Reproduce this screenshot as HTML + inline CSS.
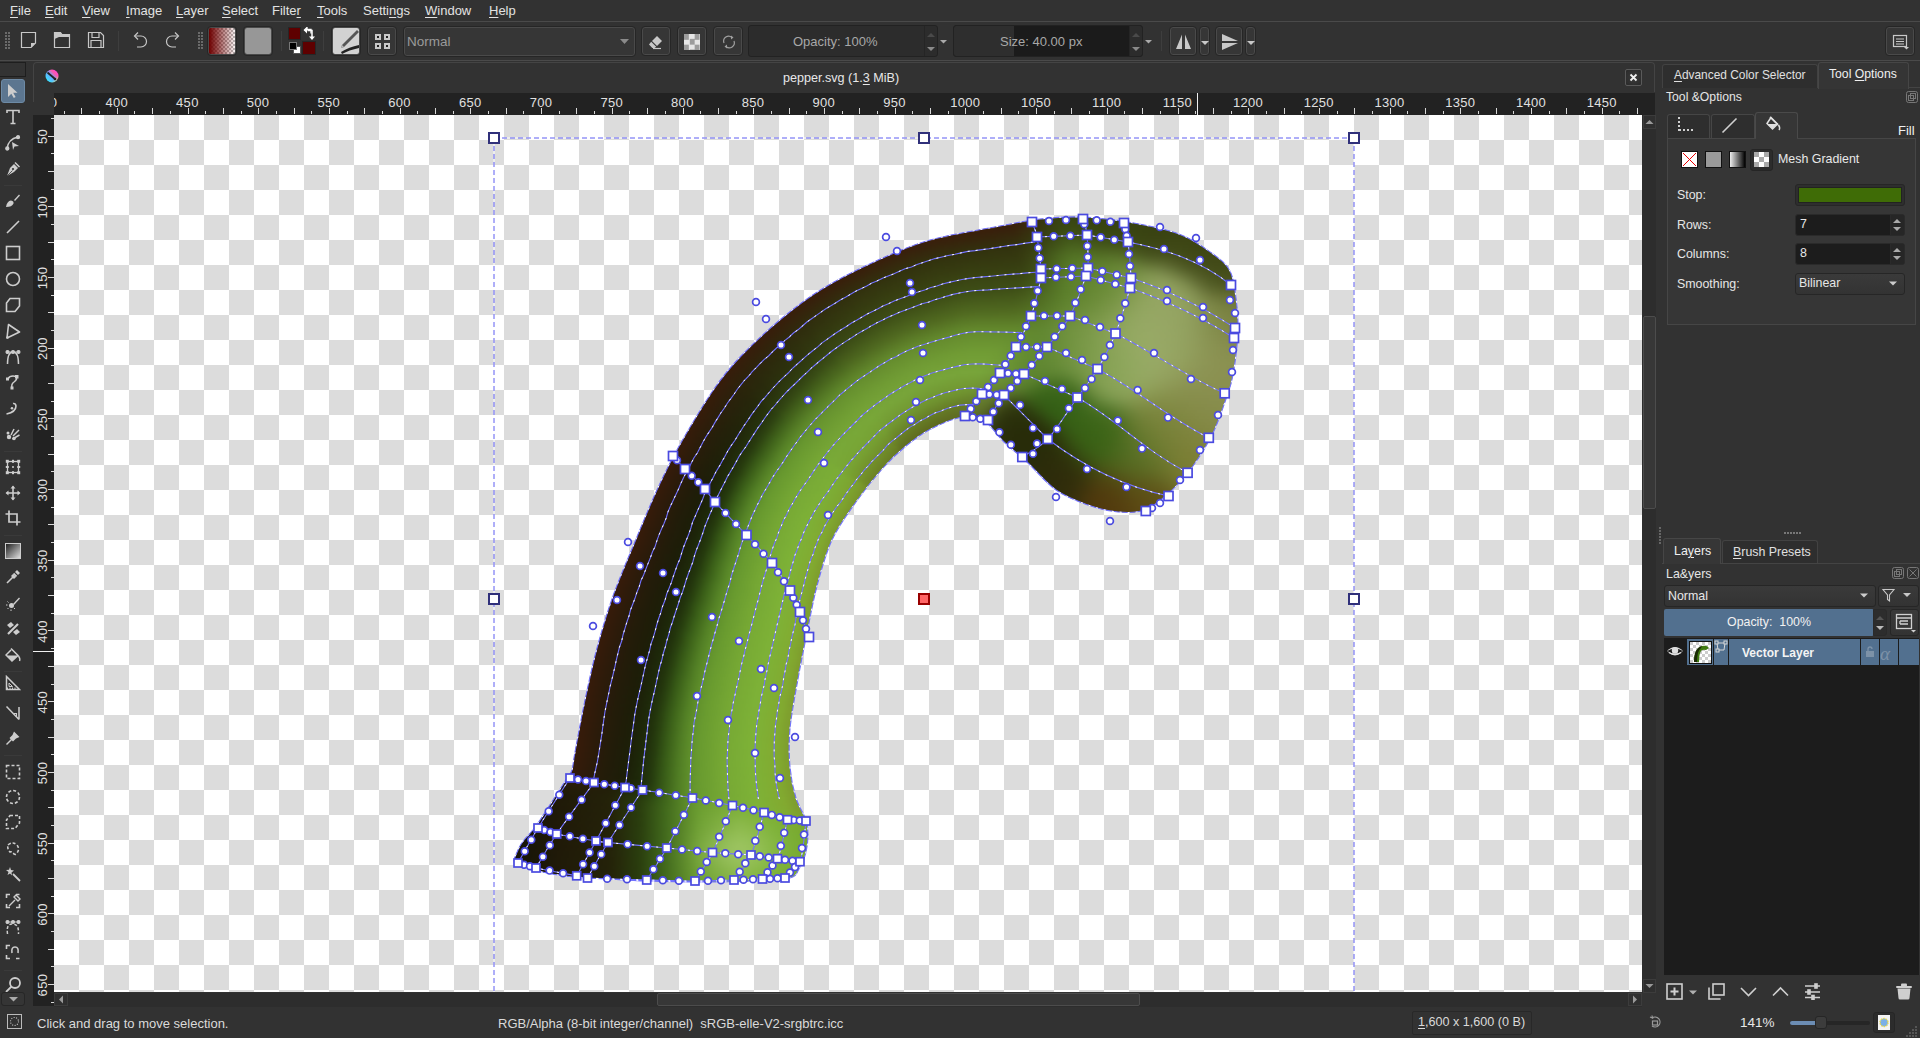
<!DOCTYPE html><html><head><meta charset="utf-8"><style>
*{box-sizing:border-box}
body{margin:0;width:1920px;height:1038px;background:#323232;overflow:hidden;position:relative;font-family:"Liberation Sans",sans-serif;color:#d6d6d6;font-size:13px}
.a{position:absolute}
.t{position:absolute;white-space:nowrap;line-height:13px;font-size:13px}
.pep{position:absolute;left:0;top:0;width:1920px;height:1038px;filter:blur(1.2px)}
.pep b{position:absolute;height:4px;display:block}
.u{text-decoration:underline;text-underline-offset:2px}
</style></head><body>

<div class="t" style="left:10px;top:4px;color:#e2e2e2"><span class="u">F</span>ile</div>
<div class="t" style="left:45px;top:4px;color:#e2e2e2"><span class="u">E</span>dit</div>
<div class="t" style="left:82px;top:4px;color:#e2e2e2"><span class="u">V</span>iew</div>
<div class="t" style="left:126px;top:4px;color:#e2e2e2"><span class="u">I</span>mage</div>
<div class="t" style="left:176px;top:4px;color:#e2e2e2"><span class="u">L</span>ayer</div>
<div class="t" style="left:222px;top:4px;color:#e2e2e2"><span class="u">S</span>elect</div>
<div class="t" style="left:272px;top:4px;color:#e2e2e2">Filte<span class="u">r</span></div>
<div class="t" style="left:317px;top:4px;color:#e2e2e2"><span class="u">T</span>ools</div>
<div class="t" style="left:363px;top:4px;color:#e2e2e2">Setti<span class="u">n</span>gs</div>
<div class="t" style="left:425px;top:4px;color:#e2e2e2"><span class="u">W</span>indow</div>
<div class="t" style="left:489px;top:4px;color:#e2e2e2"><span class="u">H</span>elp</div>
<div class="a" style="left:0;top:21px;width:1920px;height:1px;background:#4a4a4a"></div>
<div class="a" style="left:0;top:60px;width:1920px;height:1px;background:#4a4a4a"></div>
<svg class="a" style="left:5px;top:32px" width="5" height="17" viewBox="0 0 5 17" ><rect x="0" y="0" width="2" height="2" fill="#6a6a6a"/><rect x="0" y="3" width="2" height="2" fill="#6a6a6a"/><rect x="0" y="6" width="2" height="2" fill="#6a6a6a"/><rect x="0" y="9" width="2" height="2" fill="#6a6a6a"/><rect x="0" y="12" width="2" height="2" fill="#6a6a6a"/><rect x="0" y="15" width="2" height="2" fill="#6a6a6a"/><rect x="3" y="0" width="2" height="2" fill="#6a6a6a"/><rect x="3" y="3" width="2" height="2" fill="#6a6a6a"/><rect x="3" y="6" width="2" height="2" fill="#6a6a6a"/><rect x="3" y="9" width="2" height="2" fill="#6a6a6a"/><rect x="3" y="12" width="2" height="2" fill="#6a6a6a"/><rect x="3" y="15" width="2" height="2" fill="#6a6a6a"/></svg>
<svg class="a" style="left:198px;top:32px" width="5" height="17" viewBox="0 0 5 17" ><rect x="0" y="0" width="2" height="2" fill="#6a6a6a"/><rect x="0" y="3" width="2" height="2" fill="#6a6a6a"/><rect x="0" y="6" width="2" height="2" fill="#6a6a6a"/><rect x="0" y="9" width="2" height="2" fill="#6a6a6a"/><rect x="0" y="12" width="2" height="2" fill="#6a6a6a"/><rect x="0" y="15" width="2" height="2" fill="#6a6a6a"/><rect x="3" y="0" width="2" height="2" fill="#6a6a6a"/><rect x="3" y="3" width="2" height="2" fill="#6a6a6a"/><rect x="3" y="6" width="2" height="2" fill="#6a6a6a"/><rect x="3" y="9" width="2" height="2" fill="#6a6a6a"/><rect x="3" y="12" width="2" height="2" fill="#6a6a6a"/><rect x="3" y="15" width="2" height="2" fill="#6a6a6a"/></svg>
<svg class="a" style="left:20px;top:31px" width="17" height="18" viewBox="0 0 17 18" ><path d="M1.5,1.5H15.5V12L11,16.5H1.5Z" fill="none" stroke="#c8c8c8" stroke-width="1.2"/><path d="M15.5,12H11V16.5Z" fill="#c8c8c8"/></svg>
<svg class="a" style="left:53px;top:31px" width="18" height="18" viewBox="0 0 18 18" ><path d="M1.5,1.5H7.5L9,3.5H16.5V16.5H1.5Z" fill="none" stroke="#c8c8c8" stroke-width="1.2"/><path d="M1.5,1.5H7.5L9,3.5H16.5V6H6L1.5,8Z" fill="#c8c8c8"/></svg>
<svg class="a" style="left:87px;top:31px" width="18" height="18" viewBox="0 0 18 18" ><path d="M1.5,1.5H13.5L16.5,4.5V16.5H1.5Z" fill="none" stroke="#c8c8c8" stroke-width="1.2"/><path d="M5,1.5V6.5H12V1.5M4,16.5V9.5H14V16.5" fill="none" stroke="#c8c8c8" stroke-width="1.2"/><rect x="8" y="2" width="3" height="3.5" fill="#323232"/></svg>
<div class="a" style="left:118px;top:31px;width:1px;height:20px;background:#3e3e3e"></div>
<svg class="a" style="left:132px;top:31px" width="16" height="18" viewBox="0 0 16 18" ><path d="M3,5H9A5.5,5.5 0 0 1 9,16H5" fill="none" stroke="#c8c8c8" stroke-width="1.2"/><path d="M6,1.5L2.5,5L6,8.5" fill="none" stroke="#c8c8c8" stroke-width="1.2"/></svg>
<svg class="a" style="left:165px;top:31px" width="16" height="18" viewBox="0 0 16 18" ><path d="M13,5H7A5.5,5.5 0 0 0 7,16H11" fill="none" stroke="#c8c8c8" stroke-width="1.2"/><path d="M10,1.5L13.5,5L10,8.5" fill="none" stroke="#c8c8c8" stroke-width="1.2"/></svg>
<div class="a" style="left:207px;top:26px;width:30px;height:30px;border:1px solid #262626;border-radius:4px;background:#363636;box-shadow:inset 0 0 0 1px #4a4a4a"><div class="a" style="left:1px;top:1px;width:26px;height:26px;border-radius:2px;background:linear-gradient(90deg,#6e0000,rgba(110,0,0,0.05)),conic-gradient(#fff 0 25%,#bbb 0 50%,#fff 0 75%,#bbb 0) 0 0/4px 4px"></div></div>
<div class="a" style="left:243px;top:26px;width:30px;height:30px;border:1px solid #262626;border-radius:4px;background:#363636;box-shadow:inset 0 0 0 1px #4a4a4a"><div class="a" style="left:1px;top:1px;width:26px;height:26px;border-radius:2px;background:#979797"></div></div>
<div class="a" style="left:281px;top:31px;width:1px;height:20px;background:#3e3e3e"></div>
<div class="a" style="left:288px;top:27px;width:13px;height:13px;background:#5e0000;border:1px solid #262626"></div>
<div class="a" style="left:302px;top:41px;width:14px;height:14px;background:#5e0000;border:1px solid #262626"></div>
<div class="a" style="left:293px;top:46px;width:8px;height:8px;background:#fff;border:1px solid #555"></div>
<div class="a" style="left:289px;top:42px;width:8px;height:8px;background:#000;border:1px solid #777"></div>
<svg class="a" style="left:303px;top:27px" width="13" height="14" viewBox="0 0 13 14" ><path d="M1,3.5L4,0.5V2.5H8V6.5" fill="none" stroke="#fff" stroke-width="1.3"/><path d="M1,3.5L4,6.5V0.5Z" fill="#fff"/><path d="M9,13L6,9.5H12Z" fill="#fff"/><path d="M4.5,3.5H9V10" fill="none" stroke="#fff" stroke-width="1.5"/></svg>
<div class="a" style="left:323px;top:31px;width:1px;height:20px;background:#3e3e3e"></div>
<div class="a" style="left:331px;top:26px;width:30px;height:30px;border:1px solid #262626;border-radius:4px;background:#363636;box-shadow:inset 0 0 0 1px #4a4a4a"><div class="a" style="left:1px;top:1px;width:26px;height:26px;border-radius:2px;background:#d2d2d2"></div><svg class="a" style="left:1px;top:1px" width="26" height="26" viewBox="0 0 26 26" ><path d="M24,2L9,17L8,20L11,19L26,4Z" fill="#555"/><path d="M9,17L8,20L11,19Z" fill="#bbb"/><path d="M8,24Q16,19 26,17L26,20Q16,22 9,26Z" fill="#222"/></svg></div>
<div class="a" style="left:367px;top:26px;width:30px;height:30px;border:1px solid #262626;border-radius:4px;background:#363636;box-shadow:inset 0 0 0 1px #4a4a4a"><svg class="a" style="left:6px;top:6px" width="18" height="18" viewBox="0 0 18 18" ><rect x="1" y="1" width="6" height="6" fill="#c8c8c8"/><rect x="10" y="1" width="6" height="6" fill="#c8c8c8"/><rect x="1" y="10" width="6" height="6" fill="#c8c8c8"/><rect x="10" y="10" width="6" height="6" fill="#c8c8c8"/><rect x="3" y="3" width="2" height="2" fill="#222"/><rect x="12" y="3" width="2" height="2" fill="#222"/><rect x="3" y="12" width="2" height="2" fill="#222"/><rect x="12" y="12" width="2" height="2" fill="#222"/></svg></div>
<div class="a" style="left:403px;top:26px;width:233px;height:31px;border:1px solid #262626;border-radius:4px;background:#363636;box-shadow:inset 0 0 0 1px #4a4a4a"></div>
<div class="t" style="left:407px;top:35px;color:#9a9a9a;font-size:13.5px">Normal</div>
<svg class="a" style="left:620px;top:39px" width="10" height="6" viewBox="0 0 10 6" ><path d="M0,0H9L4.5,5Z" fill="#8a8a8a"/></svg>
<div class="a" style="left:641px;top:26px;width:30px;height:30px;border:1px solid #262626;border-radius:4px;background:#363636;box-shadow:inset 0 0 0 1px #4a4a4a"><svg class="a" style="left:6px;top:8px" width="16" height="16" viewBox="0 0 16 16" ><path d="M9,1L14,6L9,11L4,6Z" fill="#c8c8c8"/><path d="M3.2,6.8L8.2,11.8L6.5,13H4.3L1,9.5Z" fill="#c8c8c8"/><path d="M5,13.5H13" stroke="#c8c8c8" stroke-width="1.2"/></svg></div>
<div class="a" style="left:677px;top:26px;width:30px;height:30px;border:1px solid #262626;border-radius:4px;background:#363636;box-shadow:inset 0 0 0 1px #4a4a4a"><div class="a" style="left:6px;top:7px;width:16px;height:16px;background:conic-gradient(#e6e6e6 0 25%,#9c9c9c 0 50%,#e6e6e6 0 75%,#9c9c9c 0) 0 0/10.67px 10.67px"></div></div>
<div class="a" style="left:713px;top:26px;width:30px;height:30px;border:1px solid #262626;border-radius:4px;background:#363636;box-shadow:inset 0 0 0 1px #4a4a4a"><svg class="a" style="left:7px;top:7px" width="16" height="16" viewBox="0 0 16 16" ><path d="M3,9A5,5 0 0 1 11,3.5M13,7A5,5 0 0 1 5,12.5" fill="none" stroke="#a0a0a0" stroke-width="1.2"/><path d="M10,1.5L12.5,3.5L10,5.5Z M6,10.5L3.5,12.5L6,14.5Z" fill="#a0a0a0"/></svg></div>
<div class="a" style="left:748px;top:25px;width:190px;height:32px;border:1px solid #222;border-radius:3px;background:#2c2c2c"></div>
<div class="a" style="left:924px;top:26px;width:1px;height:30px;background:#252525"></div>
<svg class="a" style="left:926px;top:31px" width="10" height="22" viewBox="0 0 10 22" ><path d="M1,6L5,2L9,6Z" fill="#4a4a4a"/><path d="M1,16L5,20L9,16Z" fill="#8a8a8a"/></svg>
<div class="t" style="left:793px;top:35px;color:#a8a8a8">Opacity: 100%</div>
<svg class="a" style="left:940px;top:40px" width="7" height="4" viewBox="0 0 7 4" ><path d="M0,0H7L3.5,3.5Z" fill="#aaa"/></svg>
<div class="a" style="left:953px;top:25px;width:190px;height:32px;border:1px solid #222;border-radius:3px;background:#1b1b1b;overflow:hidden"><div class="a" style="left:0;top:0;width:60px;height:30px;background:#2e2e2e"></div><div class="a" style="left:175px;top:0;width:14px;height:30px;background:#2c2c2c;border-left:1px solid #252525"></div></div>
<svg class="a" style="left:1131px;top:31px" width="10" height="22" viewBox="0 0 10 22" ><path d="M1,6L5,2L9,6Z" fill="#4a4a4a"/><path d="M1,16L5,20L9,16Z" fill="#8a8a8a"/></svg>
<div class="t" style="left:1000px;top:35px;color:#a8a8a8">Size: 40.00 px</div>
<svg class="a" style="left:1145px;top:40px" width="7" height="4" viewBox="0 0 7 4" ><path d="M0,0H7L3.5,3.5Z" fill="#aaa"/></svg>
<div class="a" style="left:1161px;top:31px;width:1px;height:20px;background:#3e3e3e"></div>
<div class="a" style="left:1169px;top:26px;width:28px;height:30px;border:1px solid #262626;border-radius:4px;background:#363636;box-shadow:inset 0 0 0 1px #4a4a4a"><svg class="a" style="left:5px;top:6px" width="17" height="17" viewBox="0 0 17 17" ><path d="M7,1.5L1,16H7Z M10,1.5L16,16H10Z" fill="#c8c8c8"/></svg></div>
<div class="a" style="left:1199px;top:26px;width:11px;height:30px;border:1px solid #262626;border-radius:4px;background:#363636;box-shadow:inset 0 0 0 1px #4a4a4a"><svg class="a" style="left:1px;top:14px" width="8" height="5" viewBox="0 0 8 5" ><path d="M0,0H8L4,4Z" fill="#c8c8c8"/></svg></div>
<div class="a" style="left:1215px;top:26px;width:28px;height:30px;border:1px solid #262626;border-radius:4px;background:#363636;box-shadow:inset 0 0 0 1px #4a4a4a"><svg class="a" style="left:5px;top:6px" width="17" height="17" viewBox="0 0 17 17" ><path d="M1,1L17,8H1Z M1,10H17L1,17Z" fill="#c8c8c8"/></svg></div>
<div class="a" style="left:1245px;top:26px;width:11px;height:30px;border:1px solid #262626;border-radius:4px;background:#363636;box-shadow:inset 0 0 0 1px #4a4a4a"><svg class="a" style="left:1px;top:14px" width="8" height="5" viewBox="0 0 8 5" ><path d="M0,0H8L4,4Z" fill="#c8c8c8"/></svg></div>
<div class="a" style="left:1885px;top:26px;width:30px;height:30px;border:1px solid #262626;border-radius:4px;background:#363636;box-shadow:inset 0 0 0 1px #4a4a4a"><svg class="a" style="left:6px;top:7px" width="18" height="16" viewBox="0 0 18 16" ><rect x="1.5" y="1.5" width="13" height="11" fill="none" stroke="#c8c8c8" stroke-width="1.2"/><path d="M4,5H12M4,7.5H12M4,10H12" stroke="#c8c8c8" stroke-width="1.2"/><path d="M12,13H17L14.5,15.5Z" fill="#c8c8c8"/></svg></div>
<div class="a" style="left:0;top:62px;width:26px;height:15px;border:1px solid #1e1e1e;border-left:none;background:#333"></div>
<div class="a" style="left:33px;top:62px;width:1622px;height:40px;border:1px solid #444;border-bottom:none;border-radius:4px 4px 0 0"></div>
<div class="a" style="left:34px;top:92px;width:1622px;height:12px;background:#323232"></div>
<svg class="a" style="left:45px;top:69px" width="14" height="14" viewBox="0 0 14 14"><defs><linearGradient id="kl" x1="0" y1="1" x2="1" y2="0"><stop offset="0" stop-color="#2ff"/><stop offset="0.45" stop-color="#6af"/><stop offset="0.7" stop-color="#f5a"/><stop offset="1" stop-color="#f3f"/></linearGradient><linearGradient id="kl2" x1="0" y1="0" x2="1" y2="1"><stop offset="0" stop-color="#f5f" stop-opacity="0"/><stop offset="0.7" stop-color="#ff6" stop-opacity="0"/><stop offset="1" stop-color="#ff3"/></linearGradient></defs><circle cx="7" cy="7" r="6.5" fill="url(#kl)"/><circle cx="7" cy="7" r="6.5" fill="url(#kl2)"/><path d="M2.5,3.5L9.5,9.5" stroke="#222" stroke-width="1.8"/><circle cx="10" cy="10" r="1.3" fill="#222"/></svg>
<div class="t" style="left:783px;top:72px;color:#e8e8e8;font-size:12.6px">pepper.svg (1.<span class="u">3</span> MiB)</div>
<div class="a" style="left:1625px;top:69px;width:17px;height:17px;border:1px solid #5a5a5a;border-radius:2px;background:radial-gradient(#3a3a3a,#2a2a2a)"></div>
<svg class="a" style="left:1629px;top:73px" width="9" height="9" viewBox="0 0 9 9"><path d="M1.5,1.5L7.5,7.5M7.5,1.5L1.5,7.5" stroke="#f0f0f0" stroke-width="1.8"/></svg>
<div class="a" style="left:54px;top:93px;width:1601px;height:22px;background:#222"></div>
<div class="a" style="left:33px;top:115px;width:21px;height:891px;background:#222"></div>
<div class="a" style="left:54px;top:115px;width:1588px;height:877px;background-color:#fff;background-image:conic-gradient(#fff 0 25%,#dcdcdc 0 50%,#fff 0 75%,#dcdcdc 0);background-size:50px 50px"></div>
<svg class="a" style="left:0;top:0" width="1920" height="120" viewBox="0 0 1920 120"><defs><clipPath id="rc"><rect x="54" y="93" width="1601" height="22"/></clipPath></defs><g clip-path="url(#rc)" font-family="Liberation Sans" font-size="13" letter-spacing="0.3" fill="#e0e0e0"><rect x="64" y="111" width="1" height="3" fill="#d8d8d8"/><rect x="81" y="108" width="1" height="6" fill="#d8d8d8"/><rect x="99" y="111" width="1" height="3" fill="#d8d8d8"/><rect x="117" y="108" width="1" height="6" fill="#d8d8d8"/><rect x="134" y="111" width="1" height="3" fill="#d8d8d8"/><rect x="152" y="108" width="1" height="6" fill="#d8d8d8"/><rect x="170" y="111" width="1" height="3" fill="#d8d8d8"/><rect x="188" y="108" width="1" height="6" fill="#d8d8d8"/><rect x="205" y="111" width="1" height="3" fill="#d8d8d8"/><rect x="223" y="108" width="1" height="6" fill="#d8d8d8"/><rect x="241" y="111" width="1" height="3" fill="#d8d8d8"/><rect x="258" y="108" width="1" height="6" fill="#d8d8d8"/><rect x="276" y="111" width="1" height="3" fill="#d8d8d8"/><rect x="294" y="108" width="1" height="6" fill="#d8d8d8"/><rect x="311" y="111" width="1" height="3" fill="#d8d8d8"/><rect x="329" y="108" width="1" height="6" fill="#d8d8d8"/><rect x="347" y="111" width="1" height="3" fill="#d8d8d8"/><rect x="364" y="108" width="1" height="6" fill="#d8d8d8"/><rect x="382" y="111" width="1" height="3" fill="#d8d8d8"/><rect x="400" y="108" width="1" height="6" fill="#d8d8d8"/><rect x="417" y="111" width="1" height="3" fill="#d8d8d8"/><rect x="435" y="108" width="1" height="6" fill="#d8d8d8"/><rect x="453" y="111" width="1" height="3" fill="#d8d8d8"/><rect x="470" y="108" width="1" height="6" fill="#d8d8d8"/><rect x="488" y="111" width="1" height="3" fill="#d8d8d8"/><rect x="506" y="108" width="1" height="6" fill="#d8d8d8"/><rect x="523" y="111" width="1" height="3" fill="#d8d8d8"/><rect x="541" y="108" width="1" height="6" fill="#d8d8d8"/><rect x="559" y="111" width="1" height="3" fill="#d8d8d8"/><rect x="576" y="108" width="1" height="6" fill="#d8d8d8"/><rect x="594" y="111" width="1" height="3" fill="#d8d8d8"/><rect x="612" y="108" width="1" height="6" fill="#d8d8d8"/><rect x="629" y="111" width="1" height="3" fill="#d8d8d8"/><rect x="647" y="108" width="1" height="6" fill="#d8d8d8"/><rect x="665" y="111" width="1" height="3" fill="#d8d8d8"/><rect x="683" y="108" width="1" height="6" fill="#d8d8d8"/><rect x="700" y="111" width="1" height="3" fill="#d8d8d8"/><rect x="718" y="108" width="1" height="6" fill="#d8d8d8"/><rect x="736" y="111" width="1" height="3" fill="#d8d8d8"/><rect x="753" y="108" width="1" height="6" fill="#d8d8d8"/><rect x="771" y="111" width="1" height="3" fill="#d8d8d8"/><rect x="789" y="108" width="1" height="6" fill="#d8d8d8"/><rect x="806" y="111" width="1" height="3" fill="#d8d8d8"/><rect x="824" y="108" width="1" height="6" fill="#d8d8d8"/><rect x="842" y="111" width="1" height="3" fill="#d8d8d8"/><rect x="859" y="108" width="1" height="6" fill="#d8d8d8"/><rect x="877" y="111" width="1" height="3" fill="#d8d8d8"/><rect x="895" y="108" width="1" height="6" fill="#d8d8d8"/><rect x="912" y="111" width="1" height="3" fill="#d8d8d8"/><rect x="930" y="108" width="1" height="6" fill="#d8d8d8"/><rect x="948" y="111" width="1" height="3" fill="#d8d8d8"/><rect x="965" y="108" width="1" height="6" fill="#d8d8d8"/><rect x="983" y="111" width="1" height="3" fill="#d8d8d8"/><rect x="1001" y="108" width="1" height="6" fill="#d8d8d8"/><rect x="1018" y="111" width="1" height="3" fill="#d8d8d8"/><rect x="1036" y="108" width="1" height="6" fill="#d8d8d8"/><rect x="1054" y="111" width="1" height="3" fill="#d8d8d8"/><rect x="1071" y="108" width="1" height="6" fill="#d8d8d8"/><rect x="1089" y="111" width="1" height="3" fill="#d8d8d8"/><rect x="1107" y="108" width="1" height="6" fill="#d8d8d8"/><rect x="1124" y="111" width="1" height="3" fill="#d8d8d8"/><rect x="1142" y="108" width="1" height="6" fill="#d8d8d8"/><rect x="1160" y="111" width="1" height="3" fill="#d8d8d8"/><rect x="1178" y="108" width="1" height="6" fill="#d8d8d8"/><rect x="1195" y="111" width="1" height="3" fill="#d8d8d8"/><rect x="1213" y="108" width="1" height="6" fill="#d8d8d8"/><rect x="1231" y="111" width="1" height="3" fill="#d8d8d8"/><rect x="1248" y="108" width="1" height="6" fill="#d8d8d8"/><rect x="1266" y="111" width="1" height="3" fill="#d8d8d8"/><rect x="1284" y="108" width="1" height="6" fill="#d8d8d8"/><rect x="1301" y="111" width="1" height="3" fill="#d8d8d8"/><rect x="1319" y="108" width="1" height="6" fill="#d8d8d8"/><rect x="1337" y="111" width="1" height="3" fill="#d8d8d8"/><rect x="1354" y="108" width="1" height="6" fill="#d8d8d8"/><rect x="1372" y="111" width="1" height="3" fill="#d8d8d8"/><rect x="1390" y="108" width="1" height="6" fill="#d8d8d8"/><rect x="1407" y="111" width="1" height="3" fill="#d8d8d8"/><rect x="1425" y="108" width="1" height="6" fill="#d8d8d8"/><rect x="1443" y="111" width="1" height="3" fill="#d8d8d8"/><rect x="1460" y="108" width="1" height="6" fill="#d8d8d8"/><rect x="1478" y="111" width="1" height="3" fill="#d8d8d8"/><rect x="1496" y="108" width="1" height="6" fill="#d8d8d8"/><rect x="1513" y="111" width="1" height="3" fill="#d8d8d8"/><rect x="1531" y="108" width="1" height="6" fill="#d8d8d8"/><rect x="1549" y="111" width="1" height="3" fill="#d8d8d8"/><rect x="1566" y="108" width="1" height="6" fill="#d8d8d8"/><rect x="1584" y="111" width="1" height="3" fill="#d8d8d8"/><rect x="1602" y="108" width="1" height="6" fill="#d8d8d8"/><rect x="1619" y="111" width="1" height="3" fill="#d8d8d8"/><rect x="1637" y="108" width="1" height="6" fill="#d8d8d8"/><text x="46.0" y="107" text-anchor="middle">350</text><text x="116.7" y="107" text-anchor="middle">400</text><text x="187.4" y="107" text-anchor="middle">450</text><text x="258.1" y="107" text-anchor="middle">500</text><text x="328.8" y="107" text-anchor="middle">550</text><text x="399.6" y="107" text-anchor="middle">600</text><text x="470.3" y="107" text-anchor="middle">650</text><text x="541.0" y="107" text-anchor="middle">700</text><text x="611.7" y="107" text-anchor="middle">750</text><text x="682.4" y="107" text-anchor="middle">800</text><text x="753.1" y="107" text-anchor="middle">850</text><text x="823.8" y="107" text-anchor="middle">900</text><text x="894.6" y="107" text-anchor="middle">950</text><text x="965.3" y="107" text-anchor="middle">1000</text><text x="1036.0" y="107" text-anchor="middle">1050</text><text x="1106.7" y="107" text-anchor="middle">1100</text><text x="1177.4" y="107" text-anchor="middle">1150</text><text x="1248.1" y="107" text-anchor="middle">1200</text><text x="1318.8" y="107" text-anchor="middle">1250</text><text x="1389.6" y="107" text-anchor="middle">1300</text><text x="1460.3" y="107" text-anchor="middle">1350</text><text x="1531.0" y="107" text-anchor="middle">1400</text><text x="1601.7" y="107" text-anchor="middle">1450</text><rect x="1197" y="93" width="1" height="22" fill="#f0f0f0"/></g></svg>
<svg class="a" style="left:0;top:0" width="60" height="1038" viewBox="0 0 60 1038"><defs><clipPath id="vc"><rect x="33" y="115" width="21" height="891"/></clipPath></defs><g clip-path="url(#vc)" font-family="Liberation Sans" font-size="13" letter-spacing="0.3" fill="#e0e0e0"><rect x="51" y="118" width="3" height="1" fill="#d8d8d8"/><rect x="48" y="136" width="6" height="1" fill="#d8d8d8"/><rect x="51" y="153" width="3" height="1" fill="#d8d8d8"/><rect x="48" y="171" width="6" height="1" fill="#d8d8d8"/><rect x="51" y="189" width="3" height="1" fill="#d8d8d8"/><rect x="48" y="206" width="6" height="1" fill="#d8d8d8"/><rect x="51" y="224" width="3" height="1" fill="#d8d8d8"/><rect x="48" y="242" width="6" height="1" fill="#d8d8d8"/><rect x="51" y="259" width="3" height="1" fill="#d8d8d8"/><rect x="48" y="277" width="6" height="1" fill="#d8d8d8"/><rect x="51" y="295" width="3" height="1" fill="#d8d8d8"/><rect x="48" y="312" width="6" height="1" fill="#d8d8d8"/><rect x="51" y="330" width="3" height="1" fill="#d8d8d8"/><rect x="48" y="348" width="6" height="1" fill="#d8d8d8"/><rect x="51" y="365" width="3" height="1" fill="#d8d8d8"/><rect x="48" y="383" width="6" height="1" fill="#d8d8d8"/><rect x="51" y="401" width="3" height="1" fill="#d8d8d8"/><rect x="48" y="418" width="6" height="1" fill="#d8d8d8"/><rect x="51" y="436" width="3" height="1" fill="#d8d8d8"/><rect x="48" y="454" width="6" height="1" fill="#d8d8d8"/><rect x="51" y="471" width="3" height="1" fill="#d8d8d8"/><rect x="48" y="489" width="6" height="1" fill="#d8d8d8"/><rect x="51" y="507" width="3" height="1" fill="#d8d8d8"/><rect x="48" y="524" width="6" height="1" fill="#d8d8d8"/><rect x="51" y="542" width="3" height="1" fill="#d8d8d8"/><rect x="48" y="560" width="6" height="1" fill="#d8d8d8"/><rect x="51" y="577" width="3" height="1" fill="#d8d8d8"/><rect x="48" y="595" width="6" height="1" fill="#d8d8d8"/><rect x="51" y="613" width="3" height="1" fill="#d8d8d8"/><rect x="48" y="630" width="6" height="1" fill="#d8d8d8"/><rect x="51" y="648" width="3" height="1" fill="#d8d8d8"/><rect x="48" y="666" width="6" height="1" fill="#d8d8d8"/><rect x="51" y="684" width="3" height="1" fill="#d8d8d8"/><rect x="48" y="701" width="6" height="1" fill="#d8d8d8"/><rect x="51" y="719" width="3" height="1" fill="#d8d8d8"/><rect x="48" y="737" width="6" height="1" fill="#d8d8d8"/><rect x="51" y="754" width="3" height="1" fill="#d8d8d8"/><rect x="48" y="772" width="6" height="1" fill="#d8d8d8"/><rect x="51" y="790" width="3" height="1" fill="#d8d8d8"/><rect x="48" y="807" width="6" height="1" fill="#d8d8d8"/><rect x="51" y="825" width="3" height="1" fill="#d8d8d8"/><rect x="48" y="843" width="6" height="1" fill="#d8d8d8"/><rect x="51" y="860" width="3" height="1" fill="#d8d8d8"/><rect x="48" y="878" width="6" height="1" fill="#d8d8d8"/><rect x="51" y="896" width="3" height="1" fill="#d8d8d8"/><rect x="48" y="913" width="6" height="1" fill="#d8d8d8"/><rect x="51" y="931" width="3" height="1" fill="#d8d8d8"/><rect x="48" y="949" width="6" height="1" fill="#d8d8d8"/><rect x="51" y="966" width="3" height="1" fill="#d8d8d8"/><rect x="48" y="984" width="6" height="1" fill="#d8d8d8"/><rect x="51" y="1002" width="3" height="1" fill="#d8d8d8"/><text transform="translate(47,136.5) rotate(-90)" text-anchor="middle">50</text><text transform="translate(47,207.2) rotate(-90)" text-anchor="middle">100</text><text transform="translate(47,277.9) rotate(-90)" text-anchor="middle">150</text><text transform="translate(47,348.6) rotate(-90)" text-anchor="middle">200</text><text transform="translate(47,419.4) rotate(-90)" text-anchor="middle">250</text><text transform="translate(47,490.1) rotate(-90)" text-anchor="middle">300</text><text transform="translate(47,560.8) rotate(-90)" text-anchor="middle">350</text><text transform="translate(47,631.5) rotate(-90)" text-anchor="middle">400</text><text transform="translate(47,702.2) rotate(-90)" text-anchor="middle">450</text><text transform="translate(47,772.9) rotate(-90)" text-anchor="middle">500</text><text transform="translate(47,843.6) rotate(-90)" text-anchor="middle">550</text><text transform="translate(47,914.4) rotate(-90)" text-anchor="middle">600</text><text transform="translate(47,985.1) rotate(-90)" text-anchor="middle">650</text><rect x="33" y="651" width="21" height="1" fill="#f0f0f0"/></g></svg>
<div class="a" style="left:1642px;top:115px;width:14px;height:878px;background:#2d2d2d"></div>
<div class="a" style="left:1643px;top:316px;width:13px;height:193px;border:1px solid #4c4c4c;border-radius:2px;background:#373737"></div>
<div class="a" style="left:1643px;top:115px;width:13px;height:14px;border:1px solid #3c3c3c;background:#2f2f2f"></div>
<svg class="a" style="left:1645px;top:119px" width="9" height="6" viewBox="0 0 9 6"><path d="M0.5,5L4.5,1L8.5,5Z" fill="#9a9a9a"/></svg>
<div class="a" style="left:1643px;top:979px;width:13px;height:14px;border:1px solid #3c3c3c;background:#2f2f2f"></div>
<svg class="a" style="left:1645px;top:983px" width="9" height="6" viewBox="0 0 9 6"><path d="M0.5,1L4.5,5L8.5,1Z" fill="#9a9a9a"/></svg>
<div class="a" style="left:54px;top:993px;width:1588px;height:14px;background:#2d2d2d"></div>
<div class="a" style="left:657px;top:993px;width:483px;height:13px;border:1px solid #4c4c4c;border-radius:2px;background:#373737"></div>
<div class="a" style="left:54px;top:993px;width:14px;height:13px;border:1px solid #3c3c3c;background:#2f2f2f"></div>
<svg class="a" style="left:58px;top:995px" width="6" height="9" viewBox="0 0 6 9"><path d="M5,0.5L1,4.5L5,8.5Z" fill="#9a9a9a"/></svg>
<div class="a" style="left:1628px;top:993px;width:14px;height:13px;border:1px solid #3c3c3c;background:#2f2f2f"></div>
<svg class="a" style="left:1632px;top:995px" width="6" height="9" viewBox="0 0 6 9"><path d="M1,0.5L5,4.5L1,8.5Z" fill="#9a9a9a"/></svg>
<div class="a" style="left:1px;top:79px;width:24px;height:24px;border:1px solid #6d8aa5;border-radius:3px;background:#5c7690"></div>
<svg class="a" style="left:5px;top:83px" width="16" height="16" viewBox="0 0 16 16" fill="none" stroke="#cdcdcd" stroke-width="1.3"><path d="M3,1V14L6.3,10.8L8.8,15L10.6,14L8.2,9.8H12.5Z" fill="#cdcdcd" stroke="none"/></svg>
<svg class="a" style="left:5px;top:109px" width="16" height="16" viewBox="0 0 16 16" fill="none" stroke="#cdcdcd" stroke-width="1.3"><path d="M2,3V1.5H14V3M8,1.5V14.5M5.5,14.5H10.5M2,1.5V4M14,1.5V4" stroke-width="1.6"/></svg>
<svg class="a" style="left:5px;top:135px" width="16" height="16" viewBox="0 0 16 16" fill="none" stroke="#cdcdcd" stroke-width="1.3"><path d="M2,14Q3,4 13,2" stroke-width="1.6"/><circle cx="2.3" cy="13.5" r="1.5" fill="#cdcdcd"/><circle cx="13" cy="2.2" r="1.5" fill="#cdcdcd"/><path d="M7,7L14,11L9.5,11.5L8,15Z" fill="#cdcdcd" stroke="none"/></svg>
<svg class="a" style="left:5px;top:161px" width="16" height="16" viewBox="0 0 16 16" fill="none" stroke="#cdcdcd" stroke-width="1.3"><path d="M2,15L5,7L9,3L13,7L9,11Z" fill="#cdcdcd" stroke="none"/><path d="M10,1.5L14.5,6" stroke-width="1.5"/><circle cx="8" cy="8" r="1.1" fill="#323232" stroke="none"/><path d="M2,15L7.5,9.5" stroke="#323232" stroke-width="0.8"/></svg>
<div class="a" style="left:4px;top:185px;width:18px;height:1px;background:#3a3a3a"></div>
<svg class="a" style="left:5px;top:192px" width="16" height="16" viewBox="0 0 16 16" fill="none" stroke="#cdcdcd" stroke-width="1.3"><path d="M9,8L14,2.5L15,3.5L10,9Z" fill="#cdcdcd" stroke="none"/><path d="M1,15Q2,9 6,8.5Q9,9 8.5,11.5Q7,15 1,15Z" fill="#cdcdcd" stroke="none"/></svg>
<svg class="a" style="left:5px;top:219px" width="16" height="16" viewBox="0 0 16 16" fill="none" stroke="#cdcdcd" stroke-width="1.3"><path d="M2,14L14,2" stroke-width="1.6"/></svg>
<svg class="a" style="left:5px;top:245px" width="16" height="16" viewBox="0 0 16 16" fill="none" stroke="#cdcdcd" stroke-width="1.3"><rect x="1.5" y="1.5" width="13" height="13" stroke-width="1.6"/></svg>
<svg class="a" style="left:5px;top:271px" width="16" height="16" viewBox="0 0 16 16" fill="none" stroke="#cdcdcd" stroke-width="1.3"><circle cx="8" cy="8" r="6.5" stroke-width="1.6"/></svg>
<svg class="a" style="left:5px;top:297px" width="16" height="16" viewBox="0 0 16 16" fill="none" stroke="#cdcdcd" stroke-width="1.3"><path d="M5,1.5H14.5V9L10,14.5H1.5V6Z" stroke-width="1.6"/></svg>
<svg class="a" style="left:5px;top:323px" width="16" height="16" viewBox="0 0 16 16" fill="none" stroke="#cdcdcd" stroke-width="1.3"><path d="M3.5,1.5L14.5,9L2,15Z" stroke-width="1.6" stroke-linejoin="round"/><circle cx="2.5" cy="14.5" r="1.3" fill="#cdcdcd" stroke="none"/></svg>
<svg class="a" style="left:5px;top:349px" width="16" height="16" viewBox="0 0 16 16" fill="none" stroke="#cdcdcd" stroke-width="1.3"><path d="M2.5,15Q2.5,3 8,3Q13.5,3 13.5,15" stroke-width="1.5"/><path d="M2,3H14" stroke-width="0.9"/><circle cx="2.5" cy="3" r="1.4" fill="#cdcdcd"/><circle cx="8" cy="3" r="1.4" fill="#cdcdcd"/><circle cx="13.5" cy="3" r="1.4" fill="#cdcdcd"/></svg>
<svg class="a" style="left:5px;top:374px" width="16" height="16" viewBox="0 0 16 16" fill="none" stroke="#cdcdcd" stroke-width="1.3"><path d="M3,5Q5,1 11,2.5Q13,5 9,8Q6,10 7,14" stroke-width="1.5"/><rect x="1" y="3.5" width="3" height="3" fill="#cdcdcd" stroke="none"/><rect x="10" y="1" width="3.5" height="3.5" fill="#cdcdcd" stroke="none"/><rect x="5.5" y="12.5" width="3" height="3" fill="#cdcdcd" stroke="none"/></svg>
<svg class="a" style="left:5px;top:400px" width="16" height="16" viewBox="0 0 16 16" fill="none" stroke="#cdcdcd" stroke-width="1.3"><path d="M1.5,14Q11,12 11,6Q10.5,3 8,3.5" stroke-width="1.6"/><circle cx="7" cy="8.3" r="1.3" fill="#cdcdcd" stroke="none"/></svg>
<svg class="a" style="left:5px;top:426px" width="16" height="16" viewBox="0 0 16 16" fill="none" stroke="#cdcdcd" stroke-width="1.3"><path d="M6,9L9,3M8,10L14,4M7.5,13L14.5,9" stroke-width="1.5"/><circle cx="4" cy="11" r="2.2" fill="#cdcdcd" stroke="none"/><circle cx="9" cy="12.5" r="1.8" fill="#cdcdcd" stroke="none"/><circle cx="3" cy="7" r="1.5" fill="#cdcdcd" stroke="none"/></svg>
<div class="a" style="left:4px;top:451px;width:18px;height:1px;background:#3a3a3a"></div>
<svg class="a" style="left:5px;top:459px" width="16" height="16" viewBox="0 0 16 16" fill="none" stroke="#cdcdcd" stroke-width="1.3"><rect x="2.5" y="2.5" width="11" height="11" stroke-width="1.3"/><rect x="0.8" y="0.8" width="3" height="3" fill="#cdcdcd" stroke="none"/><rect x="12.2" y="0.8" width="3" height="3" fill="#cdcdcd" stroke="none"/><rect x="0.8" y="12.2" width="3" height="3" fill="#cdcdcd" stroke="none"/><rect x="12.2" y="12.2" width="3" height="3" fill="#cdcdcd" stroke="none"/><rect x="7" y="0.8" width="2" height="3" fill="#cdcdcd" stroke="none"/><rect x="7" y="12.2" width="2" height="3" fill="#cdcdcd" stroke="none"/><rect x="0.8" y="7" width="3" height="2" fill="#cdcdcd" stroke="none"/><rect x="12.2" y="7" width="3" height="2" fill="#cdcdcd" stroke="none"/><circle cx="8" cy="8" r="1" fill="#cdcdcd" stroke="none"/></svg>
<svg class="a" style="left:5px;top:485px" width="16" height="16" viewBox="0 0 16 16" fill="none" stroke="#cdcdcd" stroke-width="1.3"><path d="M8,1.5V14.5M1.5,8H14.5" stroke-width="1.6"/><path d="M8,0.5L10.5,3.5H5.5Z M8,15.5L10.5,12.5H5.5Z M0.5,8L3.5,5.5V10.5Z M15.5,8L12.5,5.5V10.5Z" fill="#cdcdcd" stroke="none"/></svg>
<svg class="a" style="left:5px;top:510px" width="16" height="16" viewBox="0 0 16 16" fill="none" stroke="#cdcdcd" stroke-width="1.3"><path d="M4,0.5V12H15.5M0.5,4H12V15.5" stroke-width="1.7"/></svg>
<div class="a" style="left:4px;top:535px;width:18px;height:1px;background:#3a3a3a"></div>
<div class="a" style="left:5px;top:543px;width:16px;height:16px;border:1.5px solid #cdcdcd;background:linear-gradient(135deg,#222,#ddd)"></div>
<svg class="a" style="left:5px;top:569px" width="16" height="16" viewBox="0 0 16 16" fill="none" stroke="#cdcdcd" stroke-width="1.3"><path d="M2,14L9,7" stroke-width="1.6"/><path d="M8,5L11,8L9,10L6,7Z M10,3L13,6L15,4L12,1Z" fill="#cdcdcd" stroke="none"/><path d="M8.5,4.5L11.5,7.5" stroke-width="1.8"/></svg>
<svg class="a" style="left:5px;top:595px" width="16" height="16" viewBox="0 0 16 16" fill="none" stroke="#cdcdcd" stroke-width="1.3"><path d="M8,9L14,2.5L15,3.5L9,10Z" fill="#cdcdcd" stroke="none"/><circle cx="6.5" cy="10.5" r="2.5" fill="#cdcdcd" stroke="none"/><path d="M1,10H2.5M6,14.5V16M2.5,14L3.5,13M2.5,6.5L3.5,7.5M10,14L9,13" stroke-width="1"/></svg>
<svg class="a" style="left:5px;top:621px" width="16" height="16" viewBox="0 0 16 16" fill="none" stroke="#cdcdcd" stroke-width="1.3"><path d="M2,4L6,1L9,4L5,7Z M8,11L12,8L15,11L11,14Z" fill="#cdcdcd" stroke="none"/><path d="M3,13L13,3" stroke-width="2.2"/></svg>
<svg class="a" style="left:5px;top:647px" width="16" height="16" viewBox="0 0 16 16" fill="none" stroke="#cdcdcd" stroke-width="1.3"><path d="M6,1.5L13,8.5L7,14L1,8L6,3" stroke-width="1.5"/><path d="M2,8.5L13,8.5L7,14Z" fill="#cdcdcd" stroke="none"/><path d="M13.5,9Q15.5,12 14.5,14" stroke-width="1.4"/></svg>
<div class="a" style="left:4px;top:671px;width:18px;height:1px;background:#3a3a3a"></div>
<svg class="a" style="left:5px;top:675px" width="16" height="16" viewBox="0 0 16 16" fill="none" stroke="#cdcdcd" stroke-width="1.3"><path d="M1.5,1.5V14.5H14.5Z" stroke-width="1.5"/><path d="M4,8V11.5H7.5Z" stroke-width="1"/><path d="M2.5,14V12.5M5,14V12.5M7.5,14V12.5M10,14V12.5" stroke-width="1"/></svg>
<svg class="a" style="left:5px;top:705px" width="16" height="16" viewBox="0 0 16 16" fill="none" stroke="#cdcdcd" stroke-width="1.3"><path d="M1.5,1.5L14,14.5M14,2V14.5" stroke-width="1.5"/><path d="M9,8.5H11.5V12" stroke-width="1.1"/></svg>
<svg class="a" style="left:5px;top:730px" width="16" height="16" viewBox="0 0 16 16" fill="none" stroke="#cdcdcd" stroke-width="1.3"><path d="M1.5,14.5L7,9" stroke-width="1.5"/><path d="M9,1.5L14.5,7L11,8.5L8,11.5L4.5,8L7.5,5Z" fill="#cdcdcd" stroke="none"/></svg>
<div class="a" style="left:4px;top:755px;width:18px;height:1px;background:#3a3a3a"></div>
<svg class="a" style="left:5px;top:764px" width="16" height="16" viewBox="0 0 16 16" fill="none" stroke="#cdcdcd" stroke-width="1.3"><rect x="1.5" y="1.5" width="13" height="13" stroke-width="1.6" stroke-dasharray="3 2"/></svg>
<svg class="a" style="left:5px;top:789px" width="16" height="16" viewBox="0 0 16 16" fill="none" stroke="#cdcdcd" stroke-width="1.3"><circle cx="8" cy="8" r="6.5" stroke-width="1.6" stroke-dasharray="3 2"/></svg>
<svg class="a" style="left:5px;top:814px" width="16" height="16" viewBox="0 0 16 16" fill="none" stroke="#cdcdcd" stroke-width="1.3"><path d="M5,1.5H14.5V9L10,14.5H1.5V6Z" stroke-width="1.6" stroke-dasharray="3 2"/></svg>
<svg class="a" style="left:5px;top:841px" width="16" height="16" viewBox="0 0 16 16" fill="none" stroke="#cdcdcd" stroke-width="1.3"><path d="M3,4Q8,0 12,4Q15,8 12,12Q11,14 9,13Q7,10 5,11Q2,8 3,4Z" stroke-width="1.6" stroke-dasharray="3 2"/></svg>
<svg class="a" style="left:5px;top:866px" width="16" height="16" viewBox="0 0 16 16" fill="none" stroke="#cdcdcd" stroke-width="1.3"><path d="M8,8L15,15" stroke-width="1.8"/><path d="M5,1L6,4L9,4.5L6.5,6.5L7,9.5L5,7.5L2.5,9L3.5,6L1,4L4,3.8Z" fill="#cdcdcd" stroke="none"/></svg>
<svg class="a" style="left:5px;top:893px" width="16" height="16" viewBox="0 0 16 16" fill="none" stroke="#cdcdcd" stroke-width="1.3"><path d="M1.5,5V1.5H5M11,1.5H14.5M1.5,11V14.5H5M14.5,11V14.5H11" stroke-width="1.6"/><path d="M4,13L10,7M9,4L13,8L15,6L11,2Z" stroke-width="1.4"/></svg>
<svg class="a" style="left:5px;top:919px" width="16" height="16" viewBox="0 0 16 16" fill="none" stroke="#cdcdcd" stroke-width="1.3"><path d="M2.5,15Q1,4 8,5Q14,5 13.5,15" stroke-width="1.5" stroke-dasharray="3 2"/><path d="M2,3H14" stroke-width="0.9"/><circle cx="2.5" cy="3" r="1.4" fill="#cdcdcd"/><circle cx="8" cy="3" r="1.4" fill="#cdcdcd"/><circle cx="13.5" cy="3" r="1.4" fill="#cdcdcd"/></svg>
<svg class="a" style="left:5px;top:944px" width="16" height="16" viewBox="0 0 16 16" fill="none" stroke="#cdcdcd" stroke-width="1.3"><path d="M1.5,5V1.5H5M1.5,11V14.5H5M11,14.5H14.5" stroke-width="1.6"/><path d="M7,9Q6,3 10,3Q14,3 13,9" stroke-width="1.6"/></svg>
<div class="a" style="left:4px;top:970px;width:18px;height:1px;background:#3a3a3a"></div>
<div class="a" style="left:0;top:976px;width:26px;height:16px;overflow:hidden"><svg class="a" style="left:4px;top:0" width="18" height="18" viewBox="0 0 18 18" fill="none" stroke="#cdcdcd" stroke-width="1.8"><circle cx="11" cy="7" r="5"/><path d="M7.5,10.5L2,16"/></svg></div>
<div class="a" style="left:1px;top:992px;width:24px;height:14px;border:1px solid #262626;border-radius:3px;background:#353535"></div>
<svg class="a" style="left:9px;top:997px" width="9" height="5" viewBox="0 0 9 5"><path d="M0,0H9L4.5,4.5Z" fill="#aaa"/></svg>
<div class="a" style="left:54px;top:115px;width:1588px;height:877px;overflow:hidden"><div style="position:absolute;left:-54px;top:-115px;width:1920px;height:1038px"><div class="pep" style="clip-path:path('M515.0,864.0 C511.8,860.5 516.5,854.0 518.0,850.0 C519.5,846.0 521.0,844.0 524.0,840.0 C527.0,836.0 530.8,833.2 536.0,826.0 C541.2,818.8 549.8,805.0 555.0,797.0 C560.2,789.0 564.2,782.5 567.0,778.0 C569.8,773.5 570.7,774.3 572.0,770.0 C573.3,765.7 572.8,763.7 575.0,752.0 C577.2,740.3 581.3,717.3 585.0,700.0 C588.7,682.7 592.3,665.3 597.0,648.0 C601.7,630.7 606.8,613.3 613.0,596.0 C619.2,578.7 626.8,561.3 634.0,544.0 C641.2,526.7 648.7,508.0 656.0,492.0 C663.3,476.0 668.3,465.2 678.0,448.0 C687.7,430.8 703.5,404.3 714.0,389.0 C724.5,373.7 729.8,367.7 741.0,356.0 C752.2,344.3 767.5,330.2 781.0,319.0 C794.5,307.8 806.2,298.7 822.0,289.0 C837.8,279.3 858.0,269.2 876.0,261.0 C894.0,252.8 909.3,245.8 930.0,240.0 C950.7,234.2 981.7,229.5 1000.0,226.0 C1018.3,222.5 1026.5,220.5 1040.0,219.0 C1053.5,217.5 1066.3,216.5 1081.0,217.0 C1095.7,217.5 1111.7,219.2 1128.0,222.0 C1144.3,224.8 1164.8,228.7 1179.0,234.0 C1193.2,239.3 1204.5,247.8 1213.0,254.0 C1221.5,260.2 1226.2,263.7 1230.0,271.0 C1233.8,278.3 1234.7,287.8 1236.0,298.0 C1237.3,308.2 1238.5,319.2 1238.0,332.0 C1237.5,344.8 1235.0,363.8 1233.0,375.0 C1231.0,386.2 1229.3,389.3 1226.0,399.0 C1222.7,408.7 1218.5,421.8 1213.0,433.0 C1207.5,444.2 1200.3,456.0 1193.0,466.0 C1185.7,476.0 1177.0,485.7 1169.0,493.0 C1161.0,500.3 1153.5,506.8 1145.0,510.0 C1136.5,513.2 1127.5,512.8 1118.0,512.0 C1108.5,511.2 1098.3,508.7 1088.0,505.0 C1077.7,501.3 1066.2,497.2 1056.0,490.0 C1045.8,482.8 1035.7,470.0 1027.0,462.0 C1018.3,454.0 1010.5,448.3 1004.0,442.0 C997.5,435.7 992.8,428.0 988.0,424.0 C983.2,420.0 980.0,419.0 975.0,418.0 C970.0,417.0 965.7,416.0 958.0,418.0 C950.3,420.0 937.7,425.3 929.0,430.0 C920.3,434.7 913.7,439.7 906.0,446.0 C898.3,452.3 891.3,458.7 883.0,468.0 C874.7,477.3 864.5,490.0 856.0,502.0 C847.5,514.0 838.5,526.0 832.0,540.0 C825.5,554.0 821.2,570.5 817.0,586.0 C812.8,601.5 810.2,617.5 807.0,633.0 C803.8,648.5 800.8,663.0 798.0,679.0 C795.2,695.0 791.3,714.3 790.0,729.0 C788.7,743.7 789.0,755.5 790.0,767.0 C791.0,778.5 793.3,789.2 796.0,798.0 C798.7,806.8 804.0,813.8 806.0,820.0 C808.0,826.2 808.0,829.7 808.0,835.0 C808.0,840.3 807.5,846.3 806.0,852.0 C804.5,857.7 801.7,864.7 799.0,869.0 C796.3,873.3 797.3,876.0 790.0,878.0 C782.7,880.0 770.0,880.3 755.0,881.0 C740.0,881.7 718.2,882.0 700.0,882.0 C681.8,882.0 661.2,881.5 646.0,881.0 C630.8,880.5 621.2,879.7 609.0,879.0 C596.8,878.3 585.0,878.3 573.0,877.0 C561.0,875.7 546.7,873.2 537.0,871.0 C527.3,868.8 518.2,867.5 515.0,864.0Z')"><b style="left:1052px;top:215px;width:42px;background:linear-gradient(90deg,#383e10,#384211,#384412,#384512,#384512,#384412,#374311,#374211)"></b><b style="left:1026px;top:218px;width:96px;background:linear-gradient(90deg,#39290d,#392d0e,#39320f,#38380f,#383d10,#384111,#384412,#394612,#394612,#384512,#384412,#374311,#374211,#374211,#374211,#374211,#384211)"></b><b style="left:1011px;top:221px;width:132px;background:linear-gradient(90deg,#39200b,#3a220c,#3a260d,#392b0d,#39300e,#38360f,#383b10,#384011,#394412,#394613,#394713,#394713,#394612,#384412,#374311,#374311,#374211,#374211,#384311,#384312,#394312,#394312,#394211)"></b><b style="left:994px;top:224px;width:162px;background:linear-gradient(90deg,#39200b,#3a1f0b,#3a1f0b,#3a200b,#39230c,#39280d,#382d0e,#38330f,#383810,#383d11,#394212,#394613,#3a4813,#3a4913,#3a4813,#394713,#394512,#384412,#384312,#384312,#384312,#384312,#394312,#394312,#394312,#394212,#394211,#394212)"></b><b style="left:978px;top:227px;width:192px;background:linear-gradient(90deg,#39200b,#391f0b,#3a1f0b,#391f0b,#39200b,#38210c,#38230c,#38270d,#382b0e,#38300f,#38360f,#383b10,#394011,#394412,#3a4813,#3b4a14,#3c4b14,#3b4a14,#3a4813,#394613,#394512,#384412,#384412,#394412,#394412,#394412,#394412,#394312,#394312,#394212,#394312,#3a4312,#3a4312)"></b><b style="left:960px;top:230px;width:222px;background:linear-gradient(90deg,#39200b,#391f0b,#3a1f0b,#391f0b,#39200b,#39200b,#38210c,#37220c,#37230c,#37250c,#37290d,#372d0e,#37320f,#383810,#383d11,#394212,#3a4613,#3c4a14,#3d4d15,#3d4d15,#3d4c15,#3c4a14,#3a4814,#3a4713,#394613,#394613,#3a4613,#3a4613,#3a4513,#3a4413,#3a4412,#394312,#394312,#3a4312,#3a4312,#3b4413,#3b4413,#3c4413)"></b><b style="left:947px;top:233px;width:240px;background:linear-gradient(90deg,#39200b,#3a1f0b,#3a1f0b,#39200b,#39200b,#38210c,#38220c,#37230c,#37240c,#36250c,#36260c,#36270d,#362a0d,#362f0e,#37340f,#383910,#383e11,#3a4312,#3b4814,#3d4c15,#3e4f16,#3f5017,#3e4f16,#3d4d16,#3c4b15,#3b4914,#3b4814,#3b4814,#3b4814,#3b4714,#3b4714,#3b4613,#3a4513,#3a4412,#3a4312,#3a4312,#3a4413,#3b4413,#3c4413,#3c4513,#3c4513)"></b><b style="left:933px;top:236px;width:264px;background:linear-gradient(90deg,#39200b,#3a1f0b,#3a1f0b,#391f0b,#38210c,#38220c,#37230c,#37240c,#37240c,#36250c,#36260c,#36270d,#35280d,#352a0d,#352c0d,#36300e,#36340f,#373910,#383e11,#3a4313,#3c4814,#3e4d16,#405217,#415418,#415418,#405217,#3f4f17,#3e4d16,#3d4c15,#3d4b15,#3d4b15,#3d4a15,#3d4915,#3c4815,#3c4614,#3b4513,#3b4413,#3b4413,#3b4413,#3b4513,#3c4513,#3c4513,#3c4513,#3c4513,#3c4513)"></b><b style="left:920px;top:239px;width:282px;background:linear-gradient(90deg,#39200b,#3a1f0b,#3a1f0b,#39200b,#38210c,#38220c,#37230c,#37240c,#36250c,#36260c,#36270d,#35280d,#35290d,#352a0d,#342b0d,#342c0d,#342e0e,#35310e,#363610,#373b11,#384012,#3a4513,#3c4a15,#3f5017,#415518,#43581a,#43581a,#435719,#425419,#405218,#405017,#3f4f17,#3f4e17,#3f4e17,#3f4d17,#3e4b16,#3d4815,#3c4714,#3c4614,#3c4514,#3c4514,#3c4614,#3d4614,#3d4614,#3d4514,#3d4513,#3d4513,#3d4513)"></b><b style="left:913px;top:242px;width:294px;background:linear-gradient(90deg,#39200b,#3a1f0b,#39200b,#38210c,#38220c,#37230c,#37240c,#36260c,#36270d,#35280d,#35290d,#352a0d,#342b0d,#342c0d,#342d0d,#332e0d,#332f0e,#33300e,#34330f,#353810,#373c11,#394112,#3b4714,#3e4d16,#405218,#43581a,#455c1b,#465d1c,#465c1c,#455a1b,#44571a,#435519,#425419,#425319,#435219,#425119,#414e18,#3f4b17,#3e4916,#3d4815,#3d4715,#3d4715,#3d4715,#3e4715,#3e4715,#3e4614,#3d4614,#3d4514,#3d4513,#3d4514)"></b><b style="left:904px;top:245px;width:306px;background:linear-gradient(90deg,#39200b,#3a1f0b,#391f0b,#38210c,#37230c,#37240c,#36260c,#36270d,#35280d,#35290d,#342b0d,#342c0d,#342d0d,#332e0d,#332e0e,#332f0e,#33300e,#32310e,#32320e,#33340f,#343710,#363c11,#394112,#3b4714,#3e4d16,#415318,#44591a,#475f1c,#49621e,#49621e,#49601e,#485e1d,#475b1c,#465a1c,#46591c,#46581c,#46571c,#45541b,#43511a,#414d18,#404b17,#3f4917,#3f4916,#3f4916,#3f4916,#3f4816,#3f4815,#3e4715,#3e4614,#3d4614,#3d4614,#3e4614)"></b><b style="left:897px;top:248px;width:318px;background:linear-gradient(90deg,#39200b,#3a1f0b,#39200b,#38210c,#37230c,#36250c,#36270d,#35280d,#352a0d,#342b0d,#342c0d,#332e0d,#332f0e,#33300e,#33300e,#32310e,#32320e,#32330e,#32330e,#33340e,#33350f,#353810,#373d11,#394213,#3c4815,#3f4f17,#425619,#465c1c,#49631e,#4c6620,#4d6720,#4d6620,#4c6420,#4b621f,#4b601f,#4b601f,#4b5f1f,#4b5e20,#4a5b1f,#48571d,#45521b,#434f1a,#424d19,#414c19,#414b19,#414b18,#414a18,#404917,#3f4816,#3f4715,#3e4715,#3e4614,#3e4714,#3e4715)"></b><b style="left:889px;top:251px;width:330px;background:linear-gradient(90deg,#38210c,#3a1f0b,#391f0b,#38210c,#37240c,#36250c,#35280d,#35290d,#342b0d,#342c0d,#332e0d,#332f0e,#33300e,#32310e,#32320e,#32330e,#32330e,#33340e,#33340f,#33350f,#33350f,#34360f,#353910,#373d11,#3a4313,#3c4915,#404f17,#43571a,#475e1c,#4b651f,#4e6a21,#4f6c22,#506c23,#506b23,#4f6922,#4f6822,#4f6722,#506623,#506623,#4f6323,#4d5f22,#4b5a20,#48551e,#46521d,#45501c,#454f1c,#454f1b,#444d1a,#434c19,#414a17,#404916,#3f4816,#3f4715,#3f4715,#3f4715,#3f4815)"></b><b style="left:883px;top:254px;width:342px;background:linear-gradient(90deg,#39200b,#3a1f0b,#39200b,#38220c,#37240c,#36270c,#35280d,#352a0d,#342c0d,#332e0d,#332f0e,#32310e,#32320e,#32330e,#33340e,#33340f,#33350f,#33350f,#33360f,#34360f,#34370f,#34370f,#34380f,#363a10,#383f12,#3a4414,#3e4b16,#415218,#455a1b,#49621e,#4d6921,#506e23,#527124,#537125,#537025,#536f25,#536e25,#546e26,#556e27,#556d27,#556b27,#536726,#506124,#4d5c22,#4b5821,#4a5620,#495520,#49531f,#47511d,#454f1b,#434c19,#424a18,#414917,#404916,#404816,#404816,#404816,#404916)"></b><b style="left:876px;top:257px;width:348px;background:linear-gradient(90deg,#39200b,#3a1f0b,#39200b,#37220c,#36250c,#36260c,#35290d,#342b0d,#342d0d,#332f0e,#32310e,#32320e,#32330e,#33340e,#33350f,#33350f,#34360f,#34360f,#34370f,#34370f,#34380f,#353810,#353910,#353910,#363b10,#383f12,#3b4514,#3e4c16,#425319,#465b1b,#4a631e,#4e6b21,#527124,#547426,#557526,#567527,#577528,#577428,#587429,#59752a,#5a742b,#5b732c,#5a702b,#576a2a,#546528,#526127,#515e26,#505c25,#4e5a24,#4c5722,#49531f,#46501c,#444d1a,#424b18,#414a17,#414917,#414917,#414916,#414917)"></b><b style="left:869px;top:260px;width:360px;background:linear-gradient(90deg,#38210b,#3a1f0b,#39200b,#38220c,#36250c,#36270d,#35290d,#342b0d,#332e0d,#332f0e,#32320e,#32330e,#33340e,#33350f,#33360f,#34360f,#34370f,#34380f,#353810,#353910,#353910,#353a10,#353a10,#363b10,#363b10,#363c11,#384012,#3b4614,#3e4c16,#425419,#465c1c,#4b651f,#4f6c22,#537325,#567727,#577828,#597929,#5a792a,#5b792a,#5c7a2c,#5d7a2d,#5f7b2e,#607a30,#607830,#5e7430,#5c6f2f,#5a6a2e,#59672d,#58652c,#56622a,#535e27,#4f5924,#4b5520,#47511d,#454e1b,#434c19,#424b18,#424a18,#424a17,#414a17,#424a17)"></b><b style="left:862px;top:263px;width:372px;background:linear-gradient(90deg,#38200b,#391f0b,#39200b,#38220c,#36250c,#36270d,#352a0d,#342c0d,#332e0d,#33300e,#32320e,#33330e,#33350f,#33360f,#34360f,#34370f,#353810,#353910,#353a10,#353a10,#363b10,#363b10,#363b10,#363c10,#363c11,#363d11,#373d11,#384112,#3b4614,#3e4d16,#425419,#475d1c,#4b651f,#506d22,#547425,#577928,#597b29,#5a7c2a,#5c7c2b,#5d7d2c,#5f7e2e,#607f2f,#628031,#648033,#657f34,#657d35,#647935,#637535,#627234,#616f34,#5f6c32,#5b672f,#56612a,#515b25,#4c5621,#49521e,#464f1c,#444d1a,#434c19,#434b18,#424b18,#424b18,#434b18)"></b><b style="left:857px;top:266px;width:378px;background:linear-gradient(90deg,#38200b,#391f0b,#39200b,#37230c,#36250c,#35280d,#352a0d,#342d0d,#332f0e,#32310e,#32330e,#33340f,#33350f,#34370f,#34380f,#353910,#353910,#353a10,#363b10,#363c10,#363c11,#363d11,#373d11,#373d11,#373e11,#373e11,#373f11,#384012,#394313,#3c4915,#405017,#44571a,#48601d,#4d6820,#517024,#557726,#597b29,#5a7d2a,#5c7e2b,#5e7f2d,#5f802e,#618130,#638332,#668434,#688536,#6a8538,#6b833a,#6b813b,#6b7e3c,#6b7c3c,#6a793c,#67753a,#626f35,#5c6830,#56612a,#505a25,#4c5621,#49521e,#464f1c,#454d1a,#444c19,#434c18,#434c18,#444c19)"></b><b style="left:851px;top:269px;width:384px;background:linear-gradient(90deg,#38200b,#391f0b,#38200b,#37230c,#36260c,#35280d,#342b0d,#342d0d,#33300e,#32320e,#33330e,#33350f,#34360f,#34370f,#353910,#353a10,#363a10,#363b10,#363c11,#373d11,#373e11,#373e11,#373f11,#373f11,#383f11,#384012,#384012,#384112,#394212,#3a4513,#3d4b15,#415118,#45591b,#49611e,#4e6a21,#527124,#567827,#5a7c29,#5c7e2b,#5d802c,#5f812e,#61822f,#638431,#668533,#688736,#6b8839,#6d893b,#70893e,#728841,#738743,#738544,#738344,#707f42,#6b793d,#647137,#5d6830,#56612a,#515b25,#4c5621,#49521e,#474f1c,#454e1a,#444d19,#444d19,#454d19)"></b><b style="left:844px;top:272px;width:396px;background:linear-gradient(90deg,#38210c,#391f0b,#39200b,#37220c,#36250c,#35280d,#342b0d,#342d0d,#33300e,#32320e,#33340e,#33350f,#34360f,#34380f,#353910,#353a10,#363b10,#363c11,#373d11,#373e11,#373f11,#384012,#384012,#384112,#384112,#394212,#394212,#394312,#394313,#3a4413,#3b4714,#3e4c16,#415318,#455a1b,#4a621e,#4e6b21,#537225,#577927,#5a7d2a,#5c7f2b,#5e812d,#60822e,#628430,#648532,#678734,#6a8937,#6d8b3a,#708c3d,#738e41,#768e45,#798e48,#7b8e4a,#7b8c4b,#79894a,#758346,#6e7c40,#667339,#5f6a32,#57622b,#515b25,#4d5621,#49521e,#47501c,#464f1b,#464e1a,#464f1a,#47501b)"></b><b style="left:839px;top:275px;width:402px;background:linear-gradient(90deg,#38200b,#391f0b,#38200b,#37230c,#36250c,#35290d,#342b0d,#332e0d,#33300e,#32330e,#33340f,#34360f,#34370f,#353810,#353a10,#363b10,#363c11,#373e11,#373e11,#384011,#384112,#384112,#394212,#394312,#394313,#394413,#3a4413,#3a4413,#3a4513,#3a4513,#3b4614,#3d4a15,#405017,#43571a,#475e1c,#4c6620,#506e23,#547526,#587b29,#5b7f2b,#5d802c,#5f822e,#618430,#648531,#668734,#698936,#6c8b39,#6f8d3c,#738f40,#779145,#7b9349,#7f944d,#819450,#829351,#809050,#7c8b4c,#768346,#6e7a3f,#657137,#5d6830,#555f29,#505924,#4c5520,#49521e,#48511c,#48501c,#48511c,#4a521d)"></b><b style="left:834px;top:278px;width:408px;background:linear-gradient(90deg,#38200b,#391f0b,#38200b,#37230c,#36260c,#35290d,#342c0d,#332f0e,#32310e,#32330e,#33350f,#34360f,#34380f,#353910,#363a10,#363c10,#373d11,#373e11,#384012,#384112,#394212,#394313,#3a4413,#3a4513,#3a4513,#3a4613,#3a4613,#3b4614,#3b4714,#3b4714,#3b4714,#3c4915,#3e4d16,#415318,#455a1b,#49621e,#4d6921,#527124,#567727,#5a7d2a,#5c802c,#5e812d,#61832f,#638531,#658733,#688935,#6b8b38,#6e8d3b,#728f3f,#769243,#7b9448,#7f974d,#839851,#869954,#879856,#869655,#829152,#7c8a4c,#748245,#6b783d,#626d34,#5a642d,#535d26,#4e5822,#4c551f,#4a531e,#4a531e,#4b541e,#4d551f)"></b><b style="left:828px;top:281px;width:414px;background:linear-gradient(90deg,#38200b,#391e0b,#38200b,#37230c,#36260c,#35290d,#342b0d,#332f0e,#32310e,#33330e,#33350f,#34370f,#353810,#353a10,#363b10,#363c11,#373e11,#383f11,#384112,#394212,#394313,#3a4413,#3a4513,#3b4614,#3b4714,#3b4814,#3b4814,#3b4814,#3c4914,#3c4914,#3c4915,#3c4a15,#3d4c15,#3f5017,#425619,#465c1c,#4a641f,#4e6b22,#537225,#577928,#5b7e2a,#5d802c,#5f822e,#618430,#648631,#668834,#698a36,#6c8c39,#6f8e3c,#739140,#789445,#7d974a,#829950,#869b54,#899d58,#8b9c59,#8a9b59,#879756,#839152,#7c8a4c,#738044,#69753b,#606a32,#58622a,#525c25,#4f5822,#4e5621,#4d5620,#4e5721,#505922)"></b><b style="left:823px;top:284px;width:420px;background:linear-gradient(90deg,#38200b,#391e0b,#38200b,#37230c,#35260c,#34290d,#342c0d,#332f0e,#32320e,#33340e,#33360f,#34370f,#353910,#353a10,#363c10,#373d11,#373f11,#384012,#394212,#394313,#3a4513,#3a4613,#3b4714,#3b4814,#3c4914,#3c4915,#3c4a15,#3c4a15,#3c4a15,#3d4b15,#3d4b15,#3d4c15,#3d4c15,#3f4f16,#415318,#44591a,#48601d,#4c6720,#506e23,#547526,#587b29,#5c7f2b,#5e812d,#60832f,#638531,#658733,#688935,#6a8b38,#6e8d3b,#71903e,#769343,#7b9648,#80994d,#859c53,#899e57,#8c9f5a,#8e9f5c,#8d9e5c,#8b9b5a,#879656,#818f50,#788648,#6e7a3f,#646f36,#5c662e,#566029,#535c25,#525a24,#525a23,#535b24,#555e26)"></b><b style="left:818px;top:287px;width:426px;background:linear-gradient(90deg,#38200b,#391e0b,#38200b,#36230c,#35260c,#34290d,#332c0d,#322f0e,#32320e,#33340e,#34360f,#34380f,#353910,#363b10,#363c11,#373e11,#384012,#384112,#394312,#3a4413,#3a4613,#3b4714,#3c4814,#3c4915,#3c4b15,#3d4b15,#3d4c15,#3d4c15,#3d4d16,#3d4d16,#3e4d16,#3e4e16,#3e4e16,#3e4f16,#405217,#435719,#465d1c,#4a631e,#4e6a21,#527124,#567727,#5a7d2a,#5d802c,#5f822e,#628430,#648632,#678834,#698a36,#6c8c39,#708f3d,#749141,#789445,#7e984b,#839b50,#889e55,#8ca05a,#8ea15c,#90a15e,#8fa05e,#8e9e5c,#8a9959,#859354,#7d8a4c,#738043,#69743a,#616b32,#5b652c,#586129,#565f27,#575f27,#586128,#5b642a)"></b><b style="left:813px;top:290px;width:426px;background:linear-gradient(90deg,#38200b,#391e0b,#38200b,#36230c,#35260c,#34290d,#332c0d,#322f0e,#32320e,#33340f,#34360f,#343810,#353a10,#363b10,#373d11,#373f11,#384012,#394212,#394413,#3a4513,#3b4714,#3b4814,#3c4a15,#3d4b15,#3d4c15,#3e4d16,#3e4e16,#3e4f16,#3f4f16,#3f4f17,#3f5017,#405017,#405117,#405117,#415318,#435619,#465b1b,#49611d,#4c6720,#506d22,#547325,#587928,#5b7e2b,#5e812d,#60832f,#638531,#658733,#688935,#6b8b38,#6e8e3b,#72903f,#769343,#7b9648,#809a4d,#869d53,#8aa058,#8ea15c,#90a25e,#91a25f,#91a15f,#909f5e,#8d9c5b,#889656,#818e50,#788447,#6e793e,#667036,#606a30,#5d662d,#5c652c,#5d652c,#5e672d)"></b><b style="left:808px;top:293px;width:432px;background:linear-gradient(90deg,#37200b,#391e0b,#38200b,#36230c,#35260c,#34290d,#332c0d,#322f0e,#32320e,#33340f,#34360f,#34380f,#353a10,#363c10,#373e11,#383f11,#384112,#394313,#3a4513,#3b4614,#3b4814,#3c4915,#3d4b15,#3d4c15,#3e4e16,#3f4f16,#405117,#405217,#415318,#415318,#425318,#425418,#425418,#425518,#435519,#445719,#465a1b,#485f1d,#4b651f,#4f6b21,#527024,#567627,#597b29,#5d802c,#5f822e,#628430,#648632,#678835,#6a8b37,#6d8d3a,#708f3d,#749241,#799546,#7e984b,#839c50,#889f56,#8ca15a,#90a35d,#92a35f,#92a360,#92a360,#91a15f,#8e9e5d,#8a9958,#849152,#7b884a,#737e41,#6b753a,#666f34,#636c31,#626b30,#636b30,#656d31)"></b><b style="left:804px;top:296px;width:438px;background:linear-gradient(90deg,#38200b,#391e0b,#37200b,#36230c,#35260c,#34290d,#332d0d,#322f0e,#32320e,#33340f,#34370f,#343810,#353a10,#363d11,#373e11,#384012,#394212,#3a4413,#3a4613,#3b4814,#3c4914,#3d4b15,#3d4c15,#3e4e16,#3f5017,#405217,#425318,#435519,#435619,#445719,#445719,#445719,#45581a,#45581a,#45591a,#45591a,#475c1b,#495f1d,#4b641f,#4e6921,#516f23,#547426,#587928,#5c7e2b,#5f822e,#618430,#648632,#668834,#698a37,#6c8c39,#708f3d,#739140,#779444,#7c9749,#819b4f,#879e54,#8ba159,#8fa35d,#91a45f,#93a461,#93a461,#93a361,#91a15f,#8f9e5d,#8b9a59,#859253,#7d8a4b,#768143,#6f793d,#6b7438,#687135,#687134,#697135,#6b7336)"></b><b style="left:800px;top:299px;width:444px;background:linear-gradient(90deg,#38200b,#391e0b,#37200b,#36230c,#34270c,#33290d,#322d0d,#31300e,#32320e,#33350f,#34370f,#353910,#353b10,#363d11,#373f11,#384112,#394313,#3a4513,#3b4714,#3c4914,#3c4b15,#3d4c15,#3e4d16,#3f5017,#405217,#425418,#445619,#45581a,#45591a,#465a1b,#465b1b,#475b1b,#475b1b,#475c1b,#475c1b,#485c1b,#485e1c,#4a601d,#4c641f,#4e6921,#516e23,#547225,#577728,#5a7c2a,#5e812d,#618330,#638632,#668834,#698a36,#6c8c39,#6f8e3c,#739140,#779443,#7b9748,#809a4d,#859d52,#8aa057,#8ea25b,#91a45f,#93a561,#94a562,#94a462,#93a361,#92a160,#8f9e5d,#8b9a59,#869353,#7f8b4c,#788345,#737d3f,#6f793b,#6e7639,#6d7638,#6e7638,#707839)"></b><b style="left:796px;top:302px;width:450px;background:linear-gradient(90deg,#381f0b,#391e0b,#37200b,#35230c,#34270c,#332a0d,#322d0d,#31300e,#32320e,#33340f,#34370f,#343910,#363b10,#363d11,#384012,#394212,#3a4413,#3b4614,#3b4814,#3c4a15,#3d4c15,#3e4d16,#3f4f16,#415217,#425418,#445619,#45591a,#475b1b,#485c1b,#485e1c,#495e1c,#495f1c,#495f1c,#4a5f1c,#4a601d,#4a601d,#4a601d,#4b621e,#4d651f,#4f6920,#516d22,#537124,#567627,#597b2a,#5d7f2d,#60832f,#638532,#668734,#698a36,#6b8c39,#6f8e3c,#72913f,#769343,#7a9647,#7f994c,#849c51,#889f56,#8da25a,#90a45e,#92a560,#94a562,#94a562,#94a462,#93a361,#92a160,#8f9e5d,#8b9959,#869353,#808c4c,#7a8546,#768041,#737c3e,#727b3c,#727a3b,#727b3c,#737b3c)"></b><b style="left:791px;top:305px;width:450px;background:linear-gradient(90deg,#37200b,#391e0b,#37200b,#36230c,#34260c,#33290d,#322d0d,#31300e,#32320e,#33340f,#33360f,#343910,#353b10,#363d11,#374012,#394212,#3a4513,#3b4714,#3c4914,#3d4b15,#3d4c16,#3e4f16,#405117,#425318,#435619,#45581a,#465b1b,#485d1c,#495f1c,#4a611d,#4b621d,#4c621e,#4c631e,#4c631e,#4c631e,#4c631e,#4c641e,#4d641e,#4e661f,#4f6920,#516d22,#537124,#557426,#587929,#5c7d2b,#5f812e,#628531,#658733,#688936,#6b8b38,#6e8e3b,#71903e,#759342,#799546,#7d984a,#829b4f,#869e54,#8ba158,#8fa35c,#92a55f,#93a561,#94a662,#95a563,#94a562,#94a361,#92a160,#909e5d,#8c9a59,#879453,#828d4d,#7d8748,#798343,#778040,#757e3f,#757d3e,#757d3e)"></b><b style="left:788px;top:308px;width:456px;background:linear-gradient(90deg,#37200b,#391e0b,#37200b,#35230c,#34260c,#322a0d,#312d0d,#31300e,#32320e,#32350f,#34370f,#343910,#353c10,#373e11,#384112,#394313,#3a4613,#3b4814,#3c4a15,#3d4c15,#3e4e16,#405117,#425418,#445619,#45581a,#475b1b,#485d1c,#4a601d,#4b621d,#4d641e,#4d651f,#4e661f,#4e661f,#4e671f,#4f671f,#4f671f,#4f671f,#4f6820,#506920,#516b21,#526e23,#547124,#567526,#587929,#5b7d2b,#5f812e,#638531,#658734,#688a36,#6b8c39,#6e8e3c,#71903f,#759342,#799546,#7d984a,#819b4f,#869e53,#8aa158,#8ea35c,#91a55f,#93a661,#94a662,#95a663,#95a563,#94a462,#93a361,#91a05f,#8f9d5c,#8b9857,#869252,#818c4c,#7d8747,#7a8444,#798141,#788040,#787f3f,#787f3f)"></b><b style="left:785px;top:311px;width:462px;background:linear-gradient(90deg,#371f0b,#381e0b,#36210b,#35240c,#33270c,#322a0d,#312d0d,#31300e,#32330e,#33350f,#33370f,#343a10,#363c11,#373f11,#384212,#394413,#3a4714,#3c4915,#3d4b15,#3e4e16,#405017,#425318,#435619,#45591a,#475b1b,#485e1c,#4a601d,#4c621e,#4d651e,#4f671f,#506920,#506a20,#516b21,#516b21,#516b21,#516b21,#526c21,#526c21,#526c21,#536e22,#547024,#567325,#577627,#597929,#5c7d2b,#5f812f,#638532,#668835,#698a37,#6c8c3a,#6f8f3c,#72913f,#759343,#799646,#7d994a,#819b4f,#869e53,#8aa158,#8ea35c,#91a55f,#93a661,#95a662,#95a663,#95a663,#95a563,#94a462,#93a260,#919f5e,#8e9b5a,#8a9655,#859150,#818b4b,#7e8747,#7c8444,#7a8242,#798141,#798141,#798140)"></b><b style="left:780px;top:314px;width:462px;background:linear-gradient(90deg,#371f0b,#391e0b,#37200b,#35230c,#33260c,#32290d,#312d0d,#312f0e,#31320e,#32350f,#33370f,#343910,#353c10,#363e11,#384112,#394413,#3a4714,#3b4914,#3d4c15,#3e4e16,#405217,#425518,#44581a,#465a1b,#485d1c,#4a601d,#4b621d,#4d651e,#4e671f,#506920,#526c21,#536e22,#546f22,#547023,#547023,#547023,#557023,#557123,#557123,#557224,#567324,#577526,#587827,#597a29,#5b7c2b,#5e802e,#618431,#658734,#688a37,#6b8c39,#6e8e3c,#71913f,#759342,#789545,#7c9849,#809b4d,#849d52,#88a056,#8ca35a,#90a55d,#92a660,#94a762,#95a763,#96a663,#95a663,#95a563,#94a462,#93a260,#909f5d,#8d9b5a,#8a9655,#859150,#828c4b,#7f8848,#7d8545,#7b8443,#7b8342,#7a8242)"></b><b style="left:777px;top:317px;width:468px;background:linear-gradient(90deg,#371f0b,#381e0b,#37200b,#35230c,#33260c,#322a0d,#302d0d,#31300e,#31320e,#32350f,#33370f,#343910,#353c11,#363f11,#384212,#394513,#3b4814,#3c4a15,#3d4d16,#3f5017,#425418,#445719,#465a1a,#485d1c,#4a601d,#4c631e,#4d651e,#4f671f,#516a20,#526d21,#547023,#567324,#577424,#577525,#587525,#587525,#587625,#587625,#587625,#587625,#587726,#597927,#5a7a28,#5b7c2a,#5c7e2b,#5e812e,#628431,#658834,#698b37,#6c8d3a,#6f8f3d,#72913f,#759342,#789646,#7c9849,#809b4d,#849e51,#88a056,#8ca35a,#8fa55d,#92a660,#94a762,#95a763,#96a764,#96a664,#95a663,#95a562,#94a361,#92a15f,#8f9d5c,#8c9958,#889453,#848f4e,#818b4a,#7f8847,#7d8545,#7c8443,#7c8343,#7b8342)"></b><b style="left:774px;top:320px;width:468px;background:linear-gradient(90deg,#371f0b,#381e0b,#36200b,#35230c,#33260c,#312a0d,#302d0d,#31300e,#31320e,#32350f,#33370f,#343a10,#353c11,#374012,#384212,#3a4613,#3b4814,#3c4b15,#3e4e16,#405217,#435619,#45591a,#485d1b,#4a601c,#4c621e,#4d651f,#4f6820,#516a20,#536d22,#557123,#567324,#587725,#597926,#5a7a27,#5b7b27,#5b7b27,#5b7b27,#5b7b27,#5b7b27,#5b7b27,#5b7b28,#5b7c28,#5c7e2a,#5c7f2b,#5d802c,#5f822e,#628531,#658834,#698b38,#6c8d3a,#6f8f3d,#729240,#759443,#789646,#7c9949,#809b4d,#849e51,#88a055,#8ca359,#8fa55d,#92a660,#94a762,#95a763,#96a764,#96a764,#96a664,#95a563,#94a462,#93a260,#919f5e,#8e9b5a,#8b9756,#879251,#848d4d,#818a49,#7f8747,#7e8645,#7d8444,#7c8443)"></b><b style="left:770px;top:323px;width:474px;background:linear-gradient(90deg,#371f0b,#381e0b,#36200b,#34230c,#33260c,#31290d,#302d0d,#302f0e,#31320e,#32340f,#33370f,#343a10,#353c11,#363f11,#384313,#394513,#3b4914,#3c4b15,#3e4f16,#415318,#445719,#465b1b,#495e1c,#4b621d,#4d641e,#4f671f,#516a20,#536e22,#557023,#577424,#587725,#5a7a27,#5c7d28,#5d7e28,#5e7f29,#5e8029,#5e8029,#5e8029,#5e8029,#5e8029,#5e8029,#5e802a,#5e812b,#5e822c,#5e822d,#5f832e,#618530,#648833,#688b37,#6b8d3a,#6e8f3d,#71923f,#749442,#789645,#7b9849,#7f9b4c,#839d50,#86a054,#8aa258,#8ea45c,#91a65f,#93a761,#95a863,#96a864,#96a864,#96a764,#96a664,#95a563,#94a361,#92a15f,#909e5d,#8d9a59,#8a9554,#869150,#838d4c,#818a49,#7f8747,#7e8645,#7d8544,#7d8444)"></b><b style="left:767px;top:326px;width:480px;background:linear-gradient(90deg,#371f0b,#381e0b,#36200b,#34230c,#32260c,#31290d,#302c0d,#302f0e,#31320e,#32350f,#32370f,#343a10,#353d11,#364012,#384313,#394614,#3b4914,#3c4c15,#3f5117,#425518,#45591a,#485d1c,#4a601d,#4d641e,#4f671f,#516a20,#536e22,#557123,#577525,#597726,#5b7b27,#5c7e28,#5e8129,#60832a,#61842b,#61852b,#61852b,#61852b,#61852b,#61852b,#61852b,#61852b,#60852c,#60852d,#60842d,#60852e,#618630,#638833,#678a36,#6a8d39,#6e8f3c,#71923f,#749442,#779645,#7a9848,#7e9b4c,#829d4f,#86a053,#8aa257,#8da45b,#90a65e,#93a761,#95a863,#96a864,#96a864,#97a864,#96a764,#96a663,#95a462,#93a261,#91a05e,#8f9c5b,#8c9857,#899453,#858f4f,#838c4b,#818949,#808747,#7f8646,#7e8645,#7e8545)"></b><b style="left:763px;top:329px;width:480px;background:linear-gradient(90deg,#371f0b,#381d0b,#36200b,#34220c,#32250c,#31290d,#302c0d,#2f2e0d,#30310e,#31340f,#32370f,#333910,#343c11,#364012,#384313,#394613,#3b4914,#3c4d16,#405117,#435619,#455a1a,#485e1c,#4b621d,#4d651f,#506920,#526d21,#557123,#577424,#597826,#5b7b27,#5d7e28,#5f8129,#60842b,#62872c,#63892c,#648a2d,#648a2d,#648a2d,#648a2d,#648a2d,#64892d,#63892d,#63892d,#62882e,#61872e,#61862f,#618730,#628832,#658a35,#698c38,#6c8f3b,#70913e,#739341,#769544,#799847,#7d9a4a,#809c4e,#849f52,#88a156,#8ba359,#8fa55d,#92a75f,#94a862,#95a863,#96a864,#97a865,#97a765,#96a764,#95a563,#94a462,#93a260,#919f5d,#8e9b5a,#8b9756,#889352,#858f4e,#838c4b,#818949,#808847,#7f8746,#7f8646)"></b><b style="left:760px;top:332px;width:486px;background:linear-gradient(90deg,#371e0b,#381e0b,#361f0b,#34220c,#32250c,#30280c,#2f2c0d,#2f2e0d,#30300e,#31330e,#32370f,#333910,#343c11,#364012,#384313,#394614,#3b4a15,#3d4e16,#405218,#435719,#475c1b,#49601c,#4c641e,#4f6820,#526c21,#547023,#577424,#597826,#5b7b27,#5d7f29,#5f822a,#61852b,#63882c,#648a2d,#658b2e,#668c2e,#668d2e,#668d2e,#668d2e,#668c2e,#668c2e,#658c2e,#658b2e,#648a2e,#638a2f,#62892f,#628830,#628831,#648934,#678b37,#6b8e3a,#6e903d,#729340,#759543,#789746,#7b9949,#7f9c4d,#839e50,#87a154,#8aa358,#8ea55b,#91a75e,#93a861,#95a863,#96a964,#97a965,#97a865,#97a764,#96a664,#95a563,#94a361,#92a05f,#909d5c,#8d9958,#8a9554,#879150,#858e4d,#838b4b,#828949,#818848,#808747,#808747)"></b><b style="left:756px;top:335px;width:486px;background:linear-gradient(90deg,#361f0b,#381d0b,#361f0b,#34220b,#32250c,#30280c,#2f2b0d,#2f2e0d,#30300e,#30320e,#31360f,#333910,#343c11,#363f12,#374313,#394614,#3a4915,#3d4e16,#405318,#44581a,#475c1b,#4a611d,#4d651e,#506920,#536e22,#567324,#587726,#5b7b27,#5d7e28,#5f822a,#61852b,#63882c,#648a2d,#658c2e,#668d2e,#678e2f,#678f2f,#688f2f,#688f2f,#678f2f,#678f2f,#678e2f,#668e2f,#668d2f,#648c2f,#638a2f,#628930,#628931,#638932,#658a35,#688d38,#6c8f3b,#70923e,#739441,#769644,#7a9848,#7d9b4b,#819d4e,#849f52,#88a256,#8ca459,#8fa65d,#92a760,#94a862,#96a963,#97a964,#97a965,#97a865,#97a764,#96a663,#95a462,#93a260,#929f5e,#8f9c5b,#8d9857,#8a9453,#879150,#858e4d,#848b4b,#828a4a,#828949,#818848)"></b><b style="left:754px;top:338px;width:492px;background:linear-gradient(90deg,#361e0b,#381e0b,#35200b,#33220c,#31250c,#30280c,#2f2b0d,#2f2d0d,#30310e,#30330e,#30350f,#323910,#343d11,#354012,#374413,#394714,#3b4b15,#3e5017,#425519,#455a1a,#485f1c,#4c631e,#4f681f,#526c21,#557223,#587625,#5b7b27,#5d7f29,#5f822a,#61862b,#63892d,#658b2d,#668c2e,#678e2f,#688f2f,#689030,#699130,#699230,#699130,#699130,#699130,#699130,#689030,#678f30,#668d30,#648b30,#638a30,#628931,#638932,#648a34,#678c37,#6b8e3a,#6f913d,#729341,#769644,#799847,#7c9a4a,#809d4e,#839f51,#87a155,#8ba458,#8ea55c,#91a75f,#93a861,#95a963,#96a964,#97a965,#97a865,#97a765,#96a664,#95a563,#94a361,#92a05f,#909d5c,#8e9a59,#8b9655,#899252,#878f4f,#858d4d,#848b4b,#838a4a,#838a49,#828949)"></b><b style="left:750px;top:341px;width:492px;background:linear-gradient(90deg,#361e0b,#381d0b,#361f0b,#33220b,#31250c,#30270c,#2e2b0d,#2e2d0d,#2f2f0d,#30330e,#30350f,#31370f,#333b10,#354012,#374313,#394714,#3b4b15,#3e5017,#415518,#455a1a,#495f1c,#4c641e,#4f6920,#536e22,#567324,#597926,#5c7d28,#5f812a,#61852b,#63892d,#658b2d,#668d2e,#678e2f,#688f2f,#699130,#6a9230,#6a9331,#6b9431,#6b9431,#6b9431,#6b9431,#6b9331,#6a9331,#699131,#679031,#668e30,#648b30,#638a31,#628931,#638933,#658b35,#688d38,#6c8f3b,#70923f,#749442,#779745,#7a9948,#7d9b4b,#819e4f,#85a053,#88a256,#8ca45a,#8fa65d,#91a75f,#94a862,#95a963,#97a964,#97a965,#97a865,#97a764,#96a663,#95a462,#93a260,#929f5e,#909c5b,#8d9858,#8b9554,#899251,#878f4f,#868d4d,#858c4c,#848b4b,#848a4a)"></b><b style="left:747px;top:344px;width:498px;background:linear-gradient(90deg,#361e0b,#381d0b,#361f0b,#33220b,#31240c,#2f270c,#2e2a0c,#2e2d0d,#2e2f0d,#2f320e,#30350f,#31370f,#323a10,#353f11,#374313,#384714,#3b4b15,#3f5117,#425619,#465c1b,#49611d,#4d661f,#506b21,#547123,#577625,#5b7b27,#5e8029,#60842b,#63892c,#658b2d,#668d2e,#678e2f,#68902f,#699130,#6a9331,#6b9431,#6c9532,#6c9632,#6d9632,#6d9632,#6d9632,#6c9632,#6c9532,#6b9432,#699231,#679031,#658d31,#638b31,#628a31,#638932,#648a34,#678c36,#6a8e3a,#6e913d,#729340,#759644,#799847,#7c9a4a,#7f9d4d,#839f51,#86a154,#8aa358,#8da55b,#90a75e,#92a860,#94a962,#96a964,#97a965,#97a965,#97a865,#96a664,#95a563,#94a361,#93a05f,#919e5c,#8f9a59,#8c9756,#8a9453,#899151,#878f4f,#868d4d,#858c4c,#858c4c,#858b4b)"></b><b style="left:744px;top:347px;width:498px;background:linear-gradient(90deg,#361e0b,#381d0b,#351f0b,#33210b,#31240c,#2f270c,#2e2a0c,#2e2c0d,#2e2f0d,#2f310e,#30340e,#31370f,#323a10,#333d11,#364313,#384714,#3b4c15,#3f5117,#435719,#465d1b,#4a621d,#4e671f,#516d21,#557324,#597926,#5c7d28,#5f832a,#62882c,#648b2d,#668d2e,#678e2f,#689030,#699230,#6a9331,#6b9431,#6c9632,#6d9732,#6e9833,#6e9933,#6f9933,#6e9933,#6e9933,#6e9833,#6d9633,#6b9432,#699232,#668f31,#648c31,#638a31,#628932,#638933,#658b35,#688d38,#6c8f3b,#70923f,#749542,#779745,#7a9948,#7e9c4c,#819e4f,#85a053,#88a256,#8ba459,#8ea65c,#91a75f,#93a861,#95a963,#96a964,#97a965,#97a865,#97a764,#96a663,#95a462,#93a260,#929f5d,#909c5b,#8e9958,#8c9555,#8a9352,#899150,#888f4f,#878e4e,#868d4d,#868c4d)"></b><b style="left:741px;top:350px;width:504px;background:linear-gradient(90deg,#361e0b,#381d0b,#351f0b,#33210b,#31240c,#2f270c,#2e290c,#2e2c0d,#2e2e0d,#2e310e,#2f330e,#30370f,#323b10,#333e11,#344112,#384714,#3b4c15,#3f5218,#43581a,#475e1c,#4b631e,#4f6920,#536f22,#567524,#5a7b27,#5e8029,#61852b,#648a2d,#668c2e,#678e2f,#689030,#6a9230,#6b9331,#6c9531,#6d9632,#6e9833,#6f9933,#6f9a34,#709b34,#709b34,#709b34,#709b34,#709a34,#6e9934,#6d9633,#6a9433,#689132,#658e31,#638b31,#628a32,#628932,#648a34,#678c36,#6a8e3a,#6e913d,#729341,#769644,#799847,#7c9b4a,#7f9d4d,#839f51,#86a154,#8aa358,#8da55b,#8fa75d,#92a860,#94a962,#96a964,#97a964,#97a965,#97a864,#96a664,#95a562,#94a260,#92a05e,#919d5c,#8f9a59,#8d9756,#8b9454,#8a9252,#899050,#888f4f,#878e4e,#878d4e,#878d4d)"></b><b style="left:738px;top:353px;width:504px;background:linear-gradient(90deg,#361e0b,#381d0b,#351f0b,#33210b,#31240c,#2f260c,#2d290c,#2d2b0d,#2e2e0d,#2e300d,#2f330e,#2f350f,#313a10,#333e11,#344112,#364513,#3b4d16,#3f5318,#44591a,#485f1c,#4b641e,#4f6a20,#547123,#587725,#5b7d28,#5f832a,#62882c,#658b2d,#678e2f,#68902f,#699230,#6b9431,#6c9532,#6d9732,#6e9833,#6f9a33,#709b34,#719c34,#719c35,#719d35,#719d35,#719d35,#719c35,#709b34,#6e9834,#6c9633,#699233,#668f32,#648c31,#628a31,#628932,#638933,#658b35,#688d38,#6c8f3b,#70923f,#749542,#779745,#7b9949,#7e9c4c,#819e4f,#85a053,#88a256,#8ba459,#8ea65c,#90a75e,#93a861,#95a963,#96a964,#97a965,#97a864,#97a764,#96a563,#95a361,#93a15f,#919e5d,#909b5a,#8e9857,#8c9655,#8b9353,#8a9151,#899050,#888f4f,#888e4f,#888e4e)"></b><b style="left:735px;top:356px;width:510px;background:linear-gradient(90deg,#361e0b,#381d0b,#351f0b,#33210b,#30240c,#2e260c,#2d290c,#2d2b0d,#2d2d0d,#2e300d,#2e320e,#2f350f,#303910,#323d11,#354212,#364613,#394b15,#405418,#445a1a,#48601c,#4c661e,#506c21,#557323,#597926,#5d7f28,#60852b,#648a2d,#668d2e,#678f2f,#699130,#6a9331,#6c9532,#6d9732,#6e9833,#6f9a34,#709b34,#719c35,#719d35,#729d35,#729e36,#729e36,#729e36,#729e36,#719c35,#709a35,#6d9734,#6a9433,#679032,#658d32,#638b31,#628932,#628932,#648a34,#668b36,#6a8e39,#6e903d,#729340,#759644,#799847,#7c9b4a,#809d4e,#839f51,#86a154,#89a357,#8ca55a,#8fa75d,#91a85f,#94a961,#95a963,#96a964,#97a864,#97a764,#96a663,#95a461,#94a260,#929f5d,#909c5b,#8f9958,#8d9756,#8c9454,#8b9252,#8a9151,#899050,#898f50,#898f4f,#888f4f)"></b><b style="left:732px;top:359px;width:510px;background:linear-gradient(90deg,#361e0b,#381d0b,#351f0b,#32210b,#30230c,#2e260c,#2d280c,#2d2a0c,#2c2c0d,#2d2f0d,#2e320e,#2e340e,#303910,#313c10,#344112,#364613,#3a4c15,#3d5217,#445b1a,#49611d,#4d671f,#516e21,#557424,#5a7b27,#5e8129,#61872b,#648b2d,#668e2e,#68902f,#6a9330,#6c9531,#6d9732,#6e9933,#6f9a34,#709b34,#719c35,#729d35,#729e36,#739f36,#739f36,#749f37,#749f37,#749f37,#739e36,#719c36,#6f9935,#6c9534,#699133,#668e32,#638b32,#628931,#618832,#628933,#648a35,#678c37,#6b8e3b,#6f913e,#739442,#779745,#7b9a49,#7e9c4c,#829e50,#85a153,#88a256,#8ba459,#8da65b,#90a75e,#92a860,#94a962,#96a963,#96a964,#97a864,#96a663,#95a462,#94a260,#93a05e,#919d5b,#8f9a59,#8e9757,#8d9555,#8c9353,#8b9252,#8a9151,#8a9050,#899050,#898f50)"></b><b style="left:730px;top:362px;width:510px;background:linear-gradient(90deg,#361d0b,#371d0b,#341f0b,#32210b,#30230c,#2e260c,#2d280c,#2c2a0c,#2c2d0d,#2c2f0d,#2d320e,#2e350f,#2f380f,#313d11,#334112,#374714,#3b4d16,#3e5318,#445b1a,#49631d,#4e6a20,#537022,#577725,#5b7d28,#5f842a,#63892c,#658d2e,#68902f,#699230,#6b9431,#6d9732,#6e9833,#709a34,#719c34,#719d35,#729d35,#739e36,#739f36,#74a037,#74a037,#75a137,#75a138,#75a138,#749f37,#729d37,#709a36,#6d9635,#699233,#668e32,#638b32,#628931,#618831,#618832,#638934,#658a36,#698d39,#6d8f3d,#719240,#759644,#799848,#7d9b4b,#809e4f,#84a052,#87a255,#8aa458,#8ca55a,#8fa75d,#91a85f,#93a861,#95a963,#96a864,#96a864,#96a663,#95a462,#94a260,#93a05e,#919d5b,#909a59,#8e9857,#8d9655,#8c9454,#8b9252,#8b9151,#8a9151,#8a9050,#8a9050)"></b><b style="left:726px;top:365px;width:516px;background:linear-gradient(90deg,#351e0b,#381d0a,#351e0b,#32200b,#30230b,#2e250c,#2d270c,#2c2a0c,#2c2c0d,#2c2e0d,#2c300d,#2d330e,#2f380f,#303b10,#324011,#354513,#394c15,#3e5318,#435a1a,#47621c,#4e6920,#537123,#577825,#5b7e28,#60842a,#638a2d,#668d2e,#68902f,#6a9330,#6b9531,#6d9732,#6f9a33,#709b34,#719d35,#729e36,#739e36,#739f37,#74a037,#75a138,#75a238,#76a238,#76a238,#76a238,#75a238,#749f38,#729c37,#6f9836,#6b9434,#689033,#648d32,#628a31,#618831,#608731,#618732,#628834,#658a36,#688c39,#6c8f3d,#719241,#769645,#7a9949,#7e9c4c,#829e50,#85a153,#88a356,#8aa458,#8da65b,#8fa75d,#92a860,#94a861,#95a863,#96a863,#96a763,#95a562,#94a360,#93a05e,#929e5c,#909b5a,#8f9958,#8d9656,#8c9454,#8c9353,#8b9252,#8b9151,#8a9051,#8a9050,#8a9050)"></b><b style="left:724px;top:368px;width:516px;background:linear-gradient(90deg,#361d0b,#371d0a,#351e0b,#32200b,#2f220b,#2d250c,#2c270c,#2c290c,#2c2c0d,#2c2e0d,#2c300d,#2d330e,#2e380f,#303c10,#324011,#364613,#394c15,#3f5518,#445d1b,#48641d,#4e6b20,#547323,#597a26,#5d8129,#61872b,#658c2d,#678f2f,#699130,#6b9431,#6d9732,#6e9933,#709b34,#719c35,#729e35,#739f36,#74a037,#74a137,#75a138,#76a238,#76a339,#77a339,#77a439,#77a439,#77a339,#75a039,#739d38,#709936,#6c9535,#689033,#658d32,#628a31,#608731,#5f8631,#5f8631,#608632,#618734,#648936,#688c3a,#6d8f3e,#739342,#789747,#7c9b4b,#809e4f,#84a052,#87a255,#8aa458,#8ca55a,#8fa65c,#91a75f,#93a861,#94a862,#95a863,#96a762,#95a561,#94a360,#93a05e,#919e5c,#909b59,#8f9857,#8d9656,#8c9454,#8c9353,#8b9252,#8b9151,#8a9151,#8a9051,#8a9050)"></b><b style="left:722px;top:371px;width:516px;background:linear-gradient(90deg,#361d0b,#371d0a,#341e0b,#32200b,#2f220b,#2d250c,#2c270c,#2b290c,#2b2b0c,#2c2e0d,#2c300d,#2d330e,#2e380f,#303c10,#324112,#354713,#3a4e16,#3f5618,#455f1b,#4a661e,#4f6d21,#557624,#5a7d27,#5f832a,#63892c,#658d2e,#68902f,#6a9330,#6c9531,#6e9833,#6f9a34,#719c35,#729e35,#739f36,#74a037,#75a138,#75a238,#76a339,#77a339,#77a439,#78a53a,#78a43a,#78a43a,#77a43a,#76a139,#749e38,#719937,#6d9535,#699134,#658d32,#628931,#608731,#5e8530,#5e8530,#5d8430,#5e8431,#5f8533,#638736,#688b3a,#6e8f3f,#749444,#7a9949,#7f9c4d,#839f51,#86a154,#89a357,#8ba559,#8ea65c,#90a75e,#92a860,#94a861,#95a762,#95a662,#95a461,#94a25f,#92a05d,#919d5b,#909b59,#8e9857,#8d9655,#8c9454,#8c9353,#8b9252,#8b9151,#8b9151,#8a9051,#8a9050)"></b><b style="left:719px;top:374px;width:522px;background:linear-gradient(90deg,#351d0b,#371c0a,#341e0b,#31200b,#2f220b,#2d240b,#2b260c,#2b290c,#2b2b0c,#2b2d0d,#2b300d,#2c330e,#2e370f,#2f3b10,#314011,#354613,#394d15,#3f5718,#445e1b,#4a671e,#506e21,#557624,#5b7e28,#5f852a,#638b2d,#668e2e,#68912f,#6a9431,#6c9732,#6e9933,#709b34,#719d35,#739e36,#74a037,#74a137,#75a238,#76a339,#77a439,#78a43a,#78a43a,#77a339,#77a339,#77a238,#76a238,#759f38,#739c37,#719837,#6d9535,#6a9134,#668d33,#628931,#608630,#5e842f,#5c832f,#5b822e,#59802e,#5a802f,#5c8131,#608534,#668939,#6d8f3f,#759545,#7b994a,#809d4f,#84a053,#87a255,#8aa458,#8ca55a,#8fa65c,#91a75e,#93a760,#94a761,#94a661,#94a460,#93a25f,#92a05d,#919d5b,#8f9b59,#8e9857,#8d9655,#8c9454,#8c9353,#8b9252,#8b9151,#8b9151,#8a9051,#8a9050,#8a9050)"></b><b style="left:717px;top:377px;width:522px;background:linear-gradient(90deg,#351d0b,#371c0a,#341e0b,#31200b,#2f220b,#2c240b,#2b260c,#2a280c,#2a2b0c,#2b2d0d,#2b300d,#2c330e,#2d370f,#2f3b10,#314011,#354713,#3a4e16,#405819,#45611c,#4b681e,#517122,#567925,#5b8028,#61872b,#648c2d,#678f2f,#699230,#6b9531,#6d9832,#6f9a33,#719c35,#729e35,#739f36,#74a137,#75a238,#76a339,#77a439,#78a53a,#77a439,#77a239,#76a138,#76a037,#76a037,#759f37,#749d37,#729936,#709535,#6d9235,#698f34,#668c33,#628831,#5f8530,#5c832f,#5a812d,#577f2c,#557c2b,#547b2b,#557c2c,#587e2f,#5e8333,#66893a,#6f9041,#779647,#7d9b4d,#829f51,#86a154,#89a357,#8ba459,#8ea65c,#90a65d,#92a75f,#93a660,#93a560,#93a35f,#93a15d,#919f5c,#909c5a,#8f9a58,#8e9756,#8d9654,#8c9453,#8b9352,#8b9251,#8b9151,#8a9151,#8a9050,#8a9050,#8a9050)"></b><b style="left:715px;top:380px;width:522px;background:linear-gradient(90deg,#351d0b,#371c0a,#341e0b,#31200b,#2e220b,#2c240b,#2b260c,#2a280c,#2a2a0c,#2a2d0c,#2a2f0d,#2c330e,#2d380f,#2f3c10,#314111,#354813,#3b5016,#405919,#46621c,#4c6a1f,#527323,#587b26,#5d8229,#61892c,#658e2e,#68912f,#6a9330,#6c9632,#6e9933,#709c34,#719d35,#739f36,#74a037,#75a238,#76a339,#77a439,#78a43a,#77a339,#76a238,#76a037,#759f36,#759e36,#749d35,#749c35,#739a35,#719735,#6f9334,#6c8f34,#698c33,#658932,#628731,#5e842f,#5b812e,#587f2c,#547b2a,#507828,#4e7627,#4e7627,#507829,#557c2d,#5d8233,#67893b,#709142,#799849,#809c4f,#84a053,#88a256,#8aa458,#8da55a,#8fa65c,#91a65e,#92a55e,#92a45e,#92a25e,#92a05c,#909e5a,#8f9b58,#8e9956,#8d9755,#8c9553,#8b9352,#8b9251,#8b9151,#8a9150,#8a9050,#8a9050,#8a9050,#8a9050)"></b><b style="left:713px;top:383px;width:522px;background:linear-gradient(90deg,#351d0a,#371c0a,#341e0b,#31200b,#2e220b,#2b240b,#2b260c,#2a280c,#29290c,#2a2c0c,#2a2f0d,#2b330e,#2d380f,#2f3c10,#314112,#354814,#3b5116,#415b19,#46631c,#4d6c20,#537523,#597d27,#5e842a,#638b2c,#66902e,#699230,#6b9531,#6d9832,#6f9a33,#719d34,#729e35,#74a036,#75a137,#76a238,#77a439,#78a53a,#77a339,#76a138,#75a037,#759e36,#749d35,#749c34,#739b34,#739a34,#729734,#709434,#6e9033,#6b8c33,#688932,#648631,#618430,#5d812e,#597e2c,#557c2a,#507827,#4c7425,#497223,#487123,#497224,#4d7527,#547a2c,#5d8134,#688a3c,#739245,#7b994c,#829e51,#86a154,#89a257,#8ba459,#8ea55b,#8fa55c,#91a45d,#91a35d,#91a15c,#909f5a,#8f9c58,#8e9a57,#8d9855,#8c9653,#8b9452,#8b9351,#8a9251,#8a9150,#8a9050,#8a9050,#8a9050,#8a9050,#8a8f50)"></b><b style="left:711px;top:386px;width:528px;background:linear-gradient(90deg,#351d0a,#371c0a,#341e0b,#301f0b,#2d210b,#2b240b,#2a250b,#2a280c,#29290c,#292b0c,#2a2f0d,#2b330e,#2d380f,#2f3c10,#324212,#364914,#3b5217,#415c1a,#48651d,#4e6e20,#547724,#5a7f28,#5f872a,#648d2d,#67912f,#699430,#6c9631,#6e9933,#709c34,#719d35,#739f36,#74a037,#75a238,#77a339,#78a53a,#77a339,#76a138,#759f37,#749d36,#749c35,#739b34,#739933,#729833,#729732,#709532,#6f9132,#6d8d32,#6a8932,#678531,#638230,#5f7f2f,#5b7d2d,#577b2b,#527828,#4d7425,#487022,#446e20,#436d1f,#436d20,#466f22,#4b7326,#53792c,#5e8235,#6a8c3e,#759447,#7d9a4d,#839e52,#87a155,#89a258,#8ca35a,#8ea35b,#8fa35b,#90a25b,#90a05a,#8f9d58,#8e9b56,#8d9855,#8c9653,#8b9452,#8a9351,#8a9250,#8a9150,#8a904f,#8a904f,#89904f,#898f4f,#898f4f,#898f4f,#898f4f)"></b><b style="left:708px;top:389px;width:528px;background:linear-gradient(90deg,#351d0a,#371c0a,#341d0b,#311f0b,#2e210b,#2b230b,#2a250b,#29260b,#29290c,#292b0c,#282d0c,#2a320e,#2c370f,#2e3b10,#314212,#354914,#3b5216,#415b1a,#47651d,#4e6e21,#547724,#5a8028,#5f882b,#648d2d,#67912f,#6a9530,#6c9731,#6e9a33,#709c34,#729e35,#73a036,#75a137,#76a338,#77a439,#78a539,#77a238,#76a037,#759e36,#749c35,#739a34,#729933,#729832,#719631,#709531,#6f9331,#6e8f31,#6c8c31,#6a8731,#668230,#627e2f,#5d7a2d,#59772b,#547529,#507326,#4a7023,#456d20,#416b1e,#3f691d,#3f691d,#406a1e,#436d20,#497125,#52792c,#5e8235,#6b8c3f,#769447,#7d9a4d,#839d52,#86a055,#89a157,#8ba259,#8da159,#8ea059,#8e9e58,#8d9c56,#8c9954,#8b9753,#8a9551,#8a9350,#89924f,#89914f,#89904f,#89904f,#898f4e,#898f4e,#898f4f,#898f4f,#898f4f,#898f4f)"></b><b style="left:706px;top:392px;width:528px;background:linear-gradient(90deg,#351d0a,#371c0a,#341d0b,#311f0b,#2e200b,#2b220b,#29240b,#29260b,#28280c,#282b0c,#282d0c,#29310d,#2c370f,#2e3c10,#314212,#364a14,#3c5317,#425d1a,#48661d,#4e7021,#557925,#5b8128,#61892b,#658f2d,#68932f,#6a9530,#6d9932,#6f9b33,#719d34,#729f35,#74a037,#75a238,#76a339,#78a539,#77a339,#76a137,#759f36,#749c35,#739a34,#729832,#719732,#719531,#709430,#6f912f,#6e8f2f,#6d8c30,#6b8930,#688430,#657f2f,#60792d,#5a732b,#556f28,#506d26,#4c6c23,#466b21,#42691e,#3e671c,#3c661b,#3c661b,#3c671b,#3e691d,#436c20,#4a7225,#547a2d,#618337,#6d8d40,#779448,#7d994d,#829c51,#869e54,#889f56,#8a9f57,#8b9e56,#8c9c55,#8b9954,#8a9752,#899550,#89934f,#88924e,#88914e,#88904d,#888f4d,#888f4d,#888f4e,#898f4e,#898f4e,#898e4e,#898e4e,#898e4e)"></b><b style="left:705px;top:395px;width:528px;background:linear-gradient(90deg,#351c0a,#371c0a,#331d0b,#301f0b,#2d200b,#2b220b,#29240b,#28250b,#28280b,#282b0c,#282e0d,#29320d,#2b370f,#2e3d10,#324412,#374c15,#3d5618,#43601b,#4a691e,#507322,#577c26,#5d8429,#628c2c,#66912e,#699430,#6b9731,#6e9a32,#709d34,#729e35,#73a036,#75a137,#76a338,#77a539,#78a439,#76a238,#759f36,#749d35,#739a34,#729832,#719631,#709430,#6f922f,#6e8f2e,#6c8c2d,#6b892d,#6a872e,#69842e,#66802e,#627a2d,#5c722b,#556a27,#4e6424,#4a6322,#466320,#42641d,#3e641b,#3b641a,#3a6419,#396419,#3a6519,#3b661b,#3f691d,#446d21,#4d7428,#587d31,#65863a,#6f8e42,#779448,#7d984d,#819a50,#859c52,#879c53,#899b53,#899952,#899750,#88944f,#87934d,#87914c,#87904c,#878f4c,#878f4c,#878e4c,#888e4c,#888e4d,#888e4d,#888e4d,#888e4d,#888e4e,#888e4e)"></b><b style="left:702px;top:398px;width:528px;background:linear-gradient(90deg,#351c0a,#371c0a,#341d0a,#301f0b,#2d200b,#2b220b,#29230b,#27250b,#27260b,#26290b,#282d0c,#29320d,#2a360e,#2d3c10,#314312,#364b14,#3d5618,#43601b,#49691e,#507322,#577c26,#5d8429,#628c2c,#66912e,#699530,#6c9831,#6e9a32,#709d34,#729f35,#74a036,#75a237,#76a338,#78a539,#77a439,#76a137,#759e36,#749c34,#729933,#719731,#709530,#6f912f,#6d8d2d,#6c8a2c,#6a872b,#69852b,#68832c,#67812d,#657d2d,#61772c,#5a6f29,#526425,#4a5b20,#45571d,#41581c,#3e5b1a,#3c5e19,#3a6018,#386118,#386218,#386318,#396419,#3b651a,#3e681d,#446d21,#4d7428,#587c30,#638539,#6c8c40,#739145,#799449,#7e964d,#82984f,#84974f,#86964f,#86944d,#86924c,#85914b,#858f4a,#858f4a,#858e4a,#868e4a,#868e4b,#878d4b,#878d4c,#878d4c,#888e4c,#888e4d,#888e4d,#888e4d)"></b><b style="left:700px;top:401px;width:534px;background:linear-gradient(90deg,#351c0a,#371c0a,#331d0a,#301e0b,#2d200b,#2a210b,#29230b,#27240b,#26260b,#26280b,#262b0c,#29320d,#2b360e,#2c3b10,#314312,#364c15,#3d5718,#43611b,#4b6b1f,#517423,#587e27,#5e862a,#638d2d,#67922f,#6a9630,#6c9931,#6f9c33,#719e34,#73a035,#74a136,#76a338,#77a439,#78a539,#77a338,#76a036,#749d35,#739a33,#729832,#719530,#6f912f,#6d8d2d,#6b882b,#6a862a,#688229,#678029,#677e2a,#667c2b,#637a2c,#5f742b,#576a27,#4e5e22,#45531d,#3f4d19,#3c4d18,#3a5017,#385517,#375a17,#375e17,#366017,#366117,#376217,#386318,#3b661a,#3f691d,#466e22,#4f7529,#597d30,#628337,#69893d,#708d42,#769046,#7b9249,#7f934a,#82934b,#83914a,#839049,#838e48,#838d47,#848d47,#848d48,#858c48,#858c49,#868d4a,#868d4a,#878d4b,#878d4c,#878d4c,#888d4c,#888d4d,#888d4d)"></b><b style="left:699px;top:404px;width:534px;background:linear-gradient(90deg,#351c0a,#361c0a,#331d0a,#301e0b,#2c200b,#2a210b,#28230b,#27240b,#26260b,#25280b,#252b0c,#27300d,#2b370f,#2d3d10,#314412,#384f15,#3f5a19,#45641c,#4c6e20,#537824,#598128,#5f892b,#648f2d,#68932f,#6a9730,#6d9a32,#709d33,#729f34,#74a136,#75a337,#76a438,#78a539,#77a438,#76a137,#759e35,#749c34,#729932,#719631,#6f922f,#6d8d2d,#6b882b,#698329,#678028,#667d27,#657a27,#657a28,#64782a,#61762a,#5c6f29,#536425,#49571f,#3f4b19,#3a4516,#374414,#354713,#354d14,#355415,#355915,#355d16,#355f16,#366117,#376217,#396419,#3c671b,#426b1f,#497024,#51762a,#597c30,#608135,#67853a,#6e893f,#748c42,#7a8e45,#7d8e46,#7f8e46,#808d46,#818c45,#818b45,#828b45,#838b46,#838b47,#848b47,#858c48,#868c49,#868c4a,#878c4b,#878d4b,#878d4c,#878d4c,#878d4c)"></b><b style="left:697px;top:407px;width:534px;background:linear-gradient(90deg,#351c0a,#361c0a,#331d0a,#2f1e0b,#2c200b,#2a210b,#28220b,#26240b,#26260b,#25270b,#252b0b,#262f0c,#29350e,#2d3d10,#314412,#374f15,#3f5b19,#46651d,#4d6f21,#547925,#5a8228,#608a2b,#65902e,#68942f,#6b9731,#6e9b32,#709e33,#72a035,#74a236,#76a337,#77a538,#78a539,#77a338,#76a036,#749d35,#739a33,#729832,#709430,#6e8f2d,#6b892b,#698429,#678027,#657b25,#647825,#637626,#637627,#627529,#607329,#5b6c28,#516123,#46531d,#3c4617,#363f13,#333d11,#323e10,#314311,#324b12,#335313,#345914,#345d15,#355f16,#366117,#376218,#3a6419,#3e671c,#436b20,#497024,#507528,#56792d,#5d7d32,#648236,#6b853b,#72883f,#788a41,#7b8a42,#7d8a42,#7e8a42,#7f8a43,#808a43,#818a44,#828a45,#838a46,#848b47,#858b48,#858b49,#868c4a,#868c4a,#878c4b,#878c4b,#878d4c)"></b><b style="left:695px;top:410px;width:534px;background:linear-gradient(90deg,#351c0a,#361c0a,#331d0a,#2f1e0b,#2c1f0b,#29210b,#28220b,#26230b,#25250b,#24270b,#252b0b,#262f0c,#27340d,#2c3c10,#324512,#385015,#3f5c19,#46661d,#4e7121,#557b25,#5b8329,#618b2c,#65912e,#699530,#6b9831,#6e9b32,#719e34,#73a135,#75a336,#76a437,#77a638,#78a539,#77a237,#759f36,#749c34,#739932,#719631,#6f912f,#6d8c2c,#6a852a,#688027,#667c26,#647724,#627424,#627324,#617226,#617228,#5f7029,#596a27,#505f22,#44501b,#3a4315,#343c11,#30380f,#2f380e,#2f3b0f,#2f4110,#314a11,#325213,#335914,#345d15,#355f16,#366117,#386318,#3b651a,#3f681c,#446c1f,#496f23,#4e7326,#53762a,#5a7a2f,#627f34,#6a8238,#71853c,#77873e,#7a883f,#7c8840,#7d8840,#7e8841,#7f8842,#808943,#828944,#838a45,#848a46,#858b48,#858b49,#868b49,#868c4a,#878c4b,#878c4b)"></b><b style="left:693px;top:413px;width:534px;background:linear-gradient(90deg,#341c0a,#361c0a,#331d0a,#2f1e0b,#2c1f0b,#29200b,#27220b,#26230b,#25250b,#24270b,#242a0b,#262f0c,#27340d,#2a3b0f,#2f4311,#385116,#3f5c19,#47671d,#4e7222,#567c26,#5c8529,#628c2c,#66922e,#699630,#6c9931,#6f9c32,#719f34,#73a135,#75a336,#77a537,#78a638,#78a538,#76a137,#759f35,#739b33,#729832,#709530,#6e8e2d,#6b882b,#698328,#667d26,#647824,#627423,#617022,#606f23,#606f25,#606f27,#5e6e28,#596826,#4f5d21,#424e1a,#384114,#323910,#2f360e,#2d340d,#2c360d,#2d3a0d,#2e410f,#304a11,#325213,#335914,#345d15,#365f16,#376117,#396318,#3c661a,#40681c,#436b1e,#476e21,#4c7124,#527428,#5a782d,#627d32,#6b8036,#71833a,#76853c,#79853d,#7b863e,#7c863f,#7e8740,#7f8741,#808842,#818943,#838945,#848a46,#858a47,#858b48,#868b49,#868b4a,#868c4a)"></b><b style="left:692px;top:416px;width:534px;background:linear-gradient(90deg,#351c0a,#361c0a,#321d0a,#2f1e0b,#2b1f0b,#29200b,#27220a,#25230a,#24250a,#23260b,#242a0b,#252f0c,#27350d,#2b3c0f,#304512,#385216,#405f1a,#486a1e,#507523,#577f27,#5e872a,#638e2d,#67942f,#6a9730,#6d9a31,#709d33,#72a034,#74a235,#76a437,#77a638,#78a738,#77a537,#76a036,#749d34,#739a33,#719731,#6f912e,#6c8b2c,#6a8429,#677f27,#647824,#627423,#617022,#5f6d21,#5f6c22,#5f6c24,#5f6d27,#5d6c28,#576626,#4c5a20,#404a19,#363e13,#30370f,#2d330d,#2c320c,#2b320c,#2b350c,#2c3a0d,#2e420f,#304c11,#325413,#345a14,#355d15,#376016,#396217,#3b6419,#3d661a,#40681c,#436a1e,#476d20,#4c7023,#537428,#5c782d,#657c32,#6d8036,#738239,#76833a,#79843c,#7b853d,#7c863e,#7e863f,#7f8741,#808842,#828843,#838945,#848a46,#858a47,#858b48,#868b49,#868b4a)"></b><b style="left:690px;top:419px;width:534px;background:linear-gradient(90deg,#351c0a,#361c0a,#331c0a,#2f1d0a,#2b1f0b,#29200a,#27210a,#25230a,#24240a,#23260a,#242a0b,#252f0c,#27340d,#2a3b0f,#2f4512,#375216,#405f1a,#486a1e,#507623,#588027,#5e882a,#648f2d,#68942f,#6b9830,#6d9b32,#709e33,#72a034,#74a236,#76a437,#78a638,#78a738,#77a537,#76a136,#749d34,#739932,#719530,#6e8f2d,#6b882a,#688228,#667b25,#637623,#617121,#5f6d20,#5e6a20,#5e6a22,#5f6d25,#607027,#5e6e28,#586726,#4d5a20,#404a19,#353d12,#2f360e,#2c320c,#2b300b,#2a300b,#2a310b,#2b340c,#2c3a0d,#2e430f,#304c11,#325413,#345a14,#365e15,#386116,#3a6317,#3c6518,#3e661a,#40681b,#436a1d,#476c1f,#4d6f23,#567328,#5f782d,#677c32,#6e7f35,#738138,#76833a,#79843b,#7b843c,#7c853e,#7e863f,#7f8740,#818742,#828843,#838945,#848946,#858a47,#858a48,#858b49)"></b><b style="left:687px;top:422px;width:540px;background:linear-gradient(90deg,#341c0a,#361c0a,#331c0a,#301d0a,#2c1e0b,#29200a,#27200a,#25220a,#24230a,#23250a,#23290b,#252e0c,#26320d,#293a0f,#2e4311,#365015,#3e5d19,#476a1e,#4f7422,#577f27,#5e882a,#638f2d,#68942f,#6a9830,#6d9b32,#709e33,#72a134,#74a335,#76a537,#78a638,#78a738,#78a537,#77a236,#759e34,#739932,#719530,#6e8d2d,#6b872a,#688027,#657a24,#637423,#606f21,#5e6a1f,#5d6920,#5f6c22,#607025,#617227,#607129,#5b6b27,#505e22,#434e1a,#373f13,#30360f,#2c320c,#2a300b,#292f0a,#292f0a,#29300a,#2a330b,#2c390d,#2e420f,#304b11,#335413,#355a14,#375e15,#386116,#3a6317,#3c6518,#3d6619,#40671a,#43691c,#486c1f,#4f6f23,#577328,#61782d,#697c31,#6f7e35,#738037,#768239,#78833a,#7a843c,#7c853d,#7e853e,#7f8640,#818741,#828843,#838844,#848945,#848a47,#858a47,#858a48)"></b><b style="left:686px;top:425px;width:540px;background:linear-gradient(90deg,#351c0a,#361c0a,#321c0a,#2f1d0a,#2c1e0b,#291f0a,#26210a,#24220a,#23230a,#22250a,#23290b,#242e0c,#26330d,#293b0f,#2f4512,#375316,#3f601a,#486c1e,#517723,#598127,#5f8a2b,#65912e,#68962f,#6b9931,#6e9c32,#719f33,#73a135,#75a436,#77a537,#78a738,#78a637,#77a436,#77a235,#759f33,#729831,#6f922e,#6c8a2b,#698328,#667d25,#647623,#617121,#5f6c20,#5e691f,#5f6c21,#607023,#627326,#627428,#617329,#5b6c28,#505e22,#424d1a,#363e13,#2f350e,#2c310c,#2a2f0b,#292e0a,#292e0a,#292e0a,#29300a,#2a340b,#2c3b0d,#2f440f,#314e11,#345613,#365c15,#385f16,#396216,#3b6317,#3c6518,#3e6619,#41671b,#456a1d,#4c6d21,#547125,#5d752a,#65792f,#6c7c32,#707f35,#748037,#778239,#79833a,#7b843c,#7d853d,#7e853f,#808640,#818741,#828743,#838844,#848945,#848946,#858a47)"></b><b style="left:684px;top:428px;width:540px;background:linear-gradient(90deg,#341c0a,#361c0a,#321c0a,#2f1d0a,#2b1e0a,#291f0a,#26200a,#24210a,#23230a,#22240a,#22290b,#242d0c,#26330d,#293a0f,#2f4411,#375215,#3f601a,#486c1f,#517823,#598228,#5f8b2b,#65922e,#69962f,#6c9931,#6e9d32,#719f34,#73a235,#75a436,#77a637,#78a738,#78a637,#77a436,#76a235,#76a033,#739931,#6f902d,#6c892a,#688127,#667a24,#637423,#606e21,#5e691f,#5e6b20,#607022,#627224,#637527,#637629,#62752a,#5d6f29,#526224,#44501b,#373f13,#2f360e,#2c310c,#2a2f0b,#292d0a,#282d0a,#282d09,#282e0a,#29300a,#2a350b,#2d3c0d,#304610,#334f12,#355714,#375d15,#396016,#3a6216,#3b6417,#3d6518,#3f6619,#43681b,#486b1e,#4f6e22,#587227,#61762c,#687a30,#6d7d33,#717f35,#758037,#778239,#79833a,#7b833c,#7d843d,#7f853e,#808640,#818641,#828742,#838844,#848845,#848946)"></b><b style="left:682px;top:431px;width:540px;background:linear-gradient(90deg,#341c0a,#361b0a,#321c0a,#2f1d0a,#2b1e0a,#281f0a,#26200a,#24210a,#23220a,#22240a,#22280a,#232d0c,#25320d,#293a0f,#2e4411,#375215,#3f601a,#486d1f,#517924,#598328,#608b2b,#65932e,#699730,#6c9a31,#6f9d32,#71a034,#74a235,#76a436,#77a637,#78a838,#78a637,#77a436,#77a235,#769f33,#749b31,#6e8e2d,#6b8729,#688026,#657824,#627222,#5f6c20,#5e6a1f,#606e20,#627223,#637525,#647827,#64792a,#63782b,#5f722a,#556625,#47531d,#394214,#30370f,#2c310c,#2a2f0b,#292d0a,#282d09,#282c09,#282d09,#282e0a,#29310a,#2b360c,#2e3e0e,#314810,#345112,#365914,#385e15,#396116,#3a6216,#3c6417,#3e6518,#41671a,#45691c,#4c6c20,#547024,#5c7429,#64782d,#6a7b30,#6e7d33,#727f35,#758037,#788139,#7a823a,#7c833b,#7e843d,#7f853e,#80853f,#818641,#828742,#838843,#848845)"></b><b style="left:681px;top:434px;width:540px;background:linear-gradient(90deg,#341c0a,#361b0a,#321c0a,#2e1d0a,#2b1d0a,#281f0a,#25200a,#24210a,#22220a,#21240a,#22280b,#232d0b,#25330d,#293b0f,#2f4712,#385516,#40621a,#496f1f,#527b24,#5a8528,#618e2c,#66942e,#6a9830,#6d9b31,#709e33,#72a134,#74a335,#76a536,#78a737,#78a838,#78a637,#77a436,#77a234,#759e32,#739930,#6f8f2c,#6a8428,#677d25,#647523,#616f21,#5e6a1f,#606e21,#617122,#637523,#647926,#657a28,#657b2b,#647a2c,#60742b,#566726,#47541d,#394215,#30370f,#2c310c,#2a2f0a,#292d0a,#282c09,#282c09,#282c09,#282d09,#292f0a,#2a320b,#2c380c,#2f420f,#334c11,#365513,#375b14,#395f15,#3a6116,#3b6317,#3d6418,#406619,#44681b,#4a6b1f,#526e23,#5a7227,#61762b,#67792f,#6c7b31,#707d34,#747f36,#778037,#798239,#7b823a,#7d833b,#7e843d,#80853e,#81853f,#828641,#828742,#838743)"></b><b style="left:679px;top:437px;width:540px;background:linear-gradient(90deg,#341c0a,#361b0a,#321c0a,#2e1c0a,#2b1d0a,#281e0a,#251f0a,#23210a,#22220a,#21230a,#21270a,#232d0b,#25320d,#293b0f,#2f4612,#375516,#40631b,#496f20,#527b24,#5a8628,#618f2c,#67952e,#6a9830,#6d9b31,#709f33,#72a134,#75a435,#76a636,#78a737,#78a737,#78a636,#77a435,#77a234,#759e32,#73972f,#71922c,#6a8328,#667b25,#637523,#606d20,#5f6c20,#617021,#637423,#647824,#667b27,#667d29,#667e2b,#657c2d,#62772c,#596c28,#4b5920,#3c4516,#323910,#2d320c,#2a2f0b,#292d0a,#282c09,#282c09,#282c09,#282c09,#282d09,#292f0a,#2b340b,#2e3b0d,#31450f,#344f12,#365713,#385d14,#396015,#3b6216,#3c6317,#3f6518,#43671a,#48691d,#4f6d21,#567025,#5d7429,#64772c,#697a2f,#6d7c32,#717e34,#757f36,#778037,#7a8139,#7c823a,#7d833b,#7f843c,#80843e,#81853f,#828640,#828642)"></b><b style="left:678px;top:440px;width:540px;background:linear-gradient(90deg,#341b0a,#361b0a,#321c0a,#2e1d0a,#2a1d0a,#271e0a,#251f0a,#23200a,#22220a,#20230a,#21280a,#222d0b,#25330d,#293b0f,#304812,#395717,#41651b,#4b7220,#547e25,#5b8729,#62902c,#67972f,#6b9930,#6e9c32,#71a033,#73a234,#75a436,#77a637,#78a838,#78a737,#78a636,#77a435,#76a133,#759d31,#73962e,#708f2b,#6d8728,#657924,#627222,#5f6c20,#617021,#627322,#647824,#657b25,#677e28,#67802a,#67802c,#667e2e,#63792d,#5b6e29,#4c5b21,#3d4717,#323910,#2d330d,#2a2f0b,#292d0a,#282c09,#282c09,#282c09,#282c09,#282d09,#292e0a,#2b310b,#2d370c,#303f0e,#334a11,#365312,#385a14,#395e15,#3a6116,#3c6317,#3f6418,#42661a,#47691d,#4e6c20,#556f24,#5b7227,#61752b,#67782e,#6b7a30,#6f7c32,#737e34,#767f36,#798138,#7b8139,#7d823a,#7e833b,#7f833c,#80843d,#81853f,#828540)"></b><b style="left:676px;top:443px;width:540px;background:linear-gradient(90deg,#341b0a,#361b0a,#321c0a,#2e1c0a,#2a1d0a,#271e0a,#251f0a,#23200a,#212109,#20230a,#21270a,#222c0b,#24330d,#283b0e,#304812,#385716,#41651b,#4a7120,#547e25,#5b8829,#62912c,#67972f,#6b9a30,#6e9d32,#71a033,#73a234,#75a536,#77a737,#78a838,#78a737,#78a636,#77a435,#77a133,#759d31,#73962e,#708f2b,#6e8828,#677b24,#627021,#606d20,#627222,#647623,#657924,#677e26,#688029,#68822b,#68822d,#67802e,#657c2e,#5e722b,#516124,#414c1a,#353c12,#2e340d,#2b300b,#292e0a,#282c09,#282c09,#282c09,#282c09,#282c09,#292d09,#2a2f0a,#2c330b,#2e390d,#31430f,#344d11,#375513,#385b14,#3a5f15,#3c6116,#3e6317,#416519,#46671c,#4c6a1f,#526d22,#587126,#5e7329,#64762c,#69792e,#6d7b31,#717d33,#747e35,#777f36,#7a8038,#7c8139,#7d823a,#7e823b,#7f833c,#80843d,#81843e)"></b><b style="left:674px;top:446px;width:540px;background:linear-gradient(90deg,#341b0a,#361b0a,#321c0a,#2e1c0a,#2a1d0a,#271e0a,#251f0a,#232009,#212109,#202309,#21270a,#222c0b,#24320c,#283a0e,#2f4712,#385716,#41641b,#4a7220,#547e25,#5b8829,#62912c,#68972f,#6b9b30,#6e9e32,#71a033,#74a334,#76a536,#77a737,#79a837,#78a737,#78a636,#77a435,#77a133,#759c31,#73962e,#71902b,#6e8828,#6b8126,#616f21,#616f21,#637422,#657824,#667c25,#688027,#69822a,#69842c,#69842e,#68822f,#667e2f,#61762d,#556727,#46521d,#384014,#30360f,#2c310c,#292e0a,#282d0a,#282c09,#282c09,#282c09,#282c09,#292c09,#2a2d0a,#2b300b,#2d350c,#303c0e,#334610,#354f12,#375713,#395c14,#3b5f16,#3e6217,#416419,#45661b,#4a691e,#506c21,#566f24,#5c7227,#61742a,#66772c,#6a792f,#6e7b31,#727d33,#767e35,#787f36,#7b8037,#7c8138,#7e8239,#7f823a,#7f833b,#80833c)"></b><b style="left:672px;top:449px;width:540px;background:linear-gradient(90deg,#341b0a,#361b0a,#321c0a,#2e1c0a,#2b1c0a,#271d0a,#251e0a,#231f09,#212109,#202209,#20270a,#212c0b,#24320c,#273a0e,#2e4612,#375616,#41641b,#4a7120,#547e25,#5b8829,#62912c,#68972f,#6b9b30,#6e9e32,#71a133,#74a335,#76a636,#77a737,#79a837,#78a737,#78a636,#78a435,#77a133,#759c30,#73962e,#708f2b,#6e8928,#6a8025,#657623,#627021,#647623,#667a24,#677f26,#698228,#6a852a,#6a862c,#6a862e,#698430,#678030,#637a2f,#5a6d2a,#4b5921,#3c4617,#323910,#2d330d,#2a2f0b,#292d0a,#282c09,#282c09,#282c09,#282c09,#292c09,#292d0a,#2b2e0a,#2d320b,#2f370d,#313f0e,#344810,#365112,#395814,#3b5d15,#3d6016,#406218,#44651a,#49681d,#4e6a20,#546d23,#597025,#5e7328,#63752b,#67772d,#6c792f,#707b32,#747d33,#777e35,#7a7f36,#7c8037,#7d8138,#7e8139,#7f823a,#7f823b)"></b><b style="left:671px;top:452px;width:540px;background:linear-gradient(90deg,#341b0a,#361b0a,#321c0a,#2e1c0a,#2a1c0a,#271d0a,#241e0a,#221f09,#212109,#1f2209,#20270a,#212c0b,#24330c,#283b0f,#2f4912,#385817,#42661c,#4c7421,#558026,#5c8a2a,#64932d,#68982f,#6c9c30,#6f9f32,#72a233,#75a535,#76a636,#78a837,#79a837,#78a736,#78a635,#78a434,#77a032,#759b30,#73952d,#708e2a,#6e8727,#6a7f25,#687a24,#637322,#657924,#677d25,#698127,#6a8529,#6b872b,#6b882d,#6b872f,#6a8530,#688131,#647b30,#5c6f2b,#4e5d23,#3f4919,#343c12,#2e340d,#2b300b,#292e0a,#282d09,#282c09,#282c09,#282c09,#292c09,#2a2c0a,#2b2d0a,#2c300b,#2e340c,#313b0e,#33430f,#364c11,#385413,#3b5a14,#3d5e16,#406118,#44641a,#49661c,#4e691f,#536c22,#586f24,#5d7127,#617329,#66762c,#6a782e,#6e7a30,#737c32,#767e34,#797f35,#7b7f36,#7c8037,#7d8138,#7e8139,#7f823a)"></b><b style="left:669px;top:455px;width:540px;background:linear-gradient(90deg,#341b0a,#361b0a,#321b0a,#2e1c0a,#2a1c0a,#271d0a,#241e0a,#221f09,#202009,#1f2209,#20270a,#212c0b,#24330c,#273b0e,#304912,#385817,#41661b,#4b7321,#558026,#5c8a2a,#64932d,#68982f,#6c9c30,#6f9f32,#72a233,#75a534,#77a736,#78a837,#79a937,#79a736,#78a635,#78a434,#77a032,#759a2f,#73942c,#718e2a,#6e8727,#6a7f25,#697c24,#687d25,#667a24,#687f26,#698328,#6b872a,#6b892c,#6c8a2e,#6b892f,#6a8731,#698331,#657d30,#5f742d,#546427,#45511d,#384114,#30370f,#2c310c,#2a2f0b,#292d0a,#282c09,#282c09,#282c09,#292c09,#2a2c0a,#2b2d0a,#2c2e0b,#2e310b,#2f360d,#323d0e,#344510,#374e12,#3a5513,#3d5a15,#405e17,#446119,#48641b,#4d671e,#526a20,#566d23,#5b6f25,#5f7128,#63742a,#67762c,#6c782f,#707a31,#747c33,#787e34,#7a7f35,#7c7f36,#7d8037,#7e8038,#7e8138)"></b><b style="left:668px;top:458px;width:534px;background:linear-gradient(90deg,#341b0a,#361b0a,#321b0a,#2d1c0a,#2a1c0a,#271d0a,#241e09,#221f09,#202009,#1f2209,#20270a,#212c0b,#24330c,#283c0f,#304b13,#3a5b17,#43681c,#4c7522,#568126,#5d8b2a,#65942d,#69992f,#6c9d31,#6fa032,#73a333,#75a635,#77a835,#78a937,#79a937,#79a736,#78a635,#78a334,#779f31,#74992e,#73932c,#718d29,#6d8527,#6a7d25,#6a7f25,#6c8426,#677d25,#698127,#6a8529,#6c892b,#6c8b2d,#6d8c2f,#6c8a30,#6b8831,#698331,#667e31,#61762f,#576829,#495620,#3c4517,#323a10,#2d330d,#2b2f0b,#292e0a,#292d0a,#292c09,#292c09,#292c09,#2a2c0a,#2b2c0a,#2c2d0a,#2d300b,#2f330c,#31390d,#33400f,#364811,#3a5012,#3d5714,#415b16,#455f18,#49621b,#4d651d,#526820,#566b22,#5a6d24,#5d7026,#617228,#66742b,#6a772d,#6f792f,#737b31,#777d33,#797e34,#7b7f35,#7c7f36,#7d8037)"></b><b style="left:666px;top:461px;width:540px;background:linear-gradient(90deg,#341b0a,#361b0a,#321b0a,#2e1c0a,#2a1c0a,#271d0a,#241e09,#221e09,#202009,#1e2109,#1f260a,#202b0b,#23330c,#283c0e,#304b13,#395b17,#43681c,#4d7522,#558126,#5d8b2a,#64942d,#69992f,#6c9d31,#6fa032,#73a333,#75a635,#77a835,#79aa36,#79a937,#79a836,#79a635,#78a434,#779f31,#75992e,#73932b,#708c29,#6e8527,#6a7e25,#6b8025,#6d8627,#6c8627,#698328,#6b872a,#6c8b2c,#6e8d2e,#6d8d2f,#6d8c31,#6b8931,#698432,#677f31,#637930,#5c6e2c,#4f5e24,#424d1b,#373f13,#30360f,#2c310c,#2a2f0b,#292d0a,#292c0a,#292c09,#292c0a,#2a2c0a,#2b2c0a,#2c2d0a,#2d2e0b,#2e300b,#30340c,#323a0e,#35420f,#394a11,#3d5113,#415715,#455b17,#495f19,#4d621c,#51651e,#556821,#586b23,#5b6d25,#5f6f27,#637229,#68742b,#6d772e,#717930,#757b32,#787d33,#7a7e34,#7c7f35,#7d7f36,#7d8036)"></b><b style="left:664px;top:464px;width:534px;background:linear-gradient(90deg,#341b0a,#361b0a,#321b0a,#2e1b0a,#2a1c0a,#271d0a,#241d09,#211e09,#201f09,#1e2109,#1f260a,#202b0b,#23320c,#273b0e,#304a12,#395a17,#43681c,#4d7622,#568226,#5d8b2a,#64942d,#69992f,#6c9d31,#70a032,#73a333,#76a635,#77a835,#79aa36,#7aab36,#79a836,#79a735,#78a433,#779f31,#75992e,#73932b,#718c29,#6d8427,#6b7f25,#6c8226,#6e8727,#6f8b29,#6b8729,#6c882a,#6d8c2c,#6e8f2e,#6e8f30,#6d8d31,#6c8a32,#6a8532,#688132,#647b31,#5f732e,#566628,#49561f,#3c4617,#333a11,#2e340d,#2b300b,#2a2e0a,#292d0a,#292c0a,#2a2c0a,#2a2c0a,#2b2c0a,#2c2c0a,#2d2d0b,#2e2f0b,#2f310c,#31360d,#343c0e,#384310,#3c4b12,#405114,#455716,#495b18,#4d5f1a,#50621d,#54651f,#576821,#5a6a23,#5d6d25,#616f27,#657129,#6a742c,#6f772e,#737a30,#777c32,#797d33,#7b7e34,#7c7f35)"></b><b style="left:663px;top:467px;width:534px;background:linear-gradient(90deg,#341b0a,#361b0a,#311b0a,#2e1b0a,#2a1c0a,#261c0a,#231d09,#211e09,#1f1f09,#1e2109,#1f260a,#202b0b,#23320c,#283c0e,#314c13,#3a5c18,#446a1d,#4e7823,#578427,#5f8d2b,#65962e,#699a2f,#6d9d31,#70a132,#73a434,#76a735,#78a935,#79ab36,#7aab36,#7bac36,#79a735,#78a433,#779e30,#75982e,#73922b,#708b28,#6d8326,#6b8025,#6d8527,#6f8a28,#708d2a,#70902b,#6d8b2b,#6e8e2d,#6f902f,#6f9131,#6d8e31,#6c8a32,#6a8532,#688132,#657c31,#61752f,#596a2b,#4e5c23,#414c1a,#373f13,#30360f,#2d320c,#2b2f0b,#2a2e0a,#2a2d0a,#2a2c0a,#2b2c0a,#2c2c0a,#2c2c0a,#2d2d0b,#2e2e0b,#2f300b,#31330c,#34380d,#373e0f,#3c4611,#414d13,#465215,#4a5717,#4d5b19,#515f1b,#54621e,#576520,#596821,#5c6a23,#606c25,#646f27,#68722a,#6d752c,#72782f,#767a31,#797c33,#7b7d34,#7c7e34)"></b><b style="left:661px;top:470px;width:534px;background:linear-gradient(90deg,#341b0a,#361b0a,#321b0a,#2e1b0a,#2a1c0a,#271c0a,#231d09,#211e09,#1f1f09,#1e2109,#1f260a,#202b0a,#23320c,#273b0e,#304b13,#395b17,#446a1d,#4e7822,#578427,#5f8d2b,#66962e,#699a2f,#6d9e31,#70a132,#73a433,#76a735,#78a935,#79ab36,#7aac36,#7bac36,#7bab36,#79a433,#779f31,#75982e,#73922b,#718c28,#6d8326,#6c8126,#6e8727,#708c29,#708e2a,#71922c,#70912d,#6f902e,#6f922f,#6f9231,#6e8f32,#6c8b32,#6a8632,#688232,#667d32,#637731,#5d702d,#556427,#48551f,#3d4617,#343b11,#2f340e,#2c310c,#2b2f0b,#2b2d0a,#2b2d0a,#2b2c0a,#2c2c0a,#2c2c0a,#2d2c0b,#2e2d0b,#2f2e0b,#30300c,#33340c,#36390e,#3b400f,#414711,#464d13,#4a5115,#4d5617,#505a19,#535e1c,#56611e,#58641f,#5b6621,#5e6923,#616b25,#666e27,#6b722a,#70752d,#74782f,#777b31,#7a7c33,#7b7d34)"></b><b style="left:660px;top:473px;width:534px;background:linear-gradient(90deg,#341b0a,#361b0a,#311b0a,#2d1b0a,#291c0a,#261c0a,#231d09,#211e09,#1f1f09,#1e2109,#1f260a,#202b0b,#23330c,#273c0e,#314c13,#3a5d18,#456b1e,#4f7a23,#588528,#608f2b,#66972e,#6a9b30,#6d9e31,#71a232,#74a534,#76a835,#78aa36,#79ab36,#7aac36,#7bac36,#7cac36,#7aa633,#779f30,#75982d,#73922a,#708a28,#6d8226,#6d8326,#6f8928,#718e29,#71912b,#72932d,#73972e,#6f912e,#709330,#6f9231,#6e8f32,#6c8b32,#6a8733,#688232,#667d32,#637831,#60722f,#596a2a,#4e5c23,#424d1b,#384014,#323810,#2e330d,#2c300c,#2c2e0b,#2c2d0b,#2c2c0a,#2c2c0a,#2d2c0a,#2d2c0b,#2e2c0b,#2f2d0b,#302f0b,#32320c,#36360d,#3b3c0e,#414210,#464812,#4b4d14,#4e5116,#515518,#53591a,#565d1c,#58601e,#5a631f,#5d6521,#606723,#646b25,#696e28,#6e722b,#72762e,#767930,#797b32,#7b7d33)"></b><b style="left:658px;top:476px;width:534px;background:linear-gradient(90deg,#341b0a,#361b0a,#321b0a,#2d1b0a,#2a1b0a,#261c0a,#231d09,#211d09,#1f1e09,#1d2009,#1e2509,#1f2b0a,#23320c,#273c0e,#304c13,#3a5c18,#446b1d,#4f7923,#588527,#608f2b,#66972e,#6a9b30,#6d9e31,#71a232,#74a534,#76a835,#78aa35,#79ab36,#7aac36,#7bad36,#7cac36,#7caa34,#7aa331,#76992d,#74922b,#708a28,#6d8226,#6e8527,#708a28,#718f2a,#72922c,#73952d,#73982f,#739830,#719530,#709331,#6f9032,#6d8c33,#6b8733,#698333,#677e32,#647a32,#627530,#5d6f2d,#556528,#4a5620,#3e4818,#363d13,#31360f,#2e320d,#2d2f0c,#2c2e0b,#2c2d0b,#2d2c0b,#2d2c0b,#2d2c0b,#2e2c0b,#2f2d0b,#302e0b,#32300c,#35330c,#3a380d,#403e0f,#464310,#4b4812,#4e4c14,#515016,#535418,#55581a,#575c1c,#5a5f1d,#5c611f,#5f6320,#626622,#666a25,#6b6e28,#70732b,#74772e,#787a31,#7a7c32)"></b><b style="left:657px;top:479px;width:534px;background:linear-gradient(90deg,#341b0a,#361b0a,#311b0a,#2d1b0a,#291b0a,#261c0a,#231d09,#211d09,#1e1e09,#1d2009,#1e2509,#1f2b0a,#23330c,#283d0f,#314e13,#3b5e18,#456c1e,#507b24,#598628,#61902c,#67982e,#6b9c30,#6e9f31,#71a233,#74a634,#77a835,#78aa36,#7aac36,#7bad36,#7bad36,#7cac35,#7ca933,#7ca631,#7a9f2e,#74922a,#708928,#6d8326,#6f8827,#718c29,#72902a,#73942c,#73972e,#74992f,#759c31,#729731,#709432,#6f9032,#6d8c33,#6b8733,#698333,#677e32,#657a32,#637631,#60722f,#596b2b,#505e24,#444f1c,#3b4316,#343a11,#30340e,#2e310c,#2d2f0c,#2d2d0b,#2d2d0b,#2d2c0b,#2e2c0b,#2e2c0b,#2f2c0b,#302d0b,#322f0b,#35320c,#3a360d,#413b0e,#473f0f,#4b4411,#4f4812,#514c14,#535016,#555418,#57581a,#595b1b,#5c5d1d,#5e5f1e,#616220,#646623,#696a26,#6e6f29,#73742d,#77782f,#797b31)"></b><b style="left:656px;top:482px;width:528px;background:linear-gradient(90deg,#341b0a,#361b0a,#311b0a,#2d1b0a,#291b0a,#251c09,#221c09,#201d09,#1e1e08,#1d2109,#1e2609,#1f2b0a,#23330c,#283f0f,#325014,#3c6019,#466e1f,#517c24,#598728,#62912c,#68992f,#6b9c30,#6fa031,#72a333,#75a634,#77a935,#79aa36,#7aac36,#7bad36,#7cae36,#7cac35,#7ca933,#7ca531,#7ca22f,#7a9b2c,#708928,#6e8426,#708a28,#728f29,#72922b,#73952d,#74982f,#759b30,#759d31,#749c32,#709432,#6f9133,#6d8d33,#6b8833,#698333,#677e33,#657a32,#637731,#617430,#5d6f2d,#556528,#4a5720,#404919,#383e13,#333710,#30320d,#2f300c,#2e2e0b,#2e2d0b,#2e2c0b,#2e2c0b,#2e2c0b,#2f2c0b,#302d0b,#322e0b,#35310c,#3b340d,#41390d,#473d0f,#4c4110,#4f4411,#514813,#534c14,#555016,#575418,#59571a,#5b591b,#5d5c1c,#605e1e,#636120,#676623,#6c6b27,#71712b,#75762e)"></b><b style="left:654px;top:485px;width:528px;background:linear-gradient(90deg,#341b0a,#361b0a,#321b0a,#2d1b0a,#291b0a,#261c0a,#231c09,#201d09,#1e1e08,#1d2008,#1e2509,#1f2a0a,#22320c,#273d0f,#314f13,#3b5f19,#466e1e,#507c24,#598728,#61912c,#67992f,#6b9c30,#6ea031,#72a333,#75a634,#77a935,#79ab36,#7aac36,#7bad36,#7cae36,#7cac35,#7ca933,#7ca631,#7ca22f,#7b9d2d,#77942b,#6f8527,#718b28,#72902a,#73932b,#74962d,#74992f,#759c30,#769e32,#759d33,#729733,#6f9233,#6d8d33,#6b8933,#698333,#677f33,#657b32,#647832,#637631,#60732f,#5b6c2c,#526126,#48531e,#3e4618,#373c12,#33360f,#30320d,#2f2f0c,#2e2e0b,#2e2d0b,#2e2c0b,#2e2c0b,#2f2c0b,#302d0b,#322e0b,#35300c,#3a330c,#40360d,#473a0e,#4b3e0f,#4f4110,#514411,#534813,#554b14,#574f16,#595318,#5b5619,#5d581a,#5f5a1c,#615d1d,#656120,#696623,#6e6c27,#73722b)"></b><b style="left:653px;top:488px;width:528px;background:linear-gradient(90deg,#341b0a,#361b0a,#311b0a,#2d1b0a,#291b0a,#261c09,#221c09,#201d09,#1e1e08,#1d2008,#1e2609,#1f2b0a,#22330c,#283e0f,#324f14,#3c6119,#47701f,#527e25,#5a8829,#62922c,#68992f,#6b9d30,#6fa032,#72a433,#76a734,#77a935,#79ab36,#7aac36,#7bad36,#7cae36,#7dac35,#7da933,#7da631,#7ca22f,#7b9d2d,#78942b,#76912a,#728d29,#73912a,#74952c,#74972e,#759a2f,#769d31,#769f32,#759e33,#739a33,#6f9233,#6d8d33,#6b8833,#698333,#677e33,#657b32,#647832,#637731,#627530,#5e702e,#576729,#4e5b23,#434d1b,#3b4115,#353911,#32330e,#30300d,#2f2e0c,#2f2d0b,#2e2c0b,#2f2c0b,#2f2c0b,#302d0b,#322e0b,#352f0c,#3a320c,#41350d,#47390d,#4c3c0e,#4f3f0f,#514110,#534411,#554813,#574c15,#595016,#5a5218,#5c5519,#5e571a,#60591b,#635d1e,#676121,#6b6825,#706e29)"></b><b style="left:651px;top:491px;width:528px;background:linear-gradient(90deg,#341b0a,#361b0a,#321b0a,#2e1b0a,#2a1b0a,#261c0a,#231c09,#201d09,#1e1e08,#1d2008,#1e2509,#1f2a0a,#22320c,#273d0e,#314e13,#3b5f18,#466e1e,#517d24,#5a8829,#62922c,#68992f,#6b9d30,#6fa031,#72a433,#76a734,#77a935,#79ab36,#7aac36,#7bae36,#7cae36,#7dad35,#7daa33,#7da631,#7da32f,#7b9c2d,#78952b,#78952b,#799a2c,#74932b,#74952c,#75992e,#759b2f,#769e31,#76a032,#769f33,#749c34,#709433,#6e8e33,#6c8933,#698433,#677f33,#657b32,#647832,#647732,#637631,#617430,#5c6e2d,#556427,#4b5720,#414919,#3a3e14,#353710,#32320e,#302f0d,#2f2e0c,#2f2d0b,#2f2c0b,#2f2c0b,#302d0b,#322d0b,#352f0b,#39310c,#40340c,#46370d,#4b3a0e,#4f3d0e,#513f0f,#534210,#544512,#564813,#584c15,#5a4f16,#5c5217,#5d5418,#5f561a,#61581b,#645c1e,#686221,#6d6926)"></b><b style="left:650px;top:494px;width:522px;background:linear-gradient(90deg,#341b0a,#361b0a,#311b0a,#2d1b0a,#291b0a,#261c09,#231c09,#201d09,#1e1e08,#1d2008,#1e2509,#1f2b0a,#22330c,#283e0f,#325014,#3c6119,#476f1f,#527e25,#5b8929,#63942d,#689a2f,#6c9d30,#6fa132,#73a433,#76a734,#78aa35,#79ab36,#7bad36,#7cae36,#7daf36,#7dac35,#7da933,#7da631,#7da22e,#7b9c2d,#78942b,#79972c,#7b9d2d,#7a9e2e,#75972d,#759a2e,#769c30,#769f31,#77a133,#76a034,#749d34,#729734,#6e8e34,#6c8933,#698433,#677f33,#657b32,#647832,#647832,#637732,#627531,#5f712f,#596a2a,#515e24,#46501d,#3e4317,#373a12,#33340f,#31310d,#302f0c,#2f2d0c,#2f2d0b,#2f2d0b,#302d0b,#322e0b,#352f0b,#3a310c,#40340c,#47370d,#4c390d,#4f3b0e,#513d0f,#53400f,#544311,#564612,#584a14,#5a4d15,#5c4f16,#5d5117,#5f5318,#60551a,#63591c,#665e1f)"></b><b style="left:648px;top:497px;width:522px;background:linear-gradient(90deg,#341b0a,#361b0a,#321b0a,#2e1b0a,#2a1b0a,#261c0a,#231c09,#201d09,#1e1e08,#1c1f08,#1d2409,#1e2a0a,#22320c,#273c0e,#314e13,#3b5f19,#466e1e,#517d24,#5a8828,#62932c,#689a2f,#6c9d30,#6fa132,#73a433,#76a734,#78aa35,#79ac36,#7bad36,#7cae36,#7daf36,#7dad35,#7daa33,#7da631,#7ea32f,#7b9c2d,#78952b,#7a992c,#7c9e2d,#7ca22f,#799f2f,#769a2f,#769d30,#77a032,#77a133,#76a134,#759e34,#729934,#6f9034,#6c8a34,#6a8533,#678033,#667b32,#647932,#647832,#647832,#637731,#617430,#5e6f2d,#576629,#4e5922,#444b1b,#3c4015,#363811,#33330e,#31300d,#302e0c,#302d0c,#302d0b,#302d0b,#322e0b,#352f0c,#39310c,#3f330c,#46360d,#4b380d,#4f3a0d,#513c0e,#523e0f,#544010,#554311,#574712,#594a14,#5b4d15,#5d4f16,#5e5117,#605318,#61551a,#64591c)"></b><b style="left:647px;top:500px;width:522px;background:linear-gradient(90deg,#341b0a,#361b0a,#311b0a,#2d1b0a,#291b0a,#261c09,#231c09,#201d09,#1e1d08,#1c1f08,#1d2509,#1e2a0a,#22320c,#273e0f,#314f13,#3c6019,#47701f,#527e25,#5a8929,#63932c,#689a2f,#6c9e30,#70a132,#73a533,#76a834,#78aa35,#79ac36,#7bad36,#7caf36,#7daf36,#7dac34,#7ea932,#7ea730,#7da32e,#7b9b2d,#79952b,#7b9b2c,#7da12e,#7ca32f,#7ca530,#789f30,#779e31,#77a132,#77a233,#76a134,#759e34,#729934,#709334,#6c8a34,#698433,#677f33,#657b32,#647932,#647832,#647832,#637732,#627631,#60722f,#5b6b2b,#536026,#49521e,#404518,#393c13,#353510,#32320e,#312f0d,#302e0c,#302e0c,#312e0c,#322e0c,#352f0c,#3a310c,#40330c,#46360d,#4b380d,#4f3a0d,#513b0e,#523d0e,#543f0f,#554210,#574512,#594813,#5b4b14,#5d4d15,#5e4f16,#5f5117,#615318,#63561b)"></b><b style="left:646px;top:503px;width:516px;background:linear-gradient(90deg,#341b0a,#361b0a,#311b0a,#2d1b0a,#291b0a,#261c09,#221c09,#201d09,#1e1d08,#1c1f08,#1d2509,#1e2a0a,#22320c,#283e0f,#325114,#3c6119,#47701f,#527f25,#5b8a29,#63942d,#699a2f,#6c9e30,#70a232,#74a533,#76a834,#78aa35,#7aac36,#7bae36,#7caf36,#7daf36,#7eac34,#7ea932,#7ea630,#7ea32e,#7b9a2c,#79962b,#7b9c2d,#7da22e,#7da430,#7ca531,#7ca732,#78a131,#77a232,#77a333,#76a134,#759e34,#729934,#709334,#6c8a34,#698433,#677f33,#657b32,#647932,#647832,#647832,#647832,#637731,#617430,#5e6f2d,#576629,#4e5922,#444b1b,#3c4015,#373811,#34340f,#32310d,#312f0d,#312e0c,#312e0c,#332e0c,#35300c,#3a310c,#40340c,#47360d,#4c380d,#4f390d,#513b0d,#523c0e,#543e0f,#554010,#574311,#594712,#5b4a14,#5c4c15,#5e4e16,#5f4f16,#605117)"></b><b style="left:645px;top:506px;width:516px;background:linear-gradient(90deg,#341b0a,#361b0a,#311b0a,#2d1b0a,#291b0a,#261c09,#221c09,#201d09,#1e1d08,#1c2008,#1d2509,#1e2a0a,#22330c,#283f0f,#325114,#3d631a,#487120,#538025,#5c8b29,#64952d,#699b2f,#6c9e31,#70a232,#74a633,#77a934,#78ab35,#7aac36,#7bae36,#7db037,#7daf36,#7eac34,#7ea932,#7ea630,#7ea22e,#7b9a2c,#7a972c,#7c9e2d,#7da32f,#7da530,#7da631,#7ca832,#7ca933,#78a333,#78a334,#77a234,#759e35,#729934,#709334,#6d8c34,#698433,#677f33,#657b32,#647932,#647832,#647832,#647832,#637732,#627631,#60722f,#5b6b2b,#536025,#49521f,#404618,#3a3c13,#363610,#33330e,#32300d,#312f0d,#322f0c,#332f0c,#36300c,#3b320c,#41340d,#47360d,#4c380d,#4f390d,#513a0d,#523b0e,#533d0e,#553f0f,#564211,#584512,#5a4813,#5c4b14,#5d4d15,#5e4e16,#605017)"></b><b style="left:644px;top:509px;width:510px;background:linear-gradient(90deg,#341b0a,#361b0a,#311b0a,#2d1b0a,#291b0a,#251c09,#221c09,#201d09,#1d1e08,#1c2008,#1d2509,#1e2b0a,#22330c,#283f0f,#335214,#3d631a,#497320,#538026,#5c8b2a,#65962d,#699b2f,#6d9f31,#70a232,#74a633,#77a935,#79ab35,#7aad36,#7bae36,#7db037,#7eaf35,#7eac33,#7ea931,#7fa630,#7da02e,#7a982c,#7b992c,#7da02e,#7ea42f,#7da630,#7da732,#7da933,#7caa34,#7cab34,#78a434,#77a235,#759e35,#729935,#709234,#6d8c34,#6a8533,#677f33,#657b32,#647832,#647832,#647832,#647832,#647832,#637731,#617430,#5e6f2d,#576629,#4e5922,#454c1b,#3d4116,#383a12,#353510,#33320e,#32310d,#32300d,#34300d,#37310d,#3b330d,#41350d,#48370d,#4c380d,#4f390d,#513a0d,#523b0e,#533c0e,#543e0f,#564110,#584411,#5a4713,#5c4a14,#5d4c15,#5e4d15)"></b><b style="left:643px;top:512px;width:504px;background:linear-gradient(90deg,#341b0a,#361b0a,#311b0a,#2d1b0a,#291b0a,#251c09,#221c09,#201d09,#1d1e08,#1c2008,#1d2509,#1f2b0a,#22330c,#28400f,#335214,#3e631a,#497320,#548126,#5d8c2a,#65962e,#6a9b2f,#6d9f31,#71a332,#74a634,#77a935,#79ab35,#7aad36,#7caf36,#7db037,#7eae35,#7eac33,#7fa931,#7fa62f,#7d9f2d,#7a982c,#7b9b2d,#7ea22e,#7ea52f,#7da631,#7da832,#7da933,#7dab34,#7cac35,#7cac35,#77a335,#759e35,#729935,#6f9234,#6d8c34,#6a8533,#677f33,#657b32,#647832,#647832,#647832,#647832,#647832,#637732,#627631,#60722f,#5b6b2b,#536026,#4a531f,#424819,#3b3f15,#373911,#35350f,#34330e,#34320e,#35310d,#38320d,#3c330d,#42350d,#48370d,#4d380d,#4f390d,#513a0d,#523b0d,#533c0e,#543e0f,#564010,#584311,#5a4612,#5c4913,#5d4b14)"></b><b style="left:641px;top:515px;width:210px;background:linear-gradient(90deg,#341b0a,#361b0a,#321b0a,#2d1b0a,#291b0a,#261c09,#221c09,#201d09,#1e1d08,#1c2008,#1d2509,#1e2a0a,#22320c,#273e0f,#315014,#3c6119,#47711f,#538025,#5c8b29,#64962d,#699b2f,#6d9f31,#71a232,#74a633,#77a934,#79ab35,#7aad36,#7caf36,#7db037,#7eaf35,#7eac33,#7fa931,#7fa62f,#7da02e,#7a982c,#7c9c2d)"></b><b style="left:640px;top:518px;width:210px;background:linear-gradient(90deg,#341b0a,#361b0a,#321b0a,#2d1b0a,#291b0a,#261c09,#221c09,#201d09,#1d1e08,#1c2008,#1d2509,#1e2a0a,#22330c,#283f0f,#325114,#3d6219,#48711f,#538025,#5c8b29,#65962d,#699b2f,#6d9f31,#71a332,#75a634,#77a934,#79ab35,#7aad36,#7caf36,#7db037,#7eae35,#7fac33,#7fa931,#80a62f,#7d9f2d,#7b982c,#7d9e2d)"></b><b style="left:638px;top:521px;width:210px;background:linear-gradient(90deg,#341b0a,#361b0a,#321b0a,#2e1b0a,#2a1b0a,#261b0a,#231c09,#201d09,#1e1d08,#1c1f08,#1d2409,#1e2a0a,#21310c,#273c0e,#314f13,#3b6019,#466f1f,#517e25,#5b8a29,#63952d,#699b2f,#6d9e30,#70a232,#74a633,#77a934,#79ab35,#7aad36,#7caf36,#7db037,#7eaf35,#7fac33,#7faa31,#80a730,#7d9f2e,#7b992c,#7d9f2d)"></b><b style="left:637px;top:524px;width:210px;background:linear-gradient(90deg,#341b0a,#361b0a,#321b0a,#2e1b0a,#2a1b0a,#261b0a,#231c09,#201d09,#1e1d08,#1c1f08,#1d2409,#1e2a0a,#21320c,#273d0e,#314f13,#3b6119,#47701f,#527f25,#5b8a29,#63952d,#699b2f,#6d9f31,#71a232,#74a633,#77a934,#79ab35,#7aad36,#7caf36,#7db137,#7eaf35,#7fac33,#80aa31,#80a72f,#7d9f2e,#7b992c,#7ea12e)"></b><b style="left:636px;top:527px;width:210px;background:linear-gradient(90deg,#341b0a,#361b0a,#311b0a,#2d1b0a,#291b0a,#261b0a,#231c09,#201d09,#1e1d08,#1c1f08,#1d2409,#1e2a0a,#21320c,#273e0f,#315014,#3c6119,#47701f,#527f25,#5b8b29,#64952d,#699b2f,#6d9f31,#71a332,#74a633,#77a934,#79ab35,#7aad36,#7caf36,#7eb137,#7eaf35,#7fad33,#80aa31,#80a62f,#7d9e2d,#7c9a2d,#7ea22e)"></b><b style="left:635px;top:530px;width:210px;background:linear-gradient(90deg,#341b0a,#361b0a,#311b0a,#2d1b0a,#291b0a,#261c09,#231c09,#201d09,#1e1d08,#1c1f08,#1d2409,#1e2a0a,#22320c,#273e0f,#325014,#3c6119,#47711f,#538025,#5c8b29,#64962d,#699b2f,#6d9f31,#71a332,#74a633,#77a934,#79ab35,#7bae36,#7cb036,#7eb137,#7faf35,#7fac33,#80aa31,#80a62f,#7d9d2d,#7c9b2d,#7fa32e)"></b><b style="left:634px;top:533px;width:210px;background:linear-gradient(90deg,#341b0a,#361b0a,#311b0a,#2d1b0a,#291b0a,#261c09,#221c09,#201d09,#1e1d08,#1c1f08,#1d2409,#1e2a0a,#21320c,#273e0f,#325114,#3c6219,#48711f,#538025,#5c8b29,#64962d,#699b2f,#6d9f31,#71a332,#74a633,#77a934,#79ac35,#7bae36,#7cb036,#7eb137,#7faf35,#80ad33,#80aa31,#80a62f,#7d9d2d,#7d9d2d,#7fa42f)"></b><b style="left:633px;top:536px;width:210px;background:linear-gradient(90deg,#341b0a,#361b0a,#311b0a,#2d1b0a,#291b0a,#261c09,#221c09,#201d09,#1e1d08,#1c1f08,#1d2409,#1e2a0a,#21320c,#273e0f,#325114,#3d621a,#487120,#538025,#5c8b29,#64962d,#699b2f,#6d9f31,#71a332,#75a733,#77a934,#79ac35,#7bae36,#7cb036,#7eb137,#7faf35,#80ad33,#81aa31,#80a62f,#7d9d2d,#7d9e2d,#80a52f)"></b><b style="left:631px;top:539px;width:210px;background:linear-gradient(90deg,#341b0a,#361b0a,#321b0a,#2e1b0a,#2a1b0a,#261b0a,#231c09,#201d09,#1e1d08,#1c1f08,#1d2409,#1e290a,#21300b,#263b0e,#304d13,#3a5f18,#466f1f,#517e25,#5a8a29,#63952d,#699b2f,#6d9f30,#70a232,#74a633,#77a934,#79ab35,#7aad36,#7cb036,#7eb137,#7faf35,#80ad33,#81ab31,#80a72f,#7d9e2d,#7d9d2d,#80a52f)"></b><b style="left:630px;top:542px;width:210px;background:linear-gradient(90deg,#341b0a,#361b0a,#321b0a,#2e1b0a,#2a1b0a,#261b0a,#231c09,#201d09,#1e1d08,#1c1f08,#1d2409,#1e290a,#21310b,#263b0e,#304d13,#3a5f18,#466f1e,#517e25,#5b8a29,#63952d,#699b2f,#6d9f30,#70a232,#74a633,#77a934,#79ab35,#7aad36,#7cb036,#7eb137,#7faf35,#80ad33,#81ab31,#81a72f,#7d9d2d,#7e9f2e,#80a62f)"></b><b style="left:628px;top:545px;width:210px;background:linear-gradient(90deg,#341b0a,#361b0a,#321b0a,#2e1b0a,#2a1b0a,#271b0a,#231c09,#201d09,#1e1d08,#1c1e08,#1d2309,#1e280a,#202f0b,#25390d,#2e4a12,#385c17,#446c1d,#4f7b24,#598828,#62932c,#689a2f,#6c9e30,#70a232,#74a633,#77a934,#79ab35,#7aad36,#7caf36,#7eb137,#7fb035,#80ae33,#81ab32,#81a830,#7e9f2e,#7d9e2d,#80a62f)"></b><b style="left:627px;top:548px;width:210px;background:linear-gradient(90deg,#341b0a,#361b0a,#321b0a,#2e1b0a,#2a1b0a,#271b0a,#231c09,#211c09,#1e1d08,#1c1f08,#1d2309,#1e280a,#20300b,#25390d,#2e4a12,#385c17,#446c1d,#4f7b23,#598728,#62932c,#689a2f,#6c9e30,#70a232,#74a633,#77a934,#78ab35,#7aad36,#7cb036,#7eb137,#7fb035,#80ae33,#81ab32,#81a830,#7e9f2e,#7e9e2d,#80a62f)"></b><b style="left:626px;top:551px;width:210px;background:linear-gradient(90deg,#341b0a,#361b0a,#321b0a,#2e1b0a,#2a1b0a,#261b0a,#231c09,#211c09,#1e1d08,#1c1f08,#1d2309,#1e280a,#21300b,#253a0d,#2e4b12,#385c17,#446c1d,#4f7b23,#598728,#62922c,#689a2f,#6c9e30,#70a232,#74a633,#77a934,#78ab35,#7aad36,#7cb036,#7eb137,#7fb035,#80ae34,#81ac32,#81a830,#7e9f2e,#7e9e2e,#81a62f)"></b><b style="left:625px;top:554px;width:210px;background:linear-gradient(90deg,#341b0a,#361b0a,#311b0a,#2d1b0a,#291b0a,#261b0a,#231c09,#201d09,#1e1d08,#1c1e08,#1d2309,#1e290a,#21300b,#253a0e,#2f4b12,#395d17,#446c1d,#4f7b23,#598728,#61922c,#689a2f,#6c9e30,#70a232,#74a633,#77a934,#78ab35,#7aad36,#7cb036,#7eb237,#7fb035,#80ae33,#81ac32,#81a830,#7e9f2e,#7e9f2e,#81a72f)"></b><b style="left:624px;top:557px;width:210px;background:linear-gradient(90deg,#341b0a,#361b0a,#321b0a,#2d1b0a,#291b0a,#261b0a,#231c09,#201d09,#1e1d08,#1c1e08,#1d2309,#1e280a,#21300b,#253a0d,#2f4b12,#395d18,#446c1e,#4f7b23,#598728,#61922c,#689a2f,#6c9e30,#70a232,#74a633,#77a934,#78ab35,#7aad36,#7cb036,#7eb237,#7fb035,#80ae33,#81ac32,#81a830,#7ea02e,#7e9f2e,#81a72f)"></b><b style="left:623px;top:560px;width:210px;background:linear-gradient(90deg,#341b0a,#361b0a,#311b0a,#2d1b0a,#291b0a,#261b0a,#231c09,#201d09,#1e1d08,#1c1e08,#1d2309,#1e280a,#20300b,#253a0e,#2f4b12,#395d18,#446d1e,#4f7c24,#598728,#61922c,#689a2f,#6c9e30,#6fa132,#73a533,#77a934,#78ab35,#7aad36,#7cb036,#7eb237,#7fb035,#80ae33,#81ac32,#81a830,#7e9f2e,#7e9e2e,#81a72f)"></b><b style="left:621px;top:563px;width:210px;background:linear-gradient(90deg,#341b0a,#361b0a,#321b0a,#2e1b0a,#2a1b0a,#271b0a,#231c09,#211c09,#1e1d08,#1c1e08,#1d2209,#1e270a,#202e0b,#24370d,#2d4811,#375a17,#426a1c,#4e7923,#578627,#60902b,#67992e,#6b9d30,#6fa131,#73a533,#76a834,#78ab35,#7aad35,#7caf36,#7db137,#7fb036,#80ae34,#81ac32,#82a930,#7fa02e,#7e9e2e,#80a62f)"></b><b style="left:620px;top:566px;width:210px;background:linear-gradient(90deg,#341b0a,#361b0a,#321b0a,#2e1b0a,#2a1b0a,#271b0a,#231c09,#211c09,#1e1d08,#1c1e08,#1d2309,#1e280a,#202e0b,#23370d,#2c4711,#375a16,#426a1c,#4d7923,#578627,#60912b,#67992e,#6b9d30,#6fa131,#73a533,#76a834,#78ab35,#7aad35,#7caf36,#7db137,#7fb136,#80ae34,#81ac32,#82a930,#7fa02e,#7e9e2e,#81a72f)"></b><b style="left:618px;top:569px;width:210px;background:linear-gradient(90deg,#341b0a,#361b0a,#321b0a,#2e1b0a,#2a1b0a,#271b0a,#241c09,#211c09,#1f1d08,#1d1e08,#1d2209,#1d2709,#1f2d0b,#23350c,#2a4410,#355615,#40671b,#4b7621,#568427,#5f8f2b,#66982e,#6a9c30,#6ea031,#72a432,#76a834,#78aa35,#79ac35,#7baf36,#7db137,#7fb136,#80af34,#81ad32,#82aa30,#80a32f,#7e9d2d,#80a52f)"></b><b style="left:617px;top:572px;width:210px;background:linear-gradient(90deg,#341b0a,#361b0a,#321b0a,#2e1b0a,#2a1b0a,#271b0a,#241c09,#211c09,#1f1d08,#1d1e08,#1d2209,#1d2709,#1f2d0b,#23350c,#2b4410,#355615,#3f661b,#4b7621,#568327,#5e8e2b,#66982e,#6a9c30,#6ea031,#72a432,#76a834,#78aa35,#79ac35,#7baf36,#7db137,#7fb136,#80af34,#81ad32,#82aa30,#80a32f,#7e9d2d,#80a52f)"></b><b style="left:616px;top:575px;width:210px;background:linear-gradient(90deg,#341b0a,#361b0a,#321b0a,#2e1b0a,#2a1b0a,#271b0a,#241c09,#211c09,#1f1d08,#1d1e08,#1d2209,#1d2709,#1f2d0b,#23360d,#2b4410,#355615,#3f661b,#4a7521,#558326,#5e8e2a,#66982e,#6a9c30,#6ea031,#72a432,#76a834,#78aa35,#79ac35,#7bae36,#7db137,#7eb136,#80af34,#81ad32,#82ab31,#80a32f,#7e9d2d,#80a52f)"></b><b style="left:615px;top:578px;width:210px;background:linear-gradient(90deg,#341b0a,#361b0a,#321b0a,#2e1b0a,#2a1b0a,#271b0a,#231c09,#211c09,#1f1d08,#1d1e08,#1d2209,#1d2709,#1f2d0b,#23360c,#2b4511,#355615,#3f661b,#4a7521,#558226,#5e8e2a,#66982e,#6a9c30,#6ea031,#72a432,#75a834,#78aa35,#79ac35,#7bae36,#7db137,#7eb136,#80af34,#81ad33,#82ab31,#80a42f,#7e9d2d,#80a42f)"></b><b style="left:614px;top:581px;width:210px;background:linear-gradient(90deg,#341b0a,#361b0a,#321b0a,#2e1b0a,#2a1b0a,#261b0a,#231c09,#211c09,#1f1d08,#1d1e08,#1d2209,#1d2709,#1f2d0b,#23360d,#2b4410,#355615,#40661b,#4b7521,#558226,#5d8d2a,#66972e,#6a9c2f,#6ea031,#72a432,#75a734,#78aa35,#79ac35,#7bae36,#7db137,#7eb136,#7faf34,#81ad33,#82ab31,#80a42f,#7e9d2d,#80a42f)"></b><b style="left:612px;top:584px;width:210px;background:linear-gradient(90deg,#341b0a,#361b0a,#321b0a,#2e1b0a,#2a1b0a,#271b0a,#241c09,#211c09,#1f1d08,#1d1e08,#1c2108,#1d2609,#1f2c0a,#22340c,#294110,#335315,#3e641a,#497320,#538126,#5c8b29,#64962d,#699b2f,#6d9f31,#71a332,#75a734,#77aa34,#79ac35,#7bae36,#7db036,#7eb137,#7faf35,#80ad33,#81ab31,#81a62f,#7e9d2d,#7fa22e)"></b><b style="left:612px;top:587px;width:210px;background:linear-gradient(90deg,#341b0a,#361b0a,#311b0a,#2d1b0a,#2a1b0a,#271b0a,#231c09,#211c09,#1e1d08,#1c1e08,#1d2209,#1d2709,#1f2d0b,#23350c,#2b4410,#355615,#3f661b,#4b7521,#558226,#5d8d2a,#65972e,#6a9c2f,#6d9f31,#71a332,#75a734,#77aa35,#79ac35,#7bae36,#7db137,#7eb136,#7faf35,#80ad33,#82ab31,#80a52f,#7e9d2d,#80a32f)"></b><b style="left:611px;top:590px;width:210px;background:linear-gradient(90deg,#341b0a,#361b0a,#311b0a,#2d1b0a,#2a1b0a,#261b0a,#231c09,#211c09,#1e1d08,#1c1e08,#1d2209,#1d2709,#1f2d0b,#23350c,#2b4410,#345615,#3f661b,#4a7521,#558226,#5d8d2a,#65972e,#6a9c2f,#6d9f31,#71a332,#75a734,#77aa35,#79ac35,#7bae36,#7db037,#7eb136,#7faf35,#80ad33,#81ab31,#80a52f,#7e9d2d,#80a32f)"></b><b style="left:609px;top:593px;width:210px;background:linear-gradient(90deg,#341b0a,#361b0a,#321b0a,#2e1b0a,#2a1b0a,#271b0a,#241c09,#211c09,#1f1d08,#1d1e08,#1d2209,#1d2609,#1f2c0a,#22340c,#29410f,#335214,#3d631a,#487220,#538025,#5c8b29,#64962d,#699b2f,#6d9f31,#70a232,#74a633,#77a934,#79ab35,#7bae36,#7cb036,#7eb237,#7fb035,#80ae33,#81ab31,#81a72f,#7e9e2e,#7fa12e)"></b><b style="left:608px;top:596px;width:210px;background:linear-gradient(90deg,#341b0a,#361b0a,#321b0a,#2e1b0a,#2a1b0a,#271b0a,#241c09,#211c09,#1f1d08,#1d1e08,#1d2109,#1d2709,#1f2c0a,#22340c,#29410f,#335214,#3d631a,#487120,#538025,#5c8b29,#64952d,#699b2f,#6d9f30,#70a232,#74a633,#77a934,#79ab35,#7aae36,#7cb036,#7eb237,#7fb035,#80ae33,#81ac31,#81a72f,#7e9e2e,#7fa12e)"></b><b style="left:607px;top:599px;width:216px;background:linear-gradient(90deg,#341b0a,#361b0a,#321b0a,#2e1b0a,#2a1b0a,#271b0a,#241c09,#211c09,#1f1d08,#1d1e08,#1d2109,#1d2609,#1f2c0b,#22340c,#294110,#335214,#3d621a,#487120,#527f25,#5b8b29,#64952d,#699b2f,#6d9f30,#70a232,#74a633,#77a934,#79ab35,#7aad36,#7cb036,#7eb237,#7fb035,#80ae33,#81ac31,#81a830,#7e9e2e,#7fa02e,#81a830)"></b><b style="left:606px;top:602px;width:216px;background:linear-gradient(90deg,#341b0a,#361b0a,#321b0a,#2e1b0a,#2a1b0a,#271b0a,#241c09,#211c09,#1f1d08,#1d1e08,#1d2109,#1d2609,#1f2c0a,#22340c,#294210,#335314,#3d621a,#48711f,#527f25,#5b8a29,#64952d,#699b2f,#6c9e30,#70a232,#74a633,#77a934,#79ab35,#7aad36,#7cb036,#7eb237,#7fb035,#80ae33,#81ac32,#81a830,#7e9f2e,#7fa02e,#81a830)"></b><b style="left:605px;top:605px;width:216px;background:linear-gradient(90deg,#341b0a,#361b0a,#321b0a,#2e1b0a,#2a1b0a,#271b0a,#241c09,#211c09,#1f1d08,#1d1e08,#1d2109,#1d2609,#1f2c0a,#22340c,#294210,#335314,#3d631a,#48711f,#527f25,#5b8a29,#63952d,#699b2f,#6c9e30,#70a232,#74a633,#77a934,#78ab35,#7aad36,#7caf36,#7eb237,#7fb035,#80ae34,#81ac32,#81a930,#7fa02e,#7fa02e,#81a830)"></b><b style="left:604px;top:608px;width:216px;background:linear-gradient(90deg,#341b0a,#361b0a,#321b0a,#2e1b0a,#2a1b0a,#271b0a,#231c09,#211c09,#1f1d08,#1d1e08,#1d2209,#1d2609,#1f2c0a,#22340c,#29410f,#335314,#3d631a,#48711f,#527f25,#5b8a29,#63942d,#689a2f,#6c9e30,#70a232,#74a633,#77a934,#78ab35,#7aad36,#7caf36,#7eb137,#7fb035,#80ae34,#81ac32,#82a930,#7fa12e,#7e9e2e,#81a72f)"></b><b style="left:603px;top:611px;width:216px;background:linear-gradient(90deg,#341b0a,#361b0a,#321b0a,#2e1b0a,#2a1b0a,#271b0a,#231c09,#211c09,#1f1d08,#1d1e08,#1d2109,#1d2609,#1f2c0a,#22340c,#29400f,#325214,#3d631a,#487120,#527f25,#5b8a29,#63942d,#689a2f,#6c9e30,#70a232,#74a633,#77a934,#78ab35,#7aad36,#7caf36,#7eb137,#7fb036,#80ae34,#81ac32,#82a930,#7fa12e,#7e9e2e,#81a62f)"></b><b style="left:602px;top:614px;width:216px;background:linear-gradient(90deg,#341b0a,#361b0a,#321b0a,#2e1b0a,#2a1b0a,#271b0a,#231c09,#211c09,#1f1d08,#1d1e08,#1d2109,#1d2609,#1f2c0a,#22340c,#29410f,#325114,#3c6219,#48711f,#527f25,#5b8a29,#63942d,#689a2f,#6c9e30,#70a232,#73a533,#77a934,#78ab35,#7aad36,#7caf36,#7eb137,#7fb036,#80ae34,#81ac32,#82aa30,#7fa12e,#7e9e2e,#80a52f)"></b><b style="left:601px;top:617px;width:216px;background:linear-gradient(90deg,#341b0a,#361b0a,#321b0a,#2e1b0a,#2a1b0a,#271b0a,#241c09,#211c09,#1f1d08,#1d1e08,#1d2109,#1d2609,#1f2c0a,#22340c,#29410f,#325214,#3c6219,#47701f,#527f25,#5b8a29,#63942d,#689a2f,#6c9e30,#70a232,#73a533,#76a934,#78ab35,#7aad35,#7caf36,#7db137,#7fb136,#80ae34,#81ac32,#82aa30,#7fa22e,#7e9d2d,#80a52f)"></b><b style="left:600px;top:620px;width:216px;background:linear-gradient(90deg,#341b0a,#361b0a,#321b0a,#2e1b0a,#2a1b0a,#271b0a,#241c09,#211c09,#1f1d08,#1d1e08,#1d2209,#1d2609,#1f2c0a,#22340c,#29400f,#325214,#3c6219,#47701f,#517e25,#5a8929,#63942d,#689a2f,#6c9e30,#6fa132,#73a533,#76a834,#78ab35,#7aad35,#7caf36,#7db137,#7fb136,#80af34,#81ad32,#82aa30,#80a32f,#7e9d2d,#80a52f)"></b><b style="left:599px;top:623px;width:216px;background:linear-gradient(90deg,#341b0a,#361b0a,#321b0a,#2e1b0a,#2a1b0a,#271b0a,#241c09,#211c09,#1f1d08,#1d1e08,#1d2109,#1d2609,#1f2c0a,#22340c,#28400f,#325114,#3c6219,#47701f,#517e25,#5a8929,#62932c,#689a2f,#6c9e30,#6fa132,#73a533,#76a834,#78ab35,#7aad35,#7caf36,#7db137,#7fb136,#80af34,#81ad32,#82ab31,#80a42f,#7e9d2d,#80a42f)"></b><b style="left:599px;top:626px;width:216px;background:linear-gradient(90deg,#341b0a,#361b0a,#311b0a,#2d1b0a,#2a1b0a,#261b0a,#231c09,#211c09,#1f1d08,#1d1e08,#1d2209,#1e270a,#1f2d0b,#23350c,#2a4210,#335415,#3e641a,#497220,#538025,#5b8a29,#63952d,#699b2f,#6c9e30,#70a232,#74a633,#77a934,#78ab35,#7aad35,#7caf36,#7db137,#7fb136,#80af34,#81ac32,#82aa30,#80a32f,#7e9d2d,#80a42f)"></b><b style="left:598px;top:629px;width:216px;background:linear-gradient(90deg,#341b0a,#361b0a,#321b0a,#2d1b0a,#2a1b0a,#261b0a,#231c09,#211c09,#1f1d08,#1d1e08,#1d2209,#1d2709,#1f2d0b,#23350c,#2a4310,#335315,#3d631a,#487220,#538025,#5b8a29,#63952d,#689a2f,#6c9e30,#70a232,#73a533,#76a934,#78ab35,#7aad35,#7caf36,#7db137,#7fb136,#80af34,#81ad32,#82aa30,#80a32f,#7e9d2d,#80a42f)"></b><b style="left:597px;top:632px;width:216px;background:linear-gradient(90deg,#341b0a,#361b0a,#321b0a,#2e1b0a,#2a1b0a,#261b0a,#231c09,#211c09,#1f1d08,#1d1e08,#1d2209,#1d2709,#1f2d0b,#23350c,#2a4310,#335415,#3d631a,#48711f,#527f25,#5b8a29,#63952d,#689a2f,#6c9e30,#70a232,#73a533,#76a934,#78ab35,#7aad35,#7caf36,#7db137,#7fb136,#80af34,#81ad32,#82ab31,#80a42f,#7e9d2d,#80a32f)"></b><b style="left:596px;top:635px;width:216px;background:linear-gradient(90deg,#341b0a,#361b0a,#321b0a,#2e1b0a,#2a1b0a,#271b0a,#231c09,#211c09,#1f1d08,#1d1e08,#1d2209,#1d2709,#1f2c0b,#22340c,#294210,#335415,#3d631a,#48711f,#527f25,#5b8a29,#63942d,#689a2f,#6c9e30,#6fa132,#73a533,#76a834,#78ab35,#7aad35,#7caf36,#7db137,#7fb136,#80af34,#81ad32,#82ab31,#80a42f,#7e9d2d,#80a32f)"></b><b style="left:595px;top:638px;width:216px;background:linear-gradient(90deg,#341b0a,#361b0a,#321b0a,#2e1b0a,#2a1b0a,#271b0a,#231c09,#211c09,#1f1d08,#1d1e08,#1d2209,#1d2709,#1f2c0a,#22340c,#29410f,#335314,#3d631a,#48711f,#527f25,#5a8929,#63942c,#689a2f,#6c9e30,#6fa132,#73a533,#76a834,#78ab35,#7aad35,#7baf36,#7db137,#7fb136,#80af34,#81ad33,#82ab31,#80a42f,#7e9d2d,#80a32f)"></b><b style="left:594px;top:641px;width:216px;background:linear-gradient(90deg,#341b0a,#361b0a,#321b0a,#2e1b0a,#2a1b0a,#271b0a,#241c09,#211c09,#1f1d08,#1d1e08,#1d2109,#1d2609,#1f2c0a,#22340c,#29400f,#325214,#3d6219,#47711f,#527f25,#5a8929,#62932c,#689a2f,#6c9e30,#6fa131,#73a533,#76a834,#78aa35,#7aad35,#7baf36,#7db137,#7eb136,#7faf34,#80ad33,#81ab31,#81a62f,#7e9d2d,#7fa22e)"></b><b style="left:593px;top:644px;width:216px;background:linear-gradient(90deg,#341b0a,#361b0a,#321b0a,#2e1b0a,#2a1b0a,#271b0a,#241c09,#211c09,#1f1d08,#1d1e08,#1d2209,#1d2609,#1f2c0a,#22340c,#29400f,#325114,#3c6119,#47701f,#527e25,#5a8929,#62932c,#689a2f,#6b9d30,#6fa131,#73a533,#76a834,#78aa35,#7aac35,#7baf36,#7db137,#7eb136,#7faf34,#80ad33,#81ab31,#81a62f,#7e9e2e,#7fa12e)"></b><b style="left:593px;top:647px;width:216px;background:linear-gradient(90deg,#341b0a,#361b0a,#311b0a,#2d1b0a,#2a1b0a,#261b0a,#231c09,#211c09,#1f1d08,#1c1e08,#1d2209,#1e270a,#1f2d0b,#23350c,#2a4310,#335415,#3d631a,#487220,#538025,#5b8a29,#64952d,#689a2f,#6c9e30,#70a232,#73a533,#76a834,#78ab35,#7aad35,#7baf36,#7db137,#7fb136,#80af34,#81ad33,#82ab31,#80a52f,#7e9d2d,#7fa22e)"></b><b style="left:592px;top:650px;width:216px;background:linear-gradient(90deg,#341b0a,#361b0a,#321b0a,#2e1b0a,#2a1b0a,#261b0a,#231c09,#211c09,#1f1d08,#1d1e08,#1d2209,#1d2709,#1f2d0b,#23350c,#2a4210,#335315,#3d631a,#48711f,#527f25,#5b8a29,#63942d,#689a2f,#6c9e30,#6fa132,#73a533,#76a834,#78ab35,#7aad35,#7baf36,#7db137,#7eb136,#7faf34,#81ad33,#82ab31,#80a52f,#7e9d2d,#7fa22e)"></b><b style="left:591px;top:653px;width:216px;background:linear-gradient(90deg,#341b0a,#361b0a,#321b0a,#2e1b0a,#2a1b0a,#271b0a,#231c09,#211c09,#1f1d08,#1d1e08,#1d2209,#1d2709,#1f2d0b,#23350c,#294210,#335314,#3d621a,#48711f,#527f25,#5a8929,#63942d,#689a2f,#6c9e30,#6fa132,#73a533,#76a834,#78aa35,#7aad35,#7baf36,#7db137,#7eb136,#7faf35,#80ad33,#81ab31,#81a62f,#7e9d2d,#7fa12e)"></b><b style="left:591px;top:656px;width:216px;background:linear-gradient(90deg,#341b0a,#361b0a,#311b0a,#2d1b0a,#291b0a,#261b0a,#231c09,#201d09,#1e1d08,#1c1e08,#1d2209,#1e270a,#1f2d0b,#23360d,#2b4410,#345515,#3e641a,#497320,#538026,#5b8b29,#64952d,#699b2f,#6c9e30,#70a232,#73a533,#76a934,#78ab35,#7aad35,#7caf36,#7db137,#7fb136,#80af34,#81ad33,#81ab31,#81a62f,#7e9d2d,#7fa22e)"></b><b style="left:590px;top:659px;width:216px;background:linear-gradient(90deg,#341b0a,#361b0a,#321b0a,#2e1b0a,#2a1b0a,#261b0a,#231c09,#211c09,#1e1d08,#1c1e08,#1d2209,#1d2709,#1f2d0b,#23350c,#2a4310,#345515,#3e641a,#487220,#538025,#5b8b29,#63952d,#689a2f,#6c9e30,#70a232,#73a533,#76a834,#78ab35,#7aad35,#7baf36,#7db137,#7eb136,#7faf34,#80ad33,#81ab31,#81a62f,#7e9e2e,#7fa12e)"></b><b style="left:589px;top:662px;width:216px;background:linear-gradient(90deg,#341b0a,#361b0a,#321b0a,#2e1b0a,#2a1b0a,#261b0a,#231c09,#211c09,#1e1d08,#1c1e08,#1d2209,#1d2709,#1f2d0b,#23350c,#2a4210,#335415,#3e641a,#487220,#527f25,#5b8a29,#63942d,#689a2f,#6c9e30,#6fa132,#73a533,#76a834,#78ab35,#7aad35,#7baf36,#7db137,#7eb136,#7faf34,#80ad33,#81ab31,#81a62f,#7e9e2e,#7fa02e)"></b><b style="left:589px;top:665px;width:216px;background:linear-gradient(90deg,#351b0a,#351b0a,#311b0a,#2d1b0a,#291b0a,#261b0a,#231c09,#201d09,#1e1d08,#1c1e08,#1d2309,#1e280a,#202e0b,#23360d,#2b4410,#345615,#3f651b,#4a7421,#548126,#5c8b29,#64952d,#699b2f,#6c9e30,#70a232,#73a533,#76a934,#78ab35,#7aad35,#7caf36,#7db137,#7fb136,#80af34,#81ad33,#82ab31,#80a52f,#7e9d2d,#7fa22e)"></b><b style="left:588px;top:668px;width:216px;background:linear-gradient(90deg,#341b0a,#361b0a,#311b0a,#2d1b0a,#2a1b0a,#261b0a,#231c09,#201d09,#1e1d08,#1c1e08,#1d2209,#1e270a,#202e0b,#23360d,#2a4410,#345515,#3e641a,#497320,#538126,#5c8b29,#64952d,#699b2f,#6c9e30,#70a232,#73a533,#76a834,#78ab35,#7aad35,#7baf36,#7db137,#7eb136,#7faf34,#80ad33,#81ab31,#81a62f,#7e9d2d,#7fa12e)"></b><b style="left:587px;top:671px;width:216px;background:linear-gradient(90deg,#341b0a,#361b0a,#321b0a,#2e1b0a,#2a1b0a,#261b0a,#231c09,#211c09,#1e1d08,#1c1e08,#1d2209,#1e270a,#1f2d0b,#23350c,#2a4310,#335415,#3d631a,#487220,#538025,#5b8a29,#63952d,#689a2f,#6c9e30,#6fa132,#73a533,#76a834,#78aa35,#7aad35,#7baf36,#7db137,#7eb136,#7faf35,#80ad33,#81ab31,#81a72f,#7e9e2e,#7fa12e)"></b><b style="left:586px;top:674px;width:222px;background:linear-gradient(90deg,#341b0a,#361b0a,#321b0a,#2e1b0a,#2a1b0a,#271b0a,#231c09,#211c09,#1f1d08,#1d1e08,#1d2209,#1d2709,#1f2d0b,#23350c,#2a4210,#335415,#3d631a,#48711f,#527f25,#5b8a29,#63942d,#689a2f,#6c9e30,#6fa131,#73a533,#76a834,#78aa35,#7aac35,#7bae36,#7db137,#7eb136,#7faf35,#80ad33,#81ab31,#81a830,#7e9f2e,#7e9f2e,#81a72f)"></b><b style="left:586px;top:677px;width:216px;background:linear-gradient(90deg,#351b0a,#351b0a,#311b0a,#2d1b0a,#2a1b0a,#261b0a,#231c09,#211c09,#1e1d08,#1c1e08,#1d2209,#1e270a,#202e0b,#23360d,#2b4410,#345615,#3f651b,#497320,#538025,#5b8b29,#64952d,#699b2f,#6c9e30,#70a232,#73a533,#76a834,#78ab35,#7aad35,#7baf36,#7db137,#7eb136,#7faf34,#80ad33,#81ab31,#81a62f,#7e9e2e,#7fa02e)"></b><b style="left:585px;top:680px;width:222px;background:linear-gradient(90deg,#341b0a,#361b0a,#311b0a,#2d1b0a,#2a1b0a,#261b0a,#231c09,#211c09,#1e1d08,#1c1e08,#1d2209,#1e270a,#1f2d0b,#23350c,#2a4410,#345515,#3e641a,#497320,#538025,#5b8a29,#63952d,#689a2f,#6c9e30,#70a232,#73a533,#76a834,#78aa35,#7aad35,#7baf36,#7db137,#7eb136,#7faf35,#80ad33,#81ab31,#81a72f,#7e9e2e,#7fa02e,#81a830)"></b><b style="left:584px;top:683px;width:222px;background:linear-gradient(90deg,#341b0a,#361b0a,#321b0a,#2e1b0a,#2a1b0a,#271b0a,#231c09,#211c09,#1f1d08,#1d1e08,#1d2209,#1d2709,#1f2d0b,#23350c,#2a4210,#335415,#3e631a,#487220,#538025,#5b8a29,#63942d,#689a2f,#6c9e30,#6fa131,#73a533,#76a834,#78aa35,#7aac35,#7bae36,#7db137,#7eb137,#7fb035,#80ae33,#81ac31,#81a830,#7e9f2e,#7e9f2e,#81a72f)"></b><b style="left:584px;top:686px;width:222px;background:linear-gradient(90deg,#351b0a,#351b0a,#311b0a,#2d1b0a,#291b0a,#261b0a,#231c09,#201d09,#1e1d08,#1c1e08,#1d2209,#1e270a,#202e0b,#23360d,#2b4410,#345615,#3f651b,#497320,#548126,#5c8b29,#64952d,#699b2f,#6c9e30,#70a232,#73a533,#76a834,#78ab35,#7aad35,#7baf36,#7db137,#7eb136,#7faf35,#80ad33,#81ab31,#81a830,#7e9f2e,#7e9f2e,#81a72f)"></b><b style="left:583px;top:689px;width:222px;background:linear-gradient(90deg,#341b0a,#361b0a,#321b0a,#2d1b0a,#2a1b0a,#261b0a,#231c09,#211c09,#1e1d08,#1c1e08,#1d2209,#1e270a,#1f2d0b,#23350c,#2a4310,#345515,#3e641a,#497320,#538025,#5b8b29,#64952d,#689a2f,#6c9e30,#6fa132,#73a533,#76a834,#78aa35,#7aad35,#7baf36,#7db137,#7eb136,#7faf35,#80ad33,#81ac31,#81a830,#7fa02e,#7e9e2e,#81a62f)"></b><b style="left:582px;top:692px;width:222px;background:linear-gradient(90deg,#341b0a,#361b0a,#321b0a,#2e1b0a,#2a1b0a,#271b0a,#231c09,#211c09,#1f1d08,#1c1e08,#1d2209,#1d2709,#1f2d0b,#23350c,#2a4210,#335415,#3e631a,#487220,#538025,#5b8a29,#63942d,#689a2f,#6c9e30,#6fa131,#73a533,#76a834,#78aa35,#7aac35,#7bae36,#7db137,#7eb136,#7faf35,#80ae33,#81ac31,#81a830,#7fa02e,#7e9e2e,#81a62f)"></b><b style="left:582px;top:695px;width:222px;background:linear-gradient(90deg,#351b0a,#361b0a,#311b0a,#2d1b0a,#291b0a,#261b0a,#231c09,#201d09,#1e1d08,#1c1e08,#1d2309,#1e270a,#202e0b,#23360d,#2b4410,#345515,#3f651b,#497320,#548126,#5c8b29,#64952d,#699b2f,#6c9e30,#70a232,#73a533,#76a834,#78ab35,#7aad35,#7baf36,#7db137,#7eb136,#7faf35,#80ad33,#81ab31,#81a72f,#7e9f2e,#7e9f2e,#81a72f)"></b><b style="left:581px;top:698px;width:222px;background:linear-gradient(90deg,#341b0a,#361b0a,#321b0a,#2e1b0a,#2a1b0a,#261b0a,#231c09,#211c09,#1e1d08,#1c1e08,#1d2209,#1e270a,#1f2d0b,#23350c,#2a4310,#345415,#3e641a,#497220,#538025,#5b8b29,#64952d,#689a2f,#6c9e30,#70a232,#73a533,#76a834,#78aa35,#7aac35,#7baf36,#7db137,#7eb136,#7faf35,#80ad33,#81ab31,#81a830,#7e9f2e,#7e9f2e,#81a62f)"></b><b style="left:580px;top:701px;width:222px;background:linear-gradient(90deg,#341b0a,#361b0a,#321b0a,#2e1b0a,#2a1b0a,#271b0a,#231c09,#211c09,#1f1d08,#1c1e08,#1d2209,#1d2709,#1f2d0b,#23350c,#2a4210,#335415,#3d631a,#487220,#527f25,#5b8a29,#63942d,#689a2f,#6c9e30,#6fa132,#73a533,#76a834,#78aa35,#79ac35,#7bae36,#7db137,#7eb136,#7faf35,#80ae33,#81ac31,#81a830,#7fa02e,#7e9e2e,#81a62f)"></b><b style="left:580px;top:704px;width:222px;background:linear-gradient(90deg,#341b0a,#361b0a,#321b0a,#2d1b0a,#2a1b0a,#261b0a,#231c09,#201d09,#1e1d08,#1c1e08,#1d2209,#1e270a,#202e0b,#23360d,#2b4410,#345515,#3e641a,#497320,#538025,#5b8b29,#64952d,#699b2f,#6c9e30,#70a232,#73a533,#76a834,#78aa35,#7aac35,#7baf36,#7db137,#7eb136,#7faf35,#80ad33,#81ac31,#81a830,#7e9f2e,#7e9f2e,#81a72f)"></b><b style="left:579px;top:707px;width:222px;background:linear-gradient(90deg,#341b0a,#361b0a,#321b0a,#2e1b0a,#2a1b0a,#261b0a,#231c09,#211c09,#1e1d08,#1c1e08,#1d2209,#1d2709,#1f2d0b,#23350c,#2a4310,#345415,#3e641a,#487220,#527f25,#5b8a29,#63942d,#689a2f,#6c9e30,#6fa132,#73a533,#76a834,#78aa35,#79ac35,#7bae36,#7db037,#7eb137,#7fb035,#80ae33,#81ac31,#81a930,#7fa12e,#7e9e2e,#81a62f)"></b><b style="left:578px;top:710px;width:222px;background:linear-gradient(90deg,#341b0a,#361b0a,#321b0a,#2e1b0a,#2a1b0a,#271b0a,#231c09,#211c09,#1f1d08,#1d1e08,#1d2209,#1d2709,#1f2d0b,#23350c,#2a4210,#335315,#3d631a,#48711f,#527f25,#5a8929,#63942c,#689a2f,#6c9e30,#6fa131,#73a533,#76a834,#78aa35,#79ac35,#7bae36,#7db037,#7eb237,#7fb035,#80ae33,#81ac32,#82a930,#7fa12e,#7e9d2d,#80a52f)"></b><b style="left:578px;top:713px;width:222px;background:linear-gradient(90deg,#341b0a,#361b0a,#321b0a,#2e1b0a,#2a1b0a,#261b0a,#231c09,#211c09,#1e1d08,#1c1e08,#1d2209,#1e270a,#1f2d0b,#23360c,#2b4410,#345515,#3e641a,#497320,#538025,#5b8b29,#63952d,#689a2f,#6c9e30,#6fa132,#73a533,#76a834,#78aa35,#7aac35,#7baf36,#7db137,#7eb136,#7faf35,#80ae33,#81ac31,#81a830,#7fa02e,#7e9e2e,#81a62f)"></b><b style="left:577px;top:716px;width:222px;background:linear-gradient(90deg,#341b0a,#361b0a,#321b0a,#2e1b0a,#2a1b0a,#271b0a,#231c09,#211c09,#1f1d08,#1d1e08,#1d2209,#1d2709,#1f2d0b,#23350c,#2a4210,#335315,#3d631a,#487120,#527f25,#5b8a29,#63942c,#689a2f,#6c9e30,#6fa131,#73a533,#76a834,#78aa35,#79ac35,#7bae36,#7db037,#7eb237,#7fb035,#80ae33,#81ac32,#82a930,#7fa12e,#7e9e2e,#80a52f)"></b><b style="left:576px;top:719px;width:222px;background:linear-gradient(90deg,#331b0a,#361b0a,#331b0a,#2f1b0a,#2b1b0a,#271b0a,#241c09,#211c09,#1f1d08,#1d1e08,#1d2109,#1d2609,#1f2c0a,#22340c,#29400f,#325214,#3c6219,#47701f,#517e25,#5a8929,#62932c,#689a2f,#6b9d30,#6fa131,#72a433,#76a834,#78aa35,#79ac35,#7bae36,#7db036,#7eb237,#7fb035,#80ae33,#81ac32,#82aa30,#7fa22e,#7e9d2d,#80a52f)"></b><b style="left:576px;top:722px;width:222px;background:linear-gradient(90deg,#341b0a,#361b0a,#321b0a,#2e1b0a,#2a1b0a,#271b0a,#241c09,#211c09,#1f1d08,#1d1e08,#1d2209,#1d2709,#1f2d0b,#23350c,#2a4210,#335315,#3d631a,#487120,#527f25,#5b8a29,#63942d,#689a2f,#6c9e30,#6fa131,#73a533,#76a834,#78aa35,#79ac35,#7bae36,#7db037,#7eb237,#7fb035,#80ae33,#81ac32,#82a930,#7fa12e,#7e9d2d,#80a52f)"></b><b style="left:575px;top:725px;width:222px;background:linear-gradient(90deg,#331b0a,#361b0a,#331b0a,#2f1b0a,#2b1b0a,#271b0a,#241c09,#211c09,#1f1d08,#1d1e08,#1d2109,#1d2609,#1f2c0a,#22340c,#28400f,#325114,#3c6119,#47701f,#517e24,#5a8928,#62932c,#689a2f,#6b9d30,#6fa131,#72a433,#76a834,#78aa35,#79ac35,#7bae36,#7cb036,#7eb237,#7fb035,#80ae34,#81ac32,#82aa30,#7fa22e,#7e9d2d,#80a42f)"></b><b style="left:575px;top:728px;width:222px;background:linear-gradient(90deg,#341b0a,#361b0a,#321b0a,#2e1b0a,#2a1b0a,#271b0a,#241c09,#211c09,#1f1d08,#1d1e08,#1d2209,#1d2609,#1f2c0a,#22340c,#29410f,#335214,#3d6219,#47701f,#527e25,#5a8929,#62932c,#689a2f,#6b9d30,#6fa131,#72a433,#76a834,#78aa35,#79ac35,#7bae36,#7db036,#7eb237,#7fb035,#80ae34,#81ac32,#82aa30,#7fa22e,#7e9d2d,#80a42f)"></b><b style="left:575px;top:731px;width:222px;background:linear-gradient(90deg,#341b0a,#361b0a,#321b0a,#2e1b0a,#2a1b0a,#271b0a,#231c09,#211c09,#1f1d08,#1d1e08,#1d2209,#1d2709,#1f2d0b,#23350c,#2a4210,#335315,#3d631a,#487120,#527f25,#5b8a29,#63942d,#689a2f,#6c9e30,#6fa131,#73a533,#76a834,#78aa35,#79ac35,#7bae36,#7db036,#7eb237,#7fb035,#80ae33,#81ac32,#82a930,#7fa22e,#7e9d2d,#80a42f)"></b><b style="left:574px;top:734px;width:222px;background:linear-gradient(90deg,#341b0a,#361b0a,#321b0a,#2e1b0a,#2a1b0a,#271b0a,#241c09,#211c09,#1f1d08,#1d1e08,#1d2109,#1d2609,#1f2c0a,#22340c,#29410f,#325214,#3c6219,#47701f,#517e25,#5a8929,#62932c,#689a2f,#6b9d30,#6fa131,#72a433,#76a834,#78aa35,#79ac35,#7bae36,#7db036,#7eb237,#7fb035,#80ae34,#81ac32,#82aa30,#7fa22e,#7e9d2d,#80a32f)"></b><b style="left:573px;top:737px;width:222px;background:linear-gradient(90deg,#331b0a,#361b0a,#331b0a,#2f1b0a,#2b1b0a,#271b0a,#241c09,#211c09,#1f1d09,#1d1e08,#1c2108,#1d2609,#1f2b0a,#22330c,#283f0f,#315014,#3b6019,#466e1e,#507d24,#598828,#61922c,#67992f,#6b9d30,#6ea031,#72a432,#75a734,#77aa35,#79ac35,#7bae36,#7cb036,#7eb237,#7fb035,#80ae34,#81ac32,#82aa30,#80a42f,#7e9d2d,#80a32f)"></b><b style="left:573px;top:740px;width:222px;background:linear-gradient(90deg,#341b0a,#361b0a,#321b0a,#2e1b0a,#2a1b0a,#271b0a,#241c09,#211c09,#1f1d08,#1d1e08,#1d2109,#1d2609,#1f2c0a,#22340c,#28400f,#325114,#3c6119,#466f1f,#517d24,#598828,#61922c,#689a2f,#6b9d30,#6fa131,#72a433,#75a734,#77aa35,#79ac35,#7bae36,#7cb036,#7eb237,#7fb035,#80ae34,#81ac32,#82aa30,#80a42f,#7e9d2d,#80a32f)"></b><b style="left:572px;top:743px;width:222px;background:linear-gradient(90deg,#331b0a,#361b0a,#331b0a,#2f1b0a,#2b1b0a,#271b0a,#241c09,#211c09,#1f1d09,#1d1e08,#1c2108,#1d2609,#1e2b0a,#22330c,#273e0f,#314f13,#3a5f18,#456d1e,#4f7c24,#588728,#60912b,#67992e,#6b9d30,#6ea031,#72a432,#75a734,#77a934,#79ac35,#7aae36,#7cb036,#7eb237,#7fb036,#80af34,#81ad32,#82ab31,#80a52f,#7e9d2d,#7fa22e)"></b><b style="left:572px;top:746px;width:222px;background:linear-gradient(90deg,#341b0a,#361b0a,#321b0a,#2e1b0a,#2a1b0a,#271b0a,#241c09,#211c09,#1f1d08,#1d1e08,#1c2108,#1d2609,#1f2b0a,#22330c,#283f0f,#315014,#3b6019,#456e1e,#507c24,#598728,#61912c,#67992e,#6b9d30,#6ea031,#72a432,#75a734,#77aa34,#79ac35,#7aae36,#7cb036,#7eb237,#7fb036,#80af34,#81ad32,#82ab31,#80a52f,#7e9d2d,#7fa22e)"></b><b style="left:571px;top:749px;width:222px;background:linear-gradient(90deg,#331b0a,#361b0a,#331b0a,#2f1b0a,#2b1b0a,#271b0a,#241c09,#211c09,#1f1d09,#1d1e08,#1c2008,#1d2509,#1e2b0a,#22320c,#273d0e,#304e13,#3a5e18,#446c1e,#4f7a23,#588627,#60902b,#67992e,#6a9c30,#6ea031,#71a332,#75a733,#77a934,#79ab35,#7aad36,#7caf36,#7db137,#7fb136,#80af34,#81ad33,#81ab31,#81a62f,#7e9e2e,#7fa02e)"></b><b style="left:571px;top:752px;width:222px;background:linear-gradient(90deg,#341b0a,#361b0a,#321b0a,#2e1b0a,#2b1b0a,#271b0a,#241c09,#211c09,#1f1d09,#1d1e08,#1c2108,#1d2609,#1e2b0a,#22330c,#273d0f,#304e13,#3a5f18,#456d1e,#4f7b23,#588628,#60902b,#67992e,#6a9c30,#6ea031,#71a332,#75a734,#77a934,#79ab35,#7aad36,#7caf36,#7db137,#7fb136,#80af34,#81ad33,#81ab31,#81a62f,#7e9e2e,#7fa02e)"></b><b style="left:570px;top:755px;width:228px;background:linear-gradient(90deg,#341b0a,#361b0a,#331b0a,#2f1b0a,#2b1b0a,#271b0a,#241c09,#211c09,#1f1d09,#1d1e08,#1c2008,#1d2509,#1e2a0a,#21320c,#263c0e,#2f4d13,#395d18,#436b1d,#4e7923,#578527,#5f8f2b,#66982e,#6a9c2f,#6d9f31,#71a332,#74a633,#77a934,#78ab35,#7aad36,#7caf36,#7db137,#7fb136,#7faf34,#80ad33,#81ab31,#81a830,#7e9f2e,#7e9f2e,#81a62f)"></b><b style="left:570px;top:758px;width:228px;background:linear-gradient(90deg,#341b0a,#361b0a,#321b0a,#2e1b0a,#2a1b0a,#271b0a,#241c09,#211c09,#1f1d09,#1d1e08,#1c2108,#1d2509,#1e2b0a,#22320c,#273d0e,#304e13,#3a5e18,#446c1d,#4e7a23,#578627,#5f902b,#66982e,#6a9c2f,#6d9f31,#71a332,#74a633,#77a934,#78ab35,#7aad36,#7caf36,#7db137,#7fb136,#7faf34,#80ad33,#81ab31,#81a830,#7e9f2e,#7e9e2e,#81a62f)"></b><b style="left:569px;top:761px;width:228px;background:linear-gradient(90deg,#341b0a,#361b0a,#321b0a,#2f1b0a,#2b1b0a,#271b0a,#241c09,#211c09,#1f1d09,#1d1e08,#1c2008,#1d2509,#1e2a0a,#21310c,#263b0e,#2f4b12,#385c17,#426a1d,#4d7822,#568427,#5e8e2a,#65972e,#699b2f,#6d9f31,#70a232,#74a633,#77a934,#78ab35,#7aad35,#7baf36,#7db137,#7eb136,#7fb035,#80ae33,#81ac32,#82a930,#7fa22e,#7e9d2d,#80a42f)"></b><b style="left:569px;top:764px;width:228px;background:linear-gradient(90deg,#341b0a,#361b0a,#321b0a,#2e1b0a,#2a1b0a,#271b0a,#241c09,#211c09,#1f1d09,#1d1e08,#1c2008,#1d2509,#1e2a0a,#21320c,#263b0e,#2f4c12,#385c17,#436a1d,#4d7822,#568427,#5e8e2a,#65972e,#699b2f,#6d9f31,#70a232,#74a633,#76a934,#78ab35,#7aad35,#7baf36,#7db137,#7eb137,#7fb035,#80ae33,#81ac32,#82aa30,#7fa22e,#7e9d2d,#80a42f)"></b><b style="left:568px;top:767px;width:228px;background:linear-gradient(90deg,#341b0a,#361b0a,#321b0a,#2e1b0a,#2a1b0a,#271b0a,#241c09,#211c09,#1f1d09,#1d1e08,#1c2008,#1d2509,#1e2a0a,#21310b,#253a0e,#2e4a12,#375a17,#41691c,#4c7722,#558326,#5d8d2a,#65962d,#699b2f,#6c9e30,#70a232,#73a533,#76a834,#78aa35,#79ac35,#7bae36,#7db036,#7eb237,#7fb035,#80ae34,#81ac32,#82aa30,#80a32f,#7e9d2d,#80a32f)"></b><b style="left:567px;top:770px;width:228px;background:linear-gradient(90deg,#321b0a,#351b0a,#311b0a,#2e1b0a,#2b1b0a,#271b0a,#241c09,#221c09,#201d09,#1d1e08,#1c1f08,#1d2409,#1e290a,#21300b,#24390d,#2d4811,#365916,#40671b,#4a7521,#548226,#5c8c2a,#64952d,#699b2f,#6c9e30,#6fa131,#73a533,#76a834,#78aa35,#79ac35,#7bae36,#7cb036,#7eb237,#7fb035,#80ae34,#81ad32,#82ab31,#80a52f,#7e9d2d,#7fa12e)"></b><b style="left:565px;top:773px;width:234px;background:linear-gradient(90deg,#2f1b0a,#321b0a,#311b0a,#2e1b0a,#2b1b0a,#281b0a,#251c09,#221c09,#201d09,#1e1d08,#1c1e08,#1d2309,#1e280a,#202e0b,#23350c,#2a4310,#335415,#3d631a,#47701f,#517e25,#598828,#61922c,#67992f,#6b9d30,#6ea031,#72a432,#75a734,#77a934,#79ab35,#7aad36,#7caf36,#7db137,#7fb136,#7faf34,#80ad33,#81ab31,#81a830,#7fa02e,#7e9e2e,#80a52f)"></b><b style="left:563px;top:776px;width:234px;background:linear-gradient(90deg,#2c1b09,#2f1b09,#2e1b0a,#2d1c0a,#2a1c0a,#281c0a,#251c09,#231c09,#211d09,#1f1d08,#1d1e08,#1d2209,#1d2609,#1f2c0a,#22330c,#273e0f,#314f13,#3a5e18,#446c1d,#4e7a23,#578527,#5f8f2b,#66982e,#6a9c2f,#6d9f31,#70a232,#74a633,#76a934,#78ab35,#7aad35,#7bae36,#7db037,#7eb237,#7fb035,#80ae33,#81ac32,#82aa30,#80a32f,#7e9d2d,#7fa22e)"></b><b style="left:561px;top:779px;width:240px;background:linear-gradient(90deg,#291b09,#2b1b09,#2c1b09,#2b1c09,#291c09,#281c0a,#261d09,#231d09,#211d09,#201e09,#1e1f08,#1d2109,#1e2609,#1e2a0a,#21310c,#253a0e,#2e4a12,#375a17,#41681c,#4b7621,#558226,#5c8c2a,#64962d,#699b2f,#6c9e30,#6fa131,#73a533,#76a834,#78aa35,#79ac35,#7bae36,#7cb036,#7eb237,#7fb036,#80af34,#81ad32,#82ab31,#81a62f,#7e9e2e,#7e9f2e,#81a62f)"></b><b style="left:559px;top:782px;width:240px;background:linear-gradient(90deg,#261a09,#281b09,#281b09,#281c09,#281c09,#271d09,#251d09,#241d09,#221e09,#211f09,#1f2009,#1e2209,#1e2609,#1f2a0a,#21300b,#24370d,#2b4511,#345515,#3e641a,#487120,#527f25,#5a8928,#61922c,#67992f,#6b9d30,#6ea031,#71a332,#75a734,#77a934,#79ab35,#7aad36,#7caf36,#7db137,#7eb136,#7faf35,#80ae33,#81ac32,#82a930,#7fa22e,#7e9d2d,#80a42f)"></b><b style="left:557px;top:785px;width:240px;background:linear-gradient(90deg,#221a08,#241b08,#251b09,#261c09,#261d09,#251d09,#251e09,#241e09,#231e09,#221f09,#212109,#1f2309,#20270a,#202b0a,#21300b,#24370d,#2a4210,#325114,#3b6019,#456d1e,#4f7b23,#578627,#5f8f2b,#66982e,#6a9c2f,#6d9f31,#70a232,#74a633,#76a934,#78aa35,#7aac35,#7bae36,#7db036,#7eb237,#7fb035,#80ae34,#81ac32,#82ab31,#80a52f,#7e9d2d,#7fa02e)"></b><b style="left:556px;top:788px;width:246px;background:linear-gradient(90deg,#201a08,#221a08,#231b08,#231c09,#241d09,#241d09,#241e09,#241f09,#231f09,#222009,#222209,#212509,#21290a,#212d0b,#22310c,#25380d,#2a4210,#325014,#3a5f18,#446c1d,#4d7922,#568427,#5e8e2a,#65972e,#699b2f,#6c9e30,#70a232,#73a533,#76a834,#78aa35,#79ac35,#7bae36,#7cb036,#7eb237,#7fb036,#80af34,#81ad33,#81ab31,#81a72f,#7e9f2e,#7e9f2e,#80a52f)"></b><b style="left:553px;top:791px;width:246px;background:linear-gradient(90deg,#1f1908,#201a08,#211b08,#221c08,#221d08,#231d09,#231e09,#231f09,#231f09,#232009,#232209,#22260a,#22290a,#232d0b,#23320c,#26380d,#293f0f,#304c13,#375917,#3f661b,#497220,#527f25,#5a8928,#61922c,#67992f,#6b9d30,#6ea031,#71a332,#74a633,#77a934,#78ab35,#7aad35,#7baf36,#7db137,#7eb137,#7fb035,#80ae33,#81ac32,#82aa30,#80a42f,#7e9d2d,#7fa02e)"></b><b style="left:551px;top:794px;width:252px;background:linear-gradient(90deg,#1e1908,#1f1a08,#201a08,#211b08,#211c08,#221d08,#221e09,#231f09,#232009,#232109,#232209,#24260a,#242a0a,#242f0b,#25330c,#26380d,#2a400f,#2f4a12,#365716,#3d631a,#466f1f,#4f7b23,#578527,#5f8f2b,#66982e,#6a9c30,#6d9f31,#70a232,#73a533,#76a834,#78aa35,#79ac35,#7bae36,#7cb036,#7eb237,#7fb036,#80af34,#81ad33,#81ab31,#81a72f,#7fa02e,#7e9e2e,#80a42f)"></b><b style="left:550px;top:797px;width:252px;background:linear-gradient(90deg,#1e1908,#1f1908,#201a08,#211b08,#211c08,#221d08,#221e09,#231f09,#232009,#232109,#242209,#24270a,#252b0b,#26300b,#26350c,#273a0d,#2b4210,#304c13,#365716,#3d631a,#456e1e,#4e7923,#568427,#5e8d2a,#65972e,#6a9c30,#6d9f31,#70a232,#73a533,#76a834,#78aa35,#79ac35,#7bae36,#7caf36,#7db137,#7fb136,#7faf34,#80ad33,#81ac31,#82a930,#7fa22e,#7d9c2d,#7fa22e)"></b><b style="left:548px;top:800px;width:258px;background:linear-gradient(90deg,#1d1807,#1f1908,#201a08,#201b08,#211c08,#211d08,#221e08,#221f09,#232009,#232109,#242209,#25260a,#262b0b,#26300b,#27350c,#283a0d,#2c420f,#304b12,#365616,#3c6119,#436b1d,#4c7621,#548126,#5b8a29,#63942d,#699b2f,#6d9f31,#70a233,#73a534,#76a835,#78aa36,#79ac36,#7bad36,#7caf37,#7db137,#7eb237,#7fb035,#80ae34,#81ac32,#82ab31,#81a62f,#7e9f2e,#7e9e2e,#80a52f)"></b><b style="left:546px;top:803px;width:258px;background:linear-gradient(90deg,#1d1807,#1e1908,#201a08,#201b08,#211c08,#211d08,#221e08,#221e09,#231f09,#232009,#242109,#242409,#26290a,#272f0b,#28340c,#293a0d,#2b400f,#304a12,#355415,#3b5f19,#41691c,#497320,#517d24,#598728,#61902c,#68992f,#6d9e31,#70a133,#73a434,#76a736,#79aa37,#7aac37,#7cae38,#7caf38,#7db037,#7eb237,#7fb136,#80af34,#80ad33,#81ab31,#82a930,#7fa22e,#7d9c2d,#7fa22e)"></b><b style="left:544px;top:806px;width:264px;background:linear-gradient(90deg,#1c1807,#1e1908,#1f1908,#201a08,#211b08,#211c08,#221d08,#221e09,#231f09,#232009,#242109,#242209,#25280a,#262d0b,#28330c,#29380d,#2a3e0e,#2f4811,#355215,#3a5c18,#40671b,#47701f,#4f7a23,#578427,#5e8d2b,#66972e,#6c9e31,#70a133,#73a435,#76a737,#79aa38,#7bac39,#7dae3a,#7eb03a,#7eb139,#7eb238,#7fb237,#7fb035,#80ae34,#81ac32,#81ab31,#81a62f,#7e9f2e,#7e9e2e,#80a42f)"></b><b style="left:542px;top:809px;width:264px;background:linear-gradient(90deg,#1c1807,#1d1807,#1f1908,#201a08,#201b08,#211c08,#211d08,#221e08,#221f09,#232009,#232109,#242209,#25260a,#262b0b,#27310c,#28370d,#2a3c0e,#2e4510,#334f14,#395917,#3e641a,#456e1e,#4d7722,#548126,#5c8a29,#64942d,#6b9c31,#70a133,#73a435,#76a737,#79aa39,#7cad3b,#7eaf3c,#80b13c,#7fb13b,#7fb23a,#7fb239,#7fb137,#7faf35,#80ae33,#81ac32,#81a930,#7fa32f,#7d9d2d,#7fa12e)"></b><b style="left:540px;top:812px;width:270px;background:linear-gradient(90deg,#1c1707,#1d1807,#1e1908,#201a08,#201b08,#211c08,#211d08,#221e08,#221e09,#231f09,#232009,#242109,#242409,#26290a,#272f0b,#28350c,#293a0d,#2c410f,#314c12,#375616,#3c6019,#426b1d,#4a7421,#527e24,#5a8728,#62912c,#699a30,#6fa133,#73a436,#76a738,#7aaa3a,#7dad3c,#7fb03e,#82b23f,#81b33e,#81b23c,#80b33a,#7fb238,#7fb136,#7faf34,#80ad33,#80ab31,#80a730,#7ea12e,#7d9e2d,#7fa32e)"></b><b style="left:538px;top:815px;width:276px;background:linear-gradient(90deg,#1b1707,#1c1807,#1e1908,#1f1908,#201a08,#211b08,#211c08,#221d08,#221e09,#231f09,#232009,#242109,#242209,#25280a,#262d0b,#28330c,#29380d,#2a3e0e,#304811,#355315,#3b5d18,#40671c,#48711f,#4f7b23,#578427,#5f8e2b,#67972f,#6fa033,#73a436,#77a739,#7aab3c,#7eae3e,#81b040,#83b341,#84b441,#83b43f,#81b33d,#80b33b,#7fb238,#7fb036,#7fae34,#7fad32,#7fab31,#7ea52f,#7ca02e,#7da02e,#7fa62f)"></b><b style="left:536px;top:818px;width:276px;background:linear-gradient(90deg,#1b1707,#1c1807,#1d1807,#1f1908,#201a08,#201b08,#211c08,#211d08,#221e08,#221f09,#232009,#232109,#242209,#25260a,#262b0b,#27310c,#28370d,#2a3c0e,#2e4510,#334f14,#395a17,#3e641a,#456e1e,#4d7722,#558126,#5d8b2a,#65942e,#6d9e33,#73a436,#77a739,#7bab3c,#7fae3f,#82b142,#85b444,#87b645,#86b543,#84b540,#82b43d,#80b33b,#7fb238,#7fb036,#7eae34,#7eac32,#7ea930,#7ca42f,#7ba02d,#7da42e)"></b><b style="left:534px;top:821px;width:282px;background:linear-gradient(90deg,#1a1707,#1c1707,#1d1807,#1e1908,#201a08,#201b08,#211c08,#211d08,#221e08,#221e09,#231f09,#232009,#242109,#242409,#26290a,#272f0b,#28350c,#293a0d,#2c410f,#314c13,#375616,#3d6119,#436b1d,#4a7421,#527e25,#5b8829,#63922d,#6b9b32,#72a336,#76a73a,#7bab3d,#7fae40,#83b244,#86b546,#89b748,#89b747,#87b644,#84b641,#82b53e,#80b33a,#7fb138,#7eaf35,#7dad33,#7dac31,#7ca830,#7ba32e,#7ba32e,#7da62e)"></b><b style="left:532px;top:824px;width:282px;background:linear-gradient(90deg,#1a1607,#1b1707,#1c1807,#1e1908,#1f1908,#201a08,#211b08,#211c08,#221d08,#221e09,#231f09,#232009,#242109,#242209,#25280a,#262d0b,#28330c,#29380d,#2a3e0e,#304811,#355315,#3b5d18,#40681c,#487120,#507b24,#588528,#618f2c,#699931,#71a236,#76a73a,#7baa3e,#7fae41,#84b245,#87b548,#8bb84b,#8cb94b,#8ab848,#87b745,#85b641,#82b53d,#80b33a,#7eb137,#7daf35,#7cad33,#7caa31,#7aa72f,#79a32d,#7ba62e)"></b><b style="left:530px;top:827px;width:282px;background:linear-gradient(90deg,#191607,#1b1707,#1c1807,#1d1807,#1f1908,#201a08,#201b08,#211c08,#211d08,#221e08,#221f09,#232009,#232109,#242209,#25260a,#262b0b,#27310c,#28370d,#2a3c0e,#2e4510,#334f14,#395a17,#3f641b,#456e1e,#4e7823,#568227,#5e8c2b,#679630,#70a035,#76a63a,#7baa3e,#80ae42,#84b246,#88b54a,#8cb84c,#8ebb4e,#8dba4c,#8bb949,#88b845,#85b641,#82b53d,#7fb23a,#7eb037,#7cae34,#7bac32,#7aa930,#79a62e,#79a62e)"></b><b style="left:527px;top:830px;width:288px;background:linear-gradient(90deg,#191607,#1a1607,#1b1707,#1d1807,#1e1908,#1f1a08,#201a08,#211b08,#211c08,#221d08,#221e09,#231f09,#232009,#242109,#242309,#25290a,#272e0b,#28340c,#29390d,#2b400f,#314a12,#365515,#3c5f19,#42691d,#4a7321,#527d25,#5b872a,#63922f,#6c9c34,#75a539,#7aa93e,#7fae42,#84b247,#89b54b,#8db94e,#90bb51,#90bc50,#8ebb4d,#8bba4a,#88b846,#85b641,#82b43d,#7fb23a,#7db036,#7bad34,#7aab31,#78a92f,#78a62e,#78a72e)"></b><b style="left:524px;top:833px;width:288px;background:linear-gradient(90deg,#181506,#191607,#1b1707,#1c1807,#1d1807,#1f1908,#201a08,#201b08,#211c08,#211d08,#221e08,#221f09,#232009,#232109,#242209,#25260a,#262b0b,#27310c,#28370d,#2a3c0e,#2e4510,#334f14,#395a17,#3f641b,#466f1f,#4e7923,#578328,#608d2d,#699832,#72a238,#79a83d,#7fad42,#84b147,#89b54c,#8db950,#91bc53,#93be54,#91bd52,#8fbc4f,#8cba4b,#88b846,#84b641,#81b43d,#7fb139,#7caf36,#7aad33,#79ab30,#77a82e,#77a82d)"></b><b style="left:522px;top:836px;width:294px;background:linear-gradient(90deg,#181506,#191607,#1a1707,#1c1707,#1d1807,#1e1908,#201a08,#201b08,#211c08,#211d08,#221e08,#221e09,#231f09,#232009,#242109,#242409,#26290a,#272f0b,#28350c,#293a0d,#2c420f,#314c13,#375616,#3d611a,#436b1d,#4c7522,#548026,#5d8a2c,#679531,#709f37,#78a83d,#7fad43,#84b248,#8ab64d,#8eba52,#92bd55,#95bf57,#94bf56,#92be53,#8fbc4f,#8bba4a,#87b844,#84b540,#80b33b,#7eb038,#7bae34,#79ac32,#78aa2f,#77a82e,#77a82d)"></b><b style="left:519px;top:839px;width:294px;background:linear-gradient(90deg,#171506,#181506,#1a1607,#1b1707,#1c1807,#1e1908,#1f1908,#201a08,#211b08,#211c08,#221d08,#221e09,#221f09,#232009,#232109,#242209,#25270a,#262c0b,#27320c,#29370d,#2a3d0e,#2f4711,#345114,#3a5c18,#40661c,#487120,#507b24,#598529,#62902f,#6c9b35,#76a53b,#7dab42,#83b148,#89b54d,#8fb952,#93bd56,#96bf59,#97c15a,#95c058,#92be54,#8fbc4f,#8bba49,#86b744,#83b53f,#80b23a,#7daf37,#7bad33,#79ab31,#77a92e,#76a82e)"></b><b style="left:517px;top:842px;width:300px;background:linear-gradient(90deg,#161406,#181506,#191607,#1a1707,#1c1707,#1d1807,#1e1908,#201a08,#201b08,#211c08,#211d08,#221e08,#221f09,#232009,#232109,#242209,#25250a,#262a0b,#27300c,#28360d,#293b0e,#2d4310,#324e13,#385817,#3e631a,#456d1e,#4d7823,#568228,#608d2d,#6a9834,#74a33a,#7cab41,#83b047,#89b54d,#8fb953,#93bd58,#97c05b,#99c25d,#98c15b,#95c057,#92be53,#8dbb4d,#89b947,#85b641,#81b33d,#7eb038,#7cae35,#79ac32,#78a92f,#77a82e,#76a82d)"></b><b style="left:515px;top:845px;width:300px;background:linear-gradient(90deg,#161406,#171506,#191607,#1a1607,#1b1707,#1d1807,#1e1908,#1f1a08,#201a08,#211b08,#211c08,#221d08,#221e09,#231f09,#232009,#242109,#242309,#25290a,#272e0b,#28340c,#29390d,#2b400f,#314a12,#365516,#3c5f19,#426a1d,#4b7421,#547f26,#5d892c,#679432,#719f39,#7aa93f,#81af46,#88b44d,#8eb953,#93bd58,#97c05c,#9ac25e,#9ac25d,#97c15a,#94bf56,#90bd50,#8bba4a,#87b744,#83b43f,#7fb13a,#7daf36,#7aac33,#78aa30,#77a92e,#76a82d)"></b><b style="left:514px;top:848px;width:300px;background:linear-gradient(90deg,#161406,#171506,#181506,#1a1607,#1b1707,#1c1807,#1e1908,#1f1908,#201a08,#211b08,#211c08,#221d08,#221e09,#231f09,#232009,#242109,#242209,#25280a,#262d0b,#28330c,#29380d,#2a3f0e,#304811,#355315,#3b5e19,#41681c,#497321,#527d26,#5b882b,#659331,#6f9e38,#79a83f,#81ae45,#88b44c,#8eb953,#93bd58,#97c05c,#9ac25e,#9bc35f,#98c25c,#95c057,#91be52,#8cbb4c,#88b845,#84b540,#80b23b,#7daf37,#7bad33,#79ab30,#77a92e,#76a82e)"></b><b style="left:512px;top:851px;width:300px;background:linear-gradient(90deg,#161406,#171406,#181506,#191607,#1b1707,#1c1807,#1d1807,#1f1908,#201a08,#201b08,#211c08,#211d08,#221e08,#221f09,#232009,#232109,#242209,#25260a,#262b0b,#27310c,#28370d,#2a3c0e,#2e4510,#334f14,#395a17,#3f651b,#466f1f,#4f7924,#588429,#628f2f,#6c9a35,#76a53c,#7eac43,#85b24a,#8cb750,#91bb56,#96bf5b,#99c15e,#9bc35f,#99c25d,#96c059,#92be54,#8ebc4e,#89b947,#85b642,#81b33c,#7eb038,#7bae34,#79ab31,#77a92f,#77a82e)"></b><b style="left:511px;top:854px;width:300px;background:linear-gradient(90deg,#161406,#161406,#181506,#191607,#1a1707,#1c1707,#1d1807,#1e1908,#201a08,#201b08,#211c08,#211d08,#221e08,#221f09,#232009,#232109,#242209,#25250a,#262a0b,#27300c,#28360d,#293b0e,#2d4310,#324e13,#385817,#3e631a,#456d1e,#4e7823,#578228,#608d2e,#6a9834,#74a33b,#7dab41,#83b048,#8ab64e,#90ba54,#94be59,#98c05c,#9ac25e,#99c25c,#96c058,#92be54,#8ebc4e,#89b948,#85b642,#82b33d,#7eb039,#7cae35,#79ac32,#78a92f,#77a82e)"></b><b style="left:510px;top:857px;width:300px;background:linear-gradient(90deg,#161406,#161406,#181506,#191607,#1a1707,#1c1707,#1d1807,#1e1908,#201a08,#201b08,#211c08,#211d08,#221e08,#221e09,#231f09,#232009,#242109,#242409,#26290a,#272f0b,#28350c,#293a0d,#2c420f,#324c13,#375616,#3d611a,#436c1e,#4c7622,#558027,#5e8b2c,#689632,#72a139,#7ba93f,#81af46,#88b44c,#8db851,#92bc56,#96bf5a,#98c15c,#98c15b,#95c057,#92be53,#8ebc4d,#89b947,#85b642,#82b33d,#7eb139,#7cae35,#7aac32,#78aa2f,#77a82e)"></b><b style="left:510px;top:860px;width:300px;background:linear-gradient(90deg,#161406,#161406,#181506,#191607,#1a1707,#1c1707,#1d1807,#1e1908,#201a08,#201b08,#211c08,#211d08,#221e08,#221e09,#231f09,#232009,#242109,#242409,#26290a,#272f0b,#28350c,#293a0d,#2c420f,#314c13,#375616,#3d611a,#436b1d,#4c7622,#548027,#5e8a2c,#679532,#71a038,#79a93e,#80ae44,#86b34a,#8bb74f,#90bb54,#94be57,#96c059,#96c058,#93bf55,#90bd50,#8cbb4b,#88b846,#84b641,#81b33c,#7eb038,#7cae35,#79ac32,#78aa2f,#77a82e)"></b><b style="left:510px;top:863px;width:300px;background:linear-gradient(90deg,#161406,#161406,#181506,#191607,#1a1707,#1c1707,#1d1807,#1e1908,#201a08,#201b08,#211c08,#211d08,#221e08,#221e09,#231f09,#232009,#242109,#242409,#26290a,#272f0b,#28350c,#293a0d,#2c410f,#314c13,#375616,#3d611a,#436b1d,#4b7522,#548026,#5d8a2b,#669431,#709f37,#78a83d,#7eac42,#84b147,#89b54c,#8eb951,#91bc54,#94be56,#94be55,#91bd52,#8ebc4e,#8bba49,#87b844,#83b53f,#80b23b,#7db037,#7bae34,#79ac31,#78aa2f,#76a82e)"></b><b style="left:513px;top:866px;width:294px;background:linear-gradient(90deg,#161406,#171506,#181506,#1a1607,#1b1707,#1c1807,#1e1908,#1f1908,#201a08,#211b08,#211c08,#221d08,#221e09,#221f09,#232009,#232109,#242209,#25270a,#262c0b,#27320c,#29370d,#2a3d0e,#2f4711,#345114,#3a5c18,#40661b,#47701f,#4f7a24,#588428,#618f2d,#6a9933,#73a338,#79a93d,#7fad42,#84b247,#89b54c,#8db94f,#90bc52,#92bd53,#90bc51,#8ebb4d,#8ab949,#87b844,#83b640,#81b33c,#7eb138,#7caf35,#7aac32,#78aa30,#77a92e)"></b><b style="left:522px;top:869px;width:282px;background:linear-gradient(90deg,#181506,#191607,#1a1707,#1c1707,#1d1807,#1e1908,#201a08,#201b08,#211c08,#211d08,#221e08,#221e09,#231f09,#232009,#242109,#242409,#26290a,#272f0b,#28350c,#293a0d,#2c410f,#314c13,#375616,#3d6119,#436b1d,#4b7521,#537f26,#5c892a,#65932f,#6d9d34,#75a539,#7aaa3e,#80ae42,#84b247,#89b54a,#8cb94e,#8fbb50,#8fbb4f,#8dba4c,#8ab948,#87b744,#84b640,#81b43c,#7fb139,#7caf36,#7aad33,#79ab31,#77a92f)"></b><b style="left:535px;top:872px;width:270px;background:linear-gradient(90deg,#1a1707,#1c1707,#1d1807,#1e1908,#201a08,#201b08,#211c08,#211d08,#221e08,#221f09,#232009,#232109,#242209,#25250a,#262a0b,#27300c,#28360d,#293b0e,#2d4310,#324e13,#385817,#3e621a,#446d1e,#4c7622,#548026,#5d8a2a,#65942f,#6e9e34,#75a539,#7aa93d,#7ead41,#83b145,#87b448,#8bb74b,#8eba4d,#8dba4c,#8ab949,#88b845,#85b641,#82b53d,#7fb33a,#7db137,#7caf35,#7aad32,#78ab30,#77a92e)"></b><b style="left:552px;top:875px;width:252px;background:linear-gradient(90deg,#1e1908,#201a08,#201b08,#211c08,#211d08,#221e08,#221e09,#231f09,#232009,#242109,#242409,#26290a,#272f0b,#28350c,#293a0d,#2c410f,#314c13,#375616,#3d6119,#436b1d,#4b7521,#537e25,#5b8829,#63922e,#6c9c32,#73a437,#77a83a,#7cab3e,#80af42,#84b245,#88b648,#8bb94b,#8bb94a,#89b847,#87b744,#84b640,#81b43d,#7fb33a,#7db137,#7baf35,#7aad32,#78ab30,#77a92e)"></b><b style="left:574px;top:878px;width:222px;background:linear-gradient(90deg,#211c08,#221d08,#221e09,#231f09,#232009,#242109,#242209,#25280a,#262d0b,#28330c,#29380d,#2a3e0e,#304811,#355315,#3b5d18,#40671c,#48711f,#507b23,#588428,#608e2c,#689830,#70a134,#75a538,#79a93b,#7dad3f,#81b042,#85b345,#89b748,#8ab848,#88b746,#86b643,#84b540,#81b43c,#7fb339,#7db137,#7caf35,#7aad33,#79ab31)"></b><b style="left:631px;top:881px;width:144px;background:linear-gradient(90deg,#28360d,#293b0e,#2d4310,#324e13,#385816,#3d621a,#446c1d,#4c7621,#547f25,#5b8929,#64932d,#6c9c32,#72a335,#76a739,#7aaa3c,#7eae3f,#82b142,#86b445,#89b747,#88b746,#86b643,#84b540,#81b43d,#7fb33a,#7db137)"></b></div></div></div>
<svg class="a" style="left:0;top:0" width="1920" height="1038" viewBox="0 0 1920 1038"><defs><clipPath id="cv2"><rect x="54" y="115" width="1588" height="877"/></clipPath></defs><g clip-path="url(#cv2)"><path d="M494,138H1354 M494,138V1000 M1354,138V1000" fill="none" stroke="#fff" stroke-width="1"/><path d="M494,138H1354 M494,138V1000 M1354,138V1000" fill="none" stroke="#5f5ff2" stroke-width="1" stroke-dasharray="5 3"/><rect x="489" y="133" width="10" height="10" fill="#fff" stroke="#30307a" stroke-width="2"/><rect x="919" y="133" width="10" height="10" fill="#fff" stroke="#30307a" stroke-width="2"/><rect x="1349" y="133" width="10" height="10" fill="#fff" stroke="#30307a" stroke-width="2"/><rect x="489" y="594" width="10" height="10" fill="#fff" stroke="#30307a" stroke-width="2"/><rect x="1349" y="594" width="10" height="10" fill="#fff" stroke="#30307a" stroke-width="2"/><rect x="919" y="594" width="10" height="10" fill="#ff6666" stroke="#990000" stroke-width="2"/><path d="M515.0,864.0 C511.8,860.5 516.5,854.0 518.0,850.0 C519.5,846.0 521.0,844.0 524.0,840.0 C527.0,836.0 530.8,833.2 536.0,826.0 C541.2,818.8 549.8,805.0 555.0,797.0 C560.2,789.0 564.2,782.5 567.0,778.0 C569.8,773.5 570.7,774.3 572.0,770.0 C573.3,765.7 572.8,763.7 575.0,752.0 C577.2,740.3 581.3,717.3 585.0,700.0 C588.7,682.7 592.3,665.3 597.0,648.0 C601.7,630.7 606.8,613.3 613.0,596.0 C619.2,578.7 626.8,561.3 634.0,544.0 C641.2,526.7 648.7,508.0 656.0,492.0 C663.3,476.0 668.3,465.2 678.0,448.0 C687.7,430.8 703.5,404.3 714.0,389.0 C724.5,373.7 729.8,367.7 741.0,356.0 C752.2,344.3 767.5,330.2 781.0,319.0 C794.5,307.8 806.2,298.7 822.0,289.0 C837.8,279.3 858.0,269.2 876.0,261.0 C894.0,252.8 909.3,245.8 930.0,240.0 C950.7,234.2 981.7,229.5 1000.0,226.0 C1018.3,222.5 1026.5,220.5 1040.0,219.0 C1053.5,217.5 1066.3,216.5 1081.0,217.0 C1095.7,217.5 1111.7,219.2 1128.0,222.0 C1144.3,224.8 1164.8,228.7 1179.0,234.0 C1193.2,239.3 1204.5,247.8 1213.0,254.0 C1221.5,260.2 1226.2,263.7 1230.0,271.0 C1233.8,278.3 1234.7,287.8 1236.0,298.0 C1237.3,308.2 1238.5,319.2 1238.0,332.0 C1237.5,344.8 1235.0,363.8 1233.0,375.0 C1231.0,386.2 1229.3,389.3 1226.0,399.0 C1222.7,408.7 1218.5,421.8 1213.0,433.0 C1207.5,444.2 1200.3,456.0 1193.0,466.0 C1185.7,476.0 1177.0,485.7 1169.0,493.0 C1161.0,500.3 1153.5,506.8 1145.0,510.0 C1136.5,513.2 1127.5,512.8 1118.0,512.0 C1108.5,511.2 1098.3,508.7 1088.0,505.0 C1077.7,501.3 1066.2,497.2 1056.0,490.0 C1045.8,482.8 1035.7,470.0 1027.0,462.0 C1018.3,454.0 1010.5,448.3 1004.0,442.0 C997.5,435.7 992.8,428.0 988.0,424.0 C983.2,420.0 980.0,419.0 975.0,418.0 C970.0,417.0 965.7,416.0 958.0,418.0 C950.3,420.0 937.7,425.3 929.0,430.0 C920.3,434.7 913.7,439.7 906.0,446.0 C898.3,452.3 891.3,458.7 883.0,468.0 C874.7,477.3 864.5,490.0 856.0,502.0 C847.5,514.0 838.5,526.0 832.0,540.0 C825.5,554.0 821.2,570.5 817.0,586.0 C812.8,601.5 810.2,617.5 807.0,633.0 C803.8,648.5 800.8,663.0 798.0,679.0 C795.2,695.0 791.3,714.3 790.0,729.0 C788.7,743.7 789.0,755.5 790.0,767.0 C791.0,778.5 793.3,789.2 796.0,798.0 C798.7,806.8 804.0,813.8 806.0,820.0 C808.0,826.2 808.0,829.7 808.0,835.0 C808.0,840.3 807.5,846.3 806.0,852.0 C804.5,857.7 801.7,864.7 799.0,869.0 C796.3,873.3 797.3,876.0 790.0,878.0 C782.7,880.0 770.0,880.3 755.0,881.0 C740.0,881.7 718.2,882.0 700.0,882.0 C681.8,882.0 661.2,881.5 646.0,881.0 C630.8,880.5 621.2,879.7 609.0,879.0 C596.8,878.3 585.0,878.3 573.0,877.0 C561.0,875.7 546.7,873.2 537.0,871.0 C527.3,868.8 518.2,867.5 515.0,864.0Z M593.3,781.0 L594.6,774.0 L596.0,767.9 L597.5,761.0 L598.7,754.0 L599.8,747.0 L600.9,740.0 L602.0,733.0 L602.9,726.0 L603.9,719.0 L604.9,712.0 L606.1,706.0 L607.5,699.0 L609.0,692.2 L610.2,686.0 L612.0,679.0 L613.4,673.0 L615.0,666.4 L616.3,660.0 L618.0,653.1 L619.5,647.0 L621.7,641.0 L623.0,635.0 L625.0,628.3 L626.9,622.0 L629.0,616.0 L630.5,610.0 L632.8,604.0 L635.0,598.3 L637.0,592.0 L639.1,587.0 L641.0,580.5 L643.6,575.0 L645.9,569.0 L648.0,563.6 L650.3,558.0 L652.4,552.0 L655.0,546.8 L657.0,540.4 L659.0,534.9 L661.5,529.0 L664.0,523.5 L666.2,518.0 L668.0,511.8 L670.5,506.0 L673.0,500.8 L675.7,495.0 L678.1,490.0 L680.6,484.0 L683.0,478.8 L685.9,473.0 L688.9,468.0 L691.3,463.0 L694.0,457.8 L697.3,453.0 L700.0,447.7 L703.0,442.0 L705.8,437.0 L709.0,432.1 L712.0,427.8 L715.0,422.4 L718.0,417.6 L721.0,412.7 L724.4,408.0 L727.5,403.0 L731.0,398.3 L734.2,394.0 L737.5,389.0 L741.0,384.7 L744.7,380.0 L748.8,376.0 L752.0,371.9 L756.0,367.8 L760.0,363.7 L764.0,359.7 L768.5,356.0 L772.3,352.0 L776.5,348.0 L781.0,344.2 L785.0,340.3 L789.3,337.0 L793.4,333.0 L798.0,329.8 L802.4,326.0 L806.9,322.0 L811.2,319.0 L816.0,315.6 L821.0,312.1 L825.4,309.0 L830.5,306.0 L835.5,303.0 L840.2,300.0 L845.9,297.0 L850.9,294.0 L856.0,291.1 L861.0,288.7 L866.7,286.0 L871.9,283.0 L877.0,280.9 L883.0,278.0 L888.2,276.0 L894.0,273.8 L900.0,271.0 L905.0,268.7 L911.5,267.0 L917.0,264.4 L923.0,262.6 L929.0,260.5 L935.0,258.6 L942.0,257.0 L948.0,255.5 L955.0,254.3 L961.0,252.9 L968.0,251.4 L975.0,250.6 L982.0,249.6 L989.0,248.7 L996.0,247.6 L1003.0,246.5 L1010.0,245.4 L1017.0,244.6 L1024.0,243.4 L1031.0,242.4 L1035.0,241.9 M625.1,787.0 L626.3,780.0 L627.1,773.0 L628.0,766.0 L629.0,758.0 L630.0,751.0 L630.9,743.0 L631.8,736.0 L632.8,729.0 L633.8,722.0 L634.7,715.0 L636.0,708.0 L637.2,702.0 L638.7,695.0 L640.2,689.0 L641.8,682.0 L643.1,676.0 L644.6,669.0 L646.0,663.0 L648.0,656.2 L649.7,650.0 L651.0,643.8 L653.1,638.0 L655.0,631.6 L656.7,625.0 L658.5,619.0 L660.7,613.0 L662.3,607.0 L665.0,600.3 L666.7,594.0 L669.0,588.5 L671.2,583.0 L673.1,577.0 L675.2,571.0 L677.3,565.0 L679.9,559.0 L681.7,553.0 L683.6,547.0 L686.0,541.0 L688.8,534.0 L690.9,528.0 L692.6,522.0 L695.0,516.7 L697.9,510.0 L700.1,505.0 L702.7,499.0 L704.9,493.0 L707.6,488.0 L710.2,483.0 L713.4,477.0 L716.0,471.7 L719.0,466.9 L722.0,461.6 L725.1,456.0 L728.0,450.6 L731.6,445.0 L735.0,440.2 L738.1,435.0 L741.3,430.0 L744.5,425.0 L748.0,420.0 L751.0,415.4 L754.2,411.0 L758.0,406.0 L761.0,401.7 L765.0,397.3 L768.7,393.0 L772.1,389.0 L776.0,384.8 L780.0,380.7 L784.0,376.8 L788.2,373.0 L792.0,368.9 L796.2,365.0 L800.8,361.0 L805.0,357.1 L809.0,353.7 L813.6,350.0 L818.0,346.7 L822.0,342.9 L827.0,339.4 L831.7,336.0 L836.0,333.0 L841.0,329.8 L846.0,326.8 L851.5,323.0 L857.0,320.0 L862.1,317.0 L867.2,314.0 L873.0,311.3 L878.0,308.7 L883.0,305.9 L889.0,303.4 L894.1,301.0 L900.0,298.8 L907.0,296.2 L912.5,294.0 L918.0,292.0 L924.6,290.0 L930.0,287.8 L936.9,286.0 L942.5,284.0 L949.0,282.4 L955.2,281.0 L962.0,279.5 L969.0,278.4 L976.0,277.5 L983.0,276.9 L991.0,276.2 L998.0,275.5 L1005.0,274.8 L1013.0,274.1 L1020.0,273.6 L1027.0,272.9 L1035.0,272.2 L1039.0,271.8 M640.6,790.0 L641.4,783.0 L642.1,776.0 L642.9,768.0 L643.6,761.0 L644.4,754.0 L645.3,747.0 L646.1,740.0 L647.0,733.0 L647.9,725.0 L648.9,718.0 L650.0,711.7 L651.3,705.0 L652.8,698.0 L654.3,692.0 L655.8,685.0 L657.1,679.0 L658.6,672.0 L660.0,666.0 L662.0,659.3 L663.4,653.0 L665.3,647.0 L667.0,640.2 L668.9,634.0 L670.3,628.0 L672.5,622.0 L674.3,616.0 L676.3,610.0 L678.3,604.0 L680.1,598.0 L682.5,592.0 L684.4,586.0 L686.2,580.0 L688.3,574.0 L690.6,568.0 L692.8,562.0 L694.4,556.0 L696.4,550.0 L698.8,544.0 L701.0,538.3 L703.0,532.5 L705.0,526.1 L707.1,521.0 L709.5,515.0 L712.0,509.5 L714.2,504.0 L716.7,498.0 L719.3,493.0 L722.0,487.6 L724.9,482.0 L727.3,477.0 L730.3,472.0 L733.3,467.0 L736.1,462.0 L739.0,456.6 L742.0,452.0 L745.7,447.0 L748.8,442.0 L752.0,437.0 L755.0,432.4 L758.0,427.7 L761.5,423.0 L764.8,418.0 L768.0,413.7 L771.5,409.0 L775.2,405.0 L779.0,400.3 L782.9,396.0 L786.6,392.0 L790.5,388.0 L794.9,384.0 L798.9,380.0 L802.9,376.0 L807.0,372.3 L811.0,368.3 L815.0,365.0 L819.7,361.0 L824.0,357.6 L828.3,354.0 L833.0,350.3 L837.6,347.0 L842.0,343.9 L847.0,340.6 L852.0,337.5 L857.0,334.1 L862.0,331.3 L867.0,328.4 L872.0,325.4 L877.0,322.7 L882.7,320.0 L888.0,317.2 L893.4,315.0 L899.0,312.4 L905.0,310.2 L911.0,308.1 L916.3,306.0 L922.0,303.8 L929.0,302.0 L934.0,299.9 L941.0,298.0 L947.0,296.1 L953.0,294.4 L959.4,293.0 L966.0,291.8 L973.0,290.8 L981.0,290.2 L988.0,289.9 L996.0,289.3 L1003.0,288.8 L1011.0,288.2 L1018.0,287.9 L1026.0,287.4 L1033.0,286.9 L1038.0,286.6 M690.2,799.0 L690.1,791.0 L690.1,783.0 L690.3,775.0 L690.6,767.0 L690.8,759.0 L691.4,752.0 L691.9,744.0 L692.5,737.0 L693.5,730.0 L694.0,723.0 L695.4,716.0 L696.8,709.0 L697.9,702.0 L699.2,696.0 L700.8,689.0 L702.4,683.0 L703.9,676.0 L705.2,670.0 L707.0,663.0 L708.5,657.0 L710.0,651.0 L711.8,644.0 L713.6,638.0 L715.2,632.0 L717.0,626.0 L718.7,619.0 L720.7,613.0 L722.5,607.0 L724.3,601.0 L726.0,594.8 L728.0,588.3 L730.0,582.3 L731.4,576.0 L733.2,570.0 L735.2,564.0 L737.2,558.0 L739.1,552.0 L741.0,545.4 L743.0,539.8 L745.2,534.0 L747.4,528.0 L749.8,522.0 L752.0,516.2 L754.5,511.0 L757.0,505.6 L759.9,500.0 L762.3,495.0 L765.3,490.0 L768.3,485.0 L771.1,480.0 L774.1,475.0 L777.5,470.0 L781.0,465.2 L784.0,460.6 L787.0,455.9 L790.4,451.0 L793.8,446.0 L797.0,441.8 L800.3,437.0 L804.0,432.7 L807.7,428.0 L811.2,424.0 L815.0,419.7 L819.0,415.6 L823.0,411.6 L827.0,407.6 L831.0,403.6 L835.0,399.8 L839.0,395.6 L843.4,392.0 L848.0,388.2 L852.0,384.9 L856.8,381.0 L861.0,378.0 L866.0,374.8 L871.0,371.4 L875.9,368.0 L880.5,365.0 L885.8,362.0 L890.7,359.0 L896.0,356.7 L901.0,353.8 L906.6,351.0 L912.0,348.8 L918.0,346.3 L924.0,344.5 L930.0,342.6 L936.0,340.7 L942.0,339.0 L949.0,337.1 L955.0,335.3 L961.0,333.8 L968.0,332.4 L975.0,331.8 L983.0,331.7 L991.0,331.9 L999.0,332.0 L1006.0,332.1 L1014.0,332.4 L1022.0,332.5 L1022.0,332.5 M728.9,799.0 L728.2,791.0 L727.8,784.0 L727.5,776.0 L727.3,768.0 L727.1,760.0 L727.5,752.0 L727.8,744.0 L728.2,737.0 L729.2,730.0 L729.9,722.0 L731.0,715.0 L732.2,709.0 L733.4,702.0 L735.0,695.0 L736.2,689.0 L737.9,682.0 L739.2,676.0 L740.6,669.0 L742.0,662.5 L743.8,656.0 L745.1,650.0 L747.0,643.0 L748.4,637.0 L750.0,631.0 L751.9,624.0 L753.4,618.0 L755.0,611.6 L756.7,605.0 L758.4,599.0 L760.0,592.3 L761.6,586.0 L763.2,580.0 L765.1,574.0 L767.0,567.6 L768.7,561.0 L770.6,555.0 L772.4,549.0 L774.6,543.0 L777.0,537.4 L779.0,531.2 L781.3,526.0 L783.6,520.0 L786.5,515.0 L789.0,509.4 L792.0,504.4 L795.0,499.1 L798.0,494.1 L801.0,489.5 L804.2,485.0 L807.8,480.0 L811.0,475.2 L814.0,470.6 L817.2,466.0 L820.8,461.0 L824.0,456.9 L827.8,452.0 L831.1,448.0 L835.0,443.2 L839.0,439.0 L842.6,435.0 L846.7,431.0 L850.6,427.0 L854.7,423.0 L858.6,419.0 L862.5,415.0 L867.0,411.4 L871.2,408.0 L876.0,404.3 L880.6,401.0 L885.0,397.9 L890.0,394.3 L895.0,391.2 L900.0,388.2 L905.0,385.3 L910.0,382.8 L915.0,380.0 L921.0,377.3 L926.9,375.0 L932.0,373.0 L938.8,371.0 L945.0,369.4 L951.0,367.7 L958.0,366.1 L964.0,364.8 L972.0,364.0 L979.0,363.9 L986.0,364.1 L994.0,364.8 L1001.0,365.3 L1004.0,365.6 M758.4,799.0 L757.5,792.0 L756.5,785.0 L755.9,778.0 L755.3,770.0 L755.2,762.0 L755.0,755.0 L755.1,748.0 L755.4,740.0 L756.0,732.6 L756.7,725.0 L757.8,718.0 L758.9,711.0 L760.1,705.0 L761.1,698.0 L762.7,691.0 L764.2,685.0 L765.3,678.0 L766.9,671.0 L768.0,664.9 L769.5,658.0 L771.0,651.7 L772.5,645.0 L774.0,638.7 L775.5,632.0 L777.0,625.4 L778.5,619.0 L780.0,612.8 L781.6,606.0 L783.0,599.6 L784.5,593.0 L786.1,587.0 L788.0,580.5 L789.8,574.0 L791.3,568.0 L793.1,562.0 L795.0,555.0 L797.1,550.0 L799.1,544.0 L801.8,538.0 L803.9,532.0 L806.3,527.0 L809.0,521.5 L812.0,516.1 L814.7,511.0 L818.0,506.0 L821.0,501.2 L824.0,497.0 L827.9,492.0 L831.0,487.3 L834.0,482.7 L837.4,478.0 L841.0,473.3 L844.3,469.0 L848.0,464.4 L851.5,460.0 L855.3,456.0 L859.0,451.6 L863.0,447.6 L867.0,443.5 L871.0,439.6 L875.0,435.3 L879.0,431.1 L883.0,428.0 L888.0,424.0 L892.1,421.0 L897.0,417.2 L901.5,414.0 L906.3,411.0 L911.0,408.0 L916.4,405.0 L922.0,402.1 L927.0,399.4 L933.0,397.2 L938.3,395.0 L944.1,393.0 L951.0,391.2 L957.0,389.8 L964.0,388.5 L972.0,388.1 L978.0,388.3 L985.0,389.0 L985.0,389.0 M779.4,799.0 L777.9,793.0 L776.7,786.0 L775.6,779.0 L775.0,772.0 L774.9,764.0 L774.1,756.0 L774.2,748.0 L774.3,740.0 L775.0,732.0 L775.5,725.0 L776.6,718.0 L777.4,711.0 L778.7,704.0 L779.8,697.0 L781.4,691.0 L782.9,684.0 L783.8,677.0 L785.1,671.0 L786.2,664.0 L788.0,658.0 L789.0,650.7 L790.6,644.0 L791.9,637.0 L793.4,631.0 L795.0,624.7 L796.0,618.0 L797.7,611.0 L799.0,604.0 L800.3,598.0 L802.0,591.8 L803.8,585.0 L805.2,579.0 L807.0,572.6 L808.8,566.0 L810.5,560.0 L813.0,554.5 L814.9,548.0 L817.0,543.0 L819.1,537.0 L822.1,532.0 L824.7,526.0 L827.7,521.0 L830.6,516.0 L833.8,511.0 L837.0,506.3 L840.7,502.0 L843.9,497.0 L847.0,492.5 L850.2,488.0 L854.0,483.4 L857.0,479.0 L861.0,474.4 L864.2,470.0 L868.2,466.0 L872.0,461.3 L876.0,457.3 L880.0,453.3 L884.0,449.4 L887.6,445.0 L892.0,441.1 L896.2,438.0 L901.0,434.0 L905.0,430.8 L910.0,427.1 L915.0,424.4 L919.8,421.0 L925.0,418.4 L930.0,415.5 L935.0,412.9 L941.0,410.9 L947.0,408.4 L953.0,406.8 L960.0,405.1 L967.0,404.6 L973.0,404.4 M1037.0,237.0 L1087.0,235.0 L1128.0,242.0 C1164.0,249.0 1200.0,260.0 1231.0,285.0 M1041.0,269.0 L1088.0,268.0 L1131.0,278.0 C1167.0,290.0 1203.0,307.0 1235.0,328.0 M1041.0,278.0 L1086.0,276.0 L1130.0,288.0 C1167.0,301.0 1203.0,318.0 1234.0,338.0 M1031.0,316.0 L1070.0,316.0 L1115.5,333.5 C1154.0,353.0 1191.0,379.0 1224.7,393.3 M1016.0,347.0 L1047.0,347.0 L1097.5,369.0 C1137.6,390.0 1168.0,417.6 1208.8,437.8 M1000.0,373.0 L1024.0,374.0 L1077.4,397.5 C1117.8,420.6 1142.0,448.6 1187.6,472.8 M982.0,394.0 L1004.0,395.0 L1047.7,439.0 C1087.0,469.0 1126.5,487.0 1168.5,496.0 M1032.0,222.0 C1032.8,224.5 1035.5,229.2 1037.0,237.0 C1038.5,244.8 1040.3,262.2 1041.0,269.0 C1041.7,275.8 1042.7,270.2 1041.0,278.0 C1039.3,285.8 1035.2,304.5 1031.0,316.0 C1026.8,327.5 1021.2,337.5 1016.0,347.0 C1010.8,356.5 1005.7,365.2 1000.0,373.0 C994.3,380.8 987.8,386.8 982.0,394.0 C976.2,401.2 967.8,412.3 965.0,416.0 M1083.0,219.0 C1083.7,221.7 1086.2,226.8 1087.0,235.0 C1087.8,243.2 1088.2,261.2 1088.0,268.0 C1087.8,274.8 1089.0,268.0 1086.0,276.0 C1083.0,284.0 1076.5,304.2 1070.0,316.0 C1063.5,327.8 1054.7,337.3 1047.0,347.0 C1039.3,356.7 1031.2,366.0 1024.0,374.0 C1016.8,382.0 1010.0,387.3 1004.0,395.0 C998.0,402.7 990.7,415.8 988.0,420.0 M1124.0,223.0 C1124.7,226.2 1126.8,232.8 1128.0,242.0 C1129.2,251.2 1130.7,270.3 1131.0,278.0 C1131.3,285.7 1132.6,278.8 1130.0,288.0 C1127.4,297.2 1120.9,320.0 1115.5,333.5 C1110.1,347.0 1103.8,358.3 1097.5,369.0 C1091.2,379.7 1085.7,385.8 1077.4,397.5 C1069.1,409.2 1056.9,429.1 1047.7,439.0 C1038.5,448.9 1026.5,454.0 1022.3,457.0 M673.0,456.0 C675.0,458.2 679.7,463.5 685.0,469.0 C690.3,474.5 700.0,483.5 705.0,489.0 C710.0,494.5 708.1,494.3 715.0,502.0 C721.9,509.7 737.0,524.8 746.5,535.0 C756.0,545.2 764.8,553.8 772.0,563.0 C779.2,572.2 785.3,582.3 790.0,590.5 C794.7,598.7 796.8,604.2 800.0,612.0 C803.2,619.8 807.5,632.8 809.0,637.0 M570.0,778.0 C574.0,778.8 584.8,780.9 594.0,782.5 C603.2,784.1 616.9,786.2 625.0,787.5 C633.1,788.8 631.2,788.2 642.5,790.0 C653.8,791.8 677.5,795.4 692.5,798.0 C707.5,800.6 720.6,803.1 732.5,805.5 C744.4,807.9 754.8,810.1 764.0,812.5 C773.2,814.9 780.5,818.3 787.5,819.7 C794.5,821.1 802.9,820.8 806.0,821.0 M538.0,828.0 C541.1,829.0 547.0,831.8 556.7,834.0 C566.4,836.2 587.5,839.6 596.0,841.0 C604.5,842.4 596.2,841.3 608.0,842.5 C619.8,843.7 649.3,846.3 666.7,848.0 C684.1,849.7 698.5,851.3 712.5,852.5 C726.5,853.7 740.2,854.0 751.0,855.0 C761.8,856.0 769.3,857.6 777.5,858.7 C785.7,859.8 796.2,861.2 800.0,861.7 M518.0,863.0 C521.0,863.8 526.2,865.9 536.0,868.0 C545.8,870.1 568.1,874.1 576.7,875.8 C585.3,877.5 575.8,877.3 587.5,878.0 C599.2,878.7 628.8,879.5 646.7,880.0 C664.6,880.5 680.5,881.0 695.0,881.0 C709.5,881.0 722.8,880.3 734.0,880.0 C745.2,879.7 754.0,879.3 762.5,879.0 C771.0,878.7 781.2,878.2 785.0,878.0 M570.0,778.0 C564.7,786.3 546.7,813.8 538.0,828.0 C529.3,842.2 521.3,857.2 518.0,863.0 M594.0,782.5 C587.8,791.1 566.4,819.8 556.7,834.0 C547.0,848.2 539.5,862.3 536.0,868.0 M625.0,787.5 C620.2,796.4 604.0,826.3 596.0,841.0 C588.0,855.7 579.9,870.0 576.7,875.8 M642.5,790.0 C636.8,798.8 617.2,827.8 608.0,842.5 C598.8,857.2 590.9,872.1 587.5,878.0 M692.5,798.0 C688.2,806.3 674.3,834.3 666.7,848.0 C659.1,861.7 650.0,874.7 646.7,880.0 M732.5,805.5 C729.2,813.3 718.8,839.9 712.5,852.5 C706.2,865.1 697.9,876.2 695.0,881.0 M764.0,812.5 C761.8,819.6 756.0,843.8 751.0,855.0 C746.0,866.2 736.8,875.8 734.0,880.0 M787.5,819.7 C785.8,826.2 781.7,848.8 777.5,858.7 C773.3,868.6 765.0,875.6 762.5,879.0 M806.0,821.0 C805.0,827.8 803.5,852.2 800.0,861.7 C796.5,871.2 787.5,875.3 785.0,878.0" fill="none" stroke="#7272ff" stroke-width="1.1"/>
<path d="M515.0,864.0 C511.8,860.5 516.5,854.0 518.0,850.0 C519.5,846.0 521.0,844.0 524.0,840.0 C527.0,836.0 530.8,833.2 536.0,826.0 C541.2,818.8 549.8,805.0 555.0,797.0 C560.2,789.0 564.2,782.5 567.0,778.0 C569.8,773.5 570.7,774.3 572.0,770.0 C573.3,765.7 572.8,763.7 575.0,752.0 C577.2,740.3 581.3,717.3 585.0,700.0 C588.7,682.7 592.3,665.3 597.0,648.0 C601.7,630.7 606.8,613.3 613.0,596.0 C619.2,578.7 626.8,561.3 634.0,544.0 C641.2,526.7 648.7,508.0 656.0,492.0 C663.3,476.0 668.3,465.2 678.0,448.0 C687.7,430.8 703.5,404.3 714.0,389.0 C724.5,373.7 729.8,367.7 741.0,356.0 C752.2,344.3 767.5,330.2 781.0,319.0 C794.5,307.8 806.2,298.7 822.0,289.0 C837.8,279.3 858.0,269.2 876.0,261.0 C894.0,252.8 909.3,245.8 930.0,240.0 C950.7,234.2 981.7,229.5 1000.0,226.0 C1018.3,222.5 1026.5,220.5 1040.0,219.0 C1053.5,217.5 1066.3,216.5 1081.0,217.0 C1095.7,217.5 1111.7,219.2 1128.0,222.0 C1144.3,224.8 1164.8,228.7 1179.0,234.0 C1193.2,239.3 1204.5,247.8 1213.0,254.0 C1221.5,260.2 1226.2,263.7 1230.0,271.0 C1233.8,278.3 1234.7,287.8 1236.0,298.0 C1237.3,308.2 1238.5,319.2 1238.0,332.0 C1237.5,344.8 1235.0,363.8 1233.0,375.0 C1231.0,386.2 1229.3,389.3 1226.0,399.0 C1222.7,408.7 1218.5,421.8 1213.0,433.0 C1207.5,444.2 1200.3,456.0 1193.0,466.0 C1185.7,476.0 1177.0,485.7 1169.0,493.0 C1161.0,500.3 1153.5,506.8 1145.0,510.0 C1136.5,513.2 1127.5,512.8 1118.0,512.0 C1108.5,511.2 1098.3,508.7 1088.0,505.0 C1077.7,501.3 1066.2,497.2 1056.0,490.0 C1045.8,482.8 1035.7,470.0 1027.0,462.0 C1018.3,454.0 1010.5,448.3 1004.0,442.0 C997.5,435.7 992.8,428.0 988.0,424.0 C983.2,420.0 980.0,419.0 975.0,418.0 C970.0,417.0 965.7,416.0 958.0,418.0 C950.3,420.0 937.7,425.3 929.0,430.0 C920.3,434.7 913.7,439.7 906.0,446.0 C898.3,452.3 891.3,458.7 883.0,468.0 C874.7,477.3 864.5,490.0 856.0,502.0 C847.5,514.0 838.5,526.0 832.0,540.0 C825.5,554.0 821.2,570.5 817.0,586.0 C812.8,601.5 810.2,617.5 807.0,633.0 C803.8,648.5 800.8,663.0 798.0,679.0 C795.2,695.0 791.3,714.3 790.0,729.0 C788.7,743.7 789.0,755.5 790.0,767.0 C791.0,778.5 793.3,789.2 796.0,798.0 C798.7,806.8 804.0,813.8 806.0,820.0 C808.0,826.2 808.0,829.7 808.0,835.0 C808.0,840.3 807.5,846.3 806.0,852.0 C804.5,857.7 801.7,864.7 799.0,869.0 C796.3,873.3 797.3,876.0 790.0,878.0 C782.7,880.0 770.0,880.3 755.0,881.0 C740.0,881.7 718.2,882.0 700.0,882.0 C681.8,882.0 661.2,881.5 646.0,881.0 C630.8,880.5 621.2,879.7 609.0,879.0 C596.8,878.3 585.0,878.3 573.0,877.0 C561.0,875.7 546.7,873.2 537.0,871.0 C527.3,868.8 518.2,867.5 515.0,864.0Z M593.3,781.0 L594.6,774.0 L596.0,767.9 L597.5,761.0 L598.7,754.0 L599.8,747.0 L600.9,740.0 L602.0,733.0 L602.9,726.0 L603.9,719.0 L604.9,712.0 L606.1,706.0 L607.5,699.0 L609.0,692.2 L610.2,686.0 L612.0,679.0 L613.4,673.0 L615.0,666.4 L616.3,660.0 L618.0,653.1 L619.5,647.0 L621.7,641.0 L623.0,635.0 L625.0,628.3 L626.9,622.0 L629.0,616.0 L630.5,610.0 L632.8,604.0 L635.0,598.3 L637.0,592.0 L639.1,587.0 L641.0,580.5 L643.6,575.0 L645.9,569.0 L648.0,563.6 L650.3,558.0 L652.4,552.0 L655.0,546.8 L657.0,540.4 L659.0,534.9 L661.5,529.0 L664.0,523.5 L666.2,518.0 L668.0,511.8 L670.5,506.0 L673.0,500.8 L675.7,495.0 L678.1,490.0 L680.6,484.0 L683.0,478.8 L685.9,473.0 L688.9,468.0 L691.3,463.0 L694.0,457.8 L697.3,453.0 L700.0,447.7 L703.0,442.0 L705.8,437.0 L709.0,432.1 L712.0,427.8 L715.0,422.4 L718.0,417.6 L721.0,412.7 L724.4,408.0 L727.5,403.0 L731.0,398.3 L734.2,394.0 L737.5,389.0 L741.0,384.7 L744.7,380.0 L748.8,376.0 L752.0,371.9 L756.0,367.8 L760.0,363.7 L764.0,359.7 L768.5,356.0 L772.3,352.0 L776.5,348.0 L781.0,344.2 L785.0,340.3 L789.3,337.0 L793.4,333.0 L798.0,329.8 L802.4,326.0 L806.9,322.0 L811.2,319.0 L816.0,315.6 L821.0,312.1 L825.4,309.0 L830.5,306.0 L835.5,303.0 L840.2,300.0 L845.9,297.0 L850.9,294.0 L856.0,291.1 L861.0,288.7 L866.7,286.0 L871.9,283.0 L877.0,280.9 L883.0,278.0 L888.2,276.0 L894.0,273.8 L900.0,271.0 L905.0,268.7 L911.5,267.0 L917.0,264.4 L923.0,262.6 L929.0,260.5 L935.0,258.6 L942.0,257.0 L948.0,255.5 L955.0,254.3 L961.0,252.9 L968.0,251.4 L975.0,250.6 L982.0,249.6 L989.0,248.7 L996.0,247.6 L1003.0,246.5 L1010.0,245.4 L1017.0,244.6 L1024.0,243.4 L1031.0,242.4 L1035.0,241.9 M625.1,787.0 L626.3,780.0 L627.1,773.0 L628.0,766.0 L629.0,758.0 L630.0,751.0 L630.9,743.0 L631.8,736.0 L632.8,729.0 L633.8,722.0 L634.7,715.0 L636.0,708.0 L637.2,702.0 L638.7,695.0 L640.2,689.0 L641.8,682.0 L643.1,676.0 L644.6,669.0 L646.0,663.0 L648.0,656.2 L649.7,650.0 L651.0,643.8 L653.1,638.0 L655.0,631.6 L656.7,625.0 L658.5,619.0 L660.7,613.0 L662.3,607.0 L665.0,600.3 L666.7,594.0 L669.0,588.5 L671.2,583.0 L673.1,577.0 L675.2,571.0 L677.3,565.0 L679.9,559.0 L681.7,553.0 L683.6,547.0 L686.0,541.0 L688.8,534.0 L690.9,528.0 L692.6,522.0 L695.0,516.7 L697.9,510.0 L700.1,505.0 L702.7,499.0 L704.9,493.0 L707.6,488.0 L710.2,483.0 L713.4,477.0 L716.0,471.7 L719.0,466.9 L722.0,461.6 L725.1,456.0 L728.0,450.6 L731.6,445.0 L735.0,440.2 L738.1,435.0 L741.3,430.0 L744.5,425.0 L748.0,420.0 L751.0,415.4 L754.2,411.0 L758.0,406.0 L761.0,401.7 L765.0,397.3 L768.7,393.0 L772.1,389.0 L776.0,384.8 L780.0,380.7 L784.0,376.8 L788.2,373.0 L792.0,368.9 L796.2,365.0 L800.8,361.0 L805.0,357.1 L809.0,353.7 L813.6,350.0 L818.0,346.7 L822.0,342.9 L827.0,339.4 L831.7,336.0 L836.0,333.0 L841.0,329.8 L846.0,326.8 L851.5,323.0 L857.0,320.0 L862.1,317.0 L867.2,314.0 L873.0,311.3 L878.0,308.7 L883.0,305.9 L889.0,303.4 L894.1,301.0 L900.0,298.8 L907.0,296.2 L912.5,294.0 L918.0,292.0 L924.6,290.0 L930.0,287.8 L936.9,286.0 L942.5,284.0 L949.0,282.4 L955.2,281.0 L962.0,279.5 L969.0,278.4 L976.0,277.5 L983.0,276.9 L991.0,276.2 L998.0,275.5 L1005.0,274.8 L1013.0,274.1 L1020.0,273.6 L1027.0,272.9 L1035.0,272.2 L1039.0,271.8 M640.6,790.0 L641.4,783.0 L642.1,776.0 L642.9,768.0 L643.6,761.0 L644.4,754.0 L645.3,747.0 L646.1,740.0 L647.0,733.0 L647.9,725.0 L648.9,718.0 L650.0,711.7 L651.3,705.0 L652.8,698.0 L654.3,692.0 L655.8,685.0 L657.1,679.0 L658.6,672.0 L660.0,666.0 L662.0,659.3 L663.4,653.0 L665.3,647.0 L667.0,640.2 L668.9,634.0 L670.3,628.0 L672.5,622.0 L674.3,616.0 L676.3,610.0 L678.3,604.0 L680.1,598.0 L682.5,592.0 L684.4,586.0 L686.2,580.0 L688.3,574.0 L690.6,568.0 L692.8,562.0 L694.4,556.0 L696.4,550.0 L698.8,544.0 L701.0,538.3 L703.0,532.5 L705.0,526.1 L707.1,521.0 L709.5,515.0 L712.0,509.5 L714.2,504.0 L716.7,498.0 L719.3,493.0 L722.0,487.6 L724.9,482.0 L727.3,477.0 L730.3,472.0 L733.3,467.0 L736.1,462.0 L739.0,456.6 L742.0,452.0 L745.7,447.0 L748.8,442.0 L752.0,437.0 L755.0,432.4 L758.0,427.7 L761.5,423.0 L764.8,418.0 L768.0,413.7 L771.5,409.0 L775.2,405.0 L779.0,400.3 L782.9,396.0 L786.6,392.0 L790.5,388.0 L794.9,384.0 L798.9,380.0 L802.9,376.0 L807.0,372.3 L811.0,368.3 L815.0,365.0 L819.7,361.0 L824.0,357.6 L828.3,354.0 L833.0,350.3 L837.6,347.0 L842.0,343.9 L847.0,340.6 L852.0,337.5 L857.0,334.1 L862.0,331.3 L867.0,328.4 L872.0,325.4 L877.0,322.7 L882.7,320.0 L888.0,317.2 L893.4,315.0 L899.0,312.4 L905.0,310.2 L911.0,308.1 L916.3,306.0 L922.0,303.8 L929.0,302.0 L934.0,299.9 L941.0,298.0 L947.0,296.1 L953.0,294.4 L959.4,293.0 L966.0,291.8 L973.0,290.8 L981.0,290.2 L988.0,289.9 L996.0,289.3 L1003.0,288.8 L1011.0,288.2 L1018.0,287.9 L1026.0,287.4 L1033.0,286.9 L1038.0,286.6 M690.2,799.0 L690.1,791.0 L690.1,783.0 L690.3,775.0 L690.6,767.0 L690.8,759.0 L691.4,752.0 L691.9,744.0 L692.5,737.0 L693.5,730.0 L694.0,723.0 L695.4,716.0 L696.8,709.0 L697.9,702.0 L699.2,696.0 L700.8,689.0 L702.4,683.0 L703.9,676.0 L705.2,670.0 L707.0,663.0 L708.5,657.0 L710.0,651.0 L711.8,644.0 L713.6,638.0 L715.2,632.0 L717.0,626.0 L718.7,619.0 L720.7,613.0 L722.5,607.0 L724.3,601.0 L726.0,594.8 L728.0,588.3 L730.0,582.3 L731.4,576.0 L733.2,570.0 L735.2,564.0 L737.2,558.0 L739.1,552.0 L741.0,545.4 L743.0,539.8 L745.2,534.0 L747.4,528.0 L749.8,522.0 L752.0,516.2 L754.5,511.0 L757.0,505.6 L759.9,500.0 L762.3,495.0 L765.3,490.0 L768.3,485.0 L771.1,480.0 L774.1,475.0 L777.5,470.0 L781.0,465.2 L784.0,460.6 L787.0,455.9 L790.4,451.0 L793.8,446.0 L797.0,441.8 L800.3,437.0 L804.0,432.7 L807.7,428.0 L811.2,424.0 L815.0,419.7 L819.0,415.6 L823.0,411.6 L827.0,407.6 L831.0,403.6 L835.0,399.8 L839.0,395.6 L843.4,392.0 L848.0,388.2 L852.0,384.9 L856.8,381.0 L861.0,378.0 L866.0,374.8 L871.0,371.4 L875.9,368.0 L880.5,365.0 L885.8,362.0 L890.7,359.0 L896.0,356.7 L901.0,353.8 L906.6,351.0 L912.0,348.8 L918.0,346.3 L924.0,344.5 L930.0,342.6 L936.0,340.7 L942.0,339.0 L949.0,337.1 L955.0,335.3 L961.0,333.8 L968.0,332.4 L975.0,331.8 L983.0,331.7 L991.0,331.9 L999.0,332.0 L1006.0,332.1 L1014.0,332.4 L1022.0,332.5 L1022.0,332.5 M728.9,799.0 L728.2,791.0 L727.8,784.0 L727.5,776.0 L727.3,768.0 L727.1,760.0 L727.5,752.0 L727.8,744.0 L728.2,737.0 L729.2,730.0 L729.9,722.0 L731.0,715.0 L732.2,709.0 L733.4,702.0 L735.0,695.0 L736.2,689.0 L737.9,682.0 L739.2,676.0 L740.6,669.0 L742.0,662.5 L743.8,656.0 L745.1,650.0 L747.0,643.0 L748.4,637.0 L750.0,631.0 L751.9,624.0 L753.4,618.0 L755.0,611.6 L756.7,605.0 L758.4,599.0 L760.0,592.3 L761.6,586.0 L763.2,580.0 L765.1,574.0 L767.0,567.6 L768.7,561.0 L770.6,555.0 L772.4,549.0 L774.6,543.0 L777.0,537.4 L779.0,531.2 L781.3,526.0 L783.6,520.0 L786.5,515.0 L789.0,509.4 L792.0,504.4 L795.0,499.1 L798.0,494.1 L801.0,489.5 L804.2,485.0 L807.8,480.0 L811.0,475.2 L814.0,470.6 L817.2,466.0 L820.8,461.0 L824.0,456.9 L827.8,452.0 L831.1,448.0 L835.0,443.2 L839.0,439.0 L842.6,435.0 L846.7,431.0 L850.6,427.0 L854.7,423.0 L858.6,419.0 L862.5,415.0 L867.0,411.4 L871.2,408.0 L876.0,404.3 L880.6,401.0 L885.0,397.9 L890.0,394.3 L895.0,391.2 L900.0,388.2 L905.0,385.3 L910.0,382.8 L915.0,380.0 L921.0,377.3 L926.9,375.0 L932.0,373.0 L938.8,371.0 L945.0,369.4 L951.0,367.7 L958.0,366.1 L964.0,364.8 L972.0,364.0 L979.0,363.9 L986.0,364.1 L994.0,364.8 L1001.0,365.3 L1004.0,365.6 M758.4,799.0 L757.5,792.0 L756.5,785.0 L755.9,778.0 L755.3,770.0 L755.2,762.0 L755.0,755.0 L755.1,748.0 L755.4,740.0 L756.0,732.6 L756.7,725.0 L757.8,718.0 L758.9,711.0 L760.1,705.0 L761.1,698.0 L762.7,691.0 L764.2,685.0 L765.3,678.0 L766.9,671.0 L768.0,664.9 L769.5,658.0 L771.0,651.7 L772.5,645.0 L774.0,638.7 L775.5,632.0 L777.0,625.4 L778.5,619.0 L780.0,612.8 L781.6,606.0 L783.0,599.6 L784.5,593.0 L786.1,587.0 L788.0,580.5 L789.8,574.0 L791.3,568.0 L793.1,562.0 L795.0,555.0 L797.1,550.0 L799.1,544.0 L801.8,538.0 L803.9,532.0 L806.3,527.0 L809.0,521.5 L812.0,516.1 L814.7,511.0 L818.0,506.0 L821.0,501.2 L824.0,497.0 L827.9,492.0 L831.0,487.3 L834.0,482.7 L837.4,478.0 L841.0,473.3 L844.3,469.0 L848.0,464.4 L851.5,460.0 L855.3,456.0 L859.0,451.6 L863.0,447.6 L867.0,443.5 L871.0,439.6 L875.0,435.3 L879.0,431.1 L883.0,428.0 L888.0,424.0 L892.1,421.0 L897.0,417.2 L901.5,414.0 L906.3,411.0 L911.0,408.0 L916.4,405.0 L922.0,402.1 L927.0,399.4 L933.0,397.2 L938.3,395.0 L944.1,393.0 L951.0,391.2 L957.0,389.8 L964.0,388.5 L972.0,388.1 L978.0,388.3 L985.0,389.0 L985.0,389.0 M779.4,799.0 L777.9,793.0 L776.7,786.0 L775.6,779.0 L775.0,772.0 L774.9,764.0 L774.1,756.0 L774.2,748.0 L774.3,740.0 L775.0,732.0 L775.5,725.0 L776.6,718.0 L777.4,711.0 L778.7,704.0 L779.8,697.0 L781.4,691.0 L782.9,684.0 L783.8,677.0 L785.1,671.0 L786.2,664.0 L788.0,658.0 L789.0,650.7 L790.6,644.0 L791.9,637.0 L793.4,631.0 L795.0,624.7 L796.0,618.0 L797.7,611.0 L799.0,604.0 L800.3,598.0 L802.0,591.8 L803.8,585.0 L805.2,579.0 L807.0,572.6 L808.8,566.0 L810.5,560.0 L813.0,554.5 L814.9,548.0 L817.0,543.0 L819.1,537.0 L822.1,532.0 L824.7,526.0 L827.7,521.0 L830.6,516.0 L833.8,511.0 L837.0,506.3 L840.7,502.0 L843.9,497.0 L847.0,492.5 L850.2,488.0 L854.0,483.4 L857.0,479.0 L861.0,474.4 L864.2,470.0 L868.2,466.0 L872.0,461.3 L876.0,457.3 L880.0,453.3 L884.0,449.4 L887.6,445.0 L892.0,441.1 L896.2,438.0 L901.0,434.0 L905.0,430.8 L910.0,427.1 L915.0,424.4 L919.8,421.0 L925.0,418.4 L930.0,415.5 L935.0,412.9 L941.0,410.9 L947.0,408.4 L953.0,406.8 L960.0,405.1 L967.0,404.6 L973.0,404.4 M1037.0,237.0 L1087.0,235.0 L1128.0,242.0 C1164.0,249.0 1200.0,260.0 1231.0,285.0 M1041.0,269.0 L1088.0,268.0 L1131.0,278.0 C1167.0,290.0 1203.0,307.0 1235.0,328.0 M1041.0,278.0 L1086.0,276.0 L1130.0,288.0 C1167.0,301.0 1203.0,318.0 1234.0,338.0 M1031.0,316.0 L1070.0,316.0 L1115.5,333.5 C1154.0,353.0 1191.0,379.0 1224.7,393.3 M1016.0,347.0 L1047.0,347.0 L1097.5,369.0 C1137.6,390.0 1168.0,417.6 1208.8,437.8 M1000.0,373.0 L1024.0,374.0 L1077.4,397.5 C1117.8,420.6 1142.0,448.6 1187.6,472.8 M982.0,394.0 L1004.0,395.0 L1047.7,439.0 C1087.0,469.0 1126.5,487.0 1168.5,496.0 M1032.0,222.0 C1032.8,224.5 1035.5,229.2 1037.0,237.0 C1038.5,244.8 1040.3,262.2 1041.0,269.0 C1041.7,275.8 1042.7,270.2 1041.0,278.0 C1039.3,285.8 1035.2,304.5 1031.0,316.0 C1026.8,327.5 1021.2,337.5 1016.0,347.0 C1010.8,356.5 1005.7,365.2 1000.0,373.0 C994.3,380.8 987.8,386.8 982.0,394.0 C976.2,401.2 967.8,412.3 965.0,416.0 M1083.0,219.0 C1083.7,221.7 1086.2,226.8 1087.0,235.0 C1087.8,243.2 1088.2,261.2 1088.0,268.0 C1087.8,274.8 1089.0,268.0 1086.0,276.0 C1083.0,284.0 1076.5,304.2 1070.0,316.0 C1063.5,327.8 1054.7,337.3 1047.0,347.0 C1039.3,356.7 1031.2,366.0 1024.0,374.0 C1016.8,382.0 1010.0,387.3 1004.0,395.0 C998.0,402.7 990.7,415.8 988.0,420.0 M1124.0,223.0 C1124.7,226.2 1126.8,232.8 1128.0,242.0 C1129.2,251.2 1130.7,270.3 1131.0,278.0 C1131.3,285.7 1132.6,278.8 1130.0,288.0 C1127.4,297.2 1120.9,320.0 1115.5,333.5 C1110.1,347.0 1103.8,358.3 1097.5,369.0 C1091.2,379.7 1085.7,385.8 1077.4,397.5 C1069.1,409.2 1056.9,429.1 1047.7,439.0 C1038.5,448.9 1026.5,454.0 1022.3,457.0 M673.0,456.0 C675.0,458.2 679.7,463.5 685.0,469.0 C690.3,474.5 700.0,483.5 705.0,489.0 C710.0,494.5 708.1,494.3 715.0,502.0 C721.9,509.7 737.0,524.8 746.5,535.0 C756.0,545.2 764.8,553.8 772.0,563.0 C779.2,572.2 785.3,582.3 790.0,590.5 C794.7,598.7 796.8,604.2 800.0,612.0 C803.2,619.8 807.5,632.8 809.0,637.0 M570.0,778.0 C574.0,778.8 584.8,780.9 594.0,782.5 C603.2,784.1 616.9,786.2 625.0,787.5 C633.1,788.8 631.2,788.2 642.5,790.0 C653.8,791.8 677.5,795.4 692.5,798.0 C707.5,800.6 720.6,803.1 732.5,805.5 C744.4,807.9 754.8,810.1 764.0,812.5 C773.2,814.9 780.5,818.3 787.5,819.7 C794.5,821.1 802.9,820.8 806.0,821.0 M538.0,828.0 C541.1,829.0 547.0,831.8 556.7,834.0 C566.4,836.2 587.5,839.6 596.0,841.0 C604.5,842.4 596.2,841.3 608.0,842.5 C619.8,843.7 649.3,846.3 666.7,848.0 C684.1,849.7 698.5,851.3 712.5,852.5 C726.5,853.7 740.2,854.0 751.0,855.0 C761.8,856.0 769.3,857.6 777.5,858.7 C785.7,859.8 796.2,861.2 800.0,861.7 M518.0,863.0 C521.0,863.8 526.2,865.9 536.0,868.0 C545.8,870.1 568.1,874.1 576.7,875.8 C585.3,877.5 575.8,877.3 587.5,878.0 C599.2,878.7 628.8,879.5 646.7,880.0 C664.6,880.5 680.5,881.0 695.0,881.0 C709.5,881.0 722.8,880.3 734.0,880.0 C745.2,879.7 754.0,879.3 762.5,879.0 C771.0,878.7 781.2,878.2 785.0,878.0 M570.0,778.0 C564.7,786.3 546.7,813.8 538.0,828.0 C529.3,842.2 521.3,857.2 518.0,863.0 M594.0,782.5 C587.8,791.1 566.4,819.8 556.7,834.0 C547.0,848.2 539.5,862.3 536.0,868.0 M625.0,787.5 C620.2,796.4 604.0,826.3 596.0,841.0 C588.0,855.7 579.9,870.0 576.7,875.8 M642.5,790.0 C636.8,798.8 617.2,827.8 608.0,842.5 C598.8,857.2 590.9,872.1 587.5,878.0 M692.5,798.0 C688.2,806.3 674.3,834.3 666.7,848.0 C659.1,861.7 650.0,874.7 646.7,880.0 M732.5,805.5 C729.2,813.3 718.8,839.9 712.5,852.5 C706.2,865.1 697.9,876.2 695.0,881.0 M764.0,812.5 C761.8,819.6 756.0,843.8 751.0,855.0 C746.0,866.2 736.8,875.8 734.0,880.0 M787.5,819.7 C785.8,826.2 781.7,848.8 777.5,858.7 C773.3,868.6 765.0,875.6 762.5,879.0 M806.0,821.0 C805.0,827.8 803.5,852.2 800.0,861.7 C796.5,871.2 787.5,875.3 785.0,878.0" fill="none" stroke="#fff" stroke-width="1" stroke-dasharray="2 6"/>
<circle cx="756.0" cy="302.0" r="3.4" fill="#fff" stroke="#4a4ae0" stroke-width="1.7"/><circle cx="766.0" cy="319.0" r="3.4" fill="#fff" stroke="#4a4ae0" stroke-width="1.7"/><circle cx="886.0" cy="237.0" r="3.4" fill="#fff" stroke="#4a4ae0" stroke-width="1.7"/><circle cx="897.0" cy="251.0" r="3.4" fill="#fff" stroke="#4a4ae0" stroke-width="1.7"/><circle cx="593.0" cy="626.0" r="3.4" fill="#fff" stroke="#4a4ae0" stroke-width="1.7"/><circle cx="628.0" cy="542.0" r="3.4" fill="#fff" stroke="#4a4ae0" stroke-width="1.7"/><circle cx="1056.0" cy="497.0" r="3.4" fill="#fff" stroke="#4a4ae0" stroke-width="1.7"/><circle cx="1110.0" cy="521.0" r="3.4" fill="#fff" stroke="#4a4ae0" stroke-width="1.7"/><circle cx="1196.0" cy="238.0" r="3.4" fill="#fff" stroke="#4a4ae0" stroke-width="1.7"/><circle cx="1160.0" cy="227.0" r="3.4" fill="#fff" stroke="#4a4ae0" stroke-width="1.7"/><circle cx="910.0" cy="283.0" r="3.4" fill="#fff" stroke="#4a4ae0" stroke-width="1.7"/><circle cx="912.0" cy="292.0" r="3.4" fill="#fff" stroke="#4a4ae0" stroke-width="1.7"/><circle cx="922.0" cy="325.0" r="3.4" fill="#fff" stroke="#4a4ae0" stroke-width="1.7"/><circle cx="923.0" cy="353.0" r="3.4" fill="#fff" stroke="#4a4ae0" stroke-width="1.7"/><circle cx="920.0" cy="380.0" r="3.4" fill="#fff" stroke="#4a4ae0" stroke-width="1.7"/><circle cx="916.0" cy="402.0" r="3.4" fill="#fff" stroke="#4a4ae0" stroke-width="1.7"/><circle cx="911.0" cy="420.0" r="3.4" fill="#fff" stroke="#4a4ae0" stroke-width="1.7"/><circle cx="781.0" cy="345.0" r="3.4" fill="#fff" stroke="#4a4ae0" stroke-width="1.7"/><circle cx="789.0" cy="357.0" r="3.4" fill="#fff" stroke="#4a4ae0" stroke-width="1.7"/><circle cx="808.0" cy="400.0" r="3.4" fill="#fff" stroke="#4a4ae0" stroke-width="1.7"/><circle cx="818.0" cy="432.0" r="3.4" fill="#fff" stroke="#4a4ae0" stroke-width="1.7"/><circle cx="824.0" cy="463.0" r="3.4" fill="#fff" stroke="#4a4ae0" stroke-width="1.7"/><circle cx="828.0" cy="515.0" r="3.4" fill="#fff" stroke="#4a4ae0" stroke-width="1.7"/><circle cx="1164.0" cy="249.0" r="3.4" fill="#fff" stroke="#4a4ae0" stroke-width="1.7"/><circle cx="1167.0" cy="290.0" r="3.4" fill="#fff" stroke="#4a4ae0" stroke-width="1.7"/><circle cx="1167.0" cy="301.0" r="3.4" fill="#fff" stroke="#4a4ae0" stroke-width="1.7"/><circle cx="1154.0" cy="353.0" r="3.4" fill="#fff" stroke="#4a4ae0" stroke-width="1.7"/><circle cx="1137.6" cy="390.0" r="3.4" fill="#fff" stroke="#4a4ae0" stroke-width="1.7"/><circle cx="1117.8" cy="420.6" r="3.4" fill="#fff" stroke="#4a4ae0" stroke-width="1.7"/><circle cx="1087.0" cy="469.0" r="3.4" fill="#fff" stroke="#4a4ae0" stroke-width="1.7"/><circle cx="1126.5" cy="487.0" r="3.4" fill="#fff" stroke="#4a4ae0" stroke-width="1.7"/><circle cx="1142.0" cy="448.6" r="3.4" fill="#fff" stroke="#4a4ae0" stroke-width="1.7"/><circle cx="1168.0" cy="417.6" r="3.4" fill="#fff" stroke="#4a4ae0" stroke-width="1.7"/><circle cx="1191.0" cy="379.0" r="3.4" fill="#fff" stroke="#4a4ae0" stroke-width="1.7"/><circle cx="1203.0" cy="307.0" r="3.4" fill="#fff" stroke="#4a4ae0" stroke-width="1.7"/><circle cx="1203.0" cy="318.0" r="3.4" fill="#fff" stroke="#4a4ae0" stroke-width="1.7"/><circle cx="1200.0" cy="260.0" r="3.4" fill="#fff" stroke="#4a4ae0" stroke-width="1.7"/><circle cx="617.0" cy="600.0" r="3.4" fill="#fff" stroke="#4a4ae0" stroke-width="1.7"/><circle cx="640.0" cy="566.0" r="3.4" fill="#fff" stroke="#4a4ae0" stroke-width="1.7"/><circle cx="641.0" cy="660.0" r="3.4" fill="#fff" stroke="#4a4ae0" stroke-width="1.7"/><circle cx="663.0" cy="573.0" r="3.4" fill="#fff" stroke="#4a4ae0" stroke-width="1.7"/><circle cx="676.0" cy="592.0" r="3.4" fill="#fff" stroke="#4a4ae0" stroke-width="1.7"/><circle cx="697.0" cy="696.0" r="3.4" fill="#fff" stroke="#4a4ae0" stroke-width="1.7"/><circle cx="712.0" cy="617.0" r="3.4" fill="#fff" stroke="#4a4ae0" stroke-width="1.7"/><circle cx="728.0" cy="720.0" r="3.4" fill="#fff" stroke="#4a4ae0" stroke-width="1.7"/><circle cx="739.0" cy="641.0" r="3.4" fill="#fff" stroke="#4a4ae0" stroke-width="1.7"/><circle cx="755.0" cy="753.0" r="3.4" fill="#fff" stroke="#4a4ae0" stroke-width="1.7"/><circle cx="761.0" cy="669.0" r="3.4" fill="#fff" stroke="#4a4ae0" stroke-width="1.7"/><circle cx="774.0" cy="688.0" r="3.4" fill="#fff" stroke="#4a4ae0" stroke-width="1.7"/><circle cx="780.0" cy="778.0" r="3.4" fill="#fff" stroke="#4a4ae0" stroke-width="1.7"/><circle cx="795.0" cy="737.0" r="3.4" fill="#fff" stroke="#4a4ae0" stroke-width="1.7"/><circle cx="1044.0" cy="315.7" r="3.4" fill="#fff" stroke="#4a4ae0" stroke-width="1.7"/><circle cx="1057.0" cy="315.7" r="3.4" fill="#fff" stroke="#4a4ae0" stroke-width="1.7"/><circle cx="1085.0" cy="320.0" r="3.4" fill="#fff" stroke="#4a4ae0" stroke-width="1.7"/><circle cx="1100.0" cy="327.0" r="3.4" fill="#fff" stroke="#4a4ae0" stroke-width="1.7"/><circle cx="1026.0" cy="347.0" r="3.4" fill="#fff" stroke="#4a4ae0" stroke-width="1.7"/><circle cx="1037.0" cy="347.0" r="3.4" fill="#fff" stroke="#4a4ae0" stroke-width="1.7"/><circle cx="1066.0" cy="353.0" r="3.4" fill="#fff" stroke="#4a4ae0" stroke-width="1.7"/><circle cx="1082.0" cy="360.0" r="3.4" fill="#fff" stroke="#4a4ae0" stroke-width="1.7"/><circle cx="1045.0" cy="381.0" r="3.4" fill="#fff" stroke="#4a4ae0" stroke-width="1.7"/><circle cx="1062.0" cy="389.0" r="3.4" fill="#fff" stroke="#4a4ae0" stroke-width="1.7"/><circle cx="1020.0" cy="405.0" r="3.4" fill="#fff" stroke="#4a4ae0" stroke-width="1.7"/><circle cx="1033.0" cy="428.0" r="3.4" fill="#fff" stroke="#4a4ae0" stroke-width="1.7"/><circle cx="1109.9" cy="345.0" r="3.4" fill="#fff" stroke="#4a4ae0" stroke-width="1.7"/><circle cx="1104.4" cy="357.0" r="3.4" fill="#fff" stroke="#4a4ae0" stroke-width="1.7"/><circle cx="1091.6" cy="379.0" r="3.4" fill="#fff" stroke="#4a4ae0" stroke-width="1.7"/><circle cx="1085.0" cy="388.0" r="3.4" fill="#fff" stroke="#4a4ae0" stroke-width="1.7"/><circle cx="1068.9" cy="408.3" r="3.4" fill="#fff" stroke="#4a4ae0" stroke-width="1.7"/><circle cx="1057.0" cy="429.0" r="3.4" fill="#fff" stroke="#4a4ae0" stroke-width="1.7"/><circle cx="1037.0" cy="443.5" r="3.4" fill="#fff" stroke="#4a4ae0" stroke-width="1.7"/><circle cx="1033.0" cy="453.7" r="3.4" fill="#fff" stroke="#4a4ae0" stroke-width="1.7"/><circle cx="1230.0" cy="300.0" r="3.4" fill="#fff" stroke="#4a4ae0" stroke-width="1.7"/><circle cx="1235.0" cy="313.0" r="3.4" fill="#fff" stroke="#4a4ae0" stroke-width="1.7"/><circle cx="1233.0" cy="350.0" r="3.4" fill="#fff" stroke="#4a4ae0" stroke-width="1.7"/><circle cx="1232.0" cy="372.0" r="3.4" fill="#fff" stroke="#4a4ae0" stroke-width="1.7"/><circle cx="1218.0" cy="415.0" r="3.4" fill="#fff" stroke="#4a4ae0" stroke-width="1.7"/><circle cx="1200.0" cy="450.0" r="3.4" fill="#fff" stroke="#4a4ae0" stroke-width="1.7"/><circle cx="1180.0" cy="480.0" r="3.4" fill="#fff" stroke="#4a4ae0" stroke-width="1.7"/><circle cx="1160.0" cy="503.0" r="3.4" fill="#fff" stroke="#4a4ae0" stroke-width="1.7"/><circle cx="1152.0" cy="508.0" r="3.4" fill="#fff" stroke="#4a4ae0" stroke-width="1.7"/><circle cx="578.0" cy="779.5" r="3.4" fill="#fff" stroke="#4a4ae0" stroke-width="1.7"/><circle cx="586.0" cy="781.0" r="3.4" fill="#fff" stroke="#4a4ae0" stroke-width="1.7"/><circle cx="604.3" cy="784.2" r="3.4" fill="#fff" stroke="#4a4ae0" stroke-width="1.7"/><circle cx="614.7" cy="785.8" r="3.4" fill="#fff" stroke="#4a4ae0" stroke-width="1.7"/><circle cx="630.8" cy="788.3" r="3.4" fill="#fff" stroke="#4a4ae0" stroke-width="1.7"/><circle cx="659.2" cy="792.7" r="3.4" fill="#fff" stroke="#4a4ae0" stroke-width="1.7"/><circle cx="675.8" cy="795.3" r="3.4" fill="#fff" stroke="#4a4ae0" stroke-width="1.7"/><circle cx="705.8" cy="800.5" r="3.4" fill="#fff" stroke="#4a4ae0" stroke-width="1.7"/><circle cx="719.2" cy="803.0" r="3.4" fill="#fff" stroke="#4a4ae0" stroke-width="1.7"/><circle cx="743.0" cy="807.8" r="3.4" fill="#fff" stroke="#4a4ae0" stroke-width="1.7"/><circle cx="753.5" cy="810.2" r="3.4" fill="#fff" stroke="#4a4ae0" stroke-width="1.7"/><circle cx="771.8" cy="814.9" r="3.4" fill="#fff" stroke="#4a4ae0" stroke-width="1.7"/><circle cx="779.7" cy="817.3" r="3.4" fill="#fff" stroke="#4a4ae0" stroke-width="1.7"/><circle cx="793.7" cy="820.1" r="3.4" fill="#fff" stroke="#4a4ae0" stroke-width="1.7"/><circle cx="799.8" cy="820.6" r="3.4" fill="#fff" stroke="#4a4ae0" stroke-width="1.7"/><circle cx="544.2" cy="830.0" r="3.4" fill="#fff" stroke="#4a4ae0" stroke-width="1.7"/><circle cx="550.5" cy="832.0" r="3.4" fill="#fff" stroke="#4a4ae0" stroke-width="1.7"/><circle cx="569.8" cy="836.3" r="3.4" fill="#fff" stroke="#4a4ae0" stroke-width="1.7"/><circle cx="582.9" cy="838.7" r="3.4" fill="#fff" stroke="#4a4ae0" stroke-width="1.7"/><circle cx="627.6" cy="844.3" r="3.4" fill="#fff" stroke="#4a4ae0" stroke-width="1.7"/><circle cx="647.1" cy="846.2" r="3.4" fill="#fff" stroke="#4a4ae0" stroke-width="1.7"/><circle cx="682.0" cy="849.5" r="3.4" fill="#fff" stroke="#4a4ae0" stroke-width="1.7"/><circle cx="697.2" cy="851.0" r="3.4" fill="#fff" stroke="#4a4ae0" stroke-width="1.7"/><circle cx="725.3" cy="853.3" r="3.4" fill="#fff" stroke="#4a4ae0" stroke-width="1.7"/><circle cx="738.2" cy="854.2" r="3.4" fill="#fff" stroke="#4a4ae0" stroke-width="1.7"/><circle cx="759.8" cy="856.2" r="3.4" fill="#fff" stroke="#4a4ae0" stroke-width="1.7"/><circle cx="768.7" cy="857.5" r="3.4" fill="#fff" stroke="#4a4ae0" stroke-width="1.7"/><circle cx="785.0" cy="859.7" r="3.4" fill="#fff" stroke="#4a4ae0" stroke-width="1.7"/><circle cx="792.5" cy="860.7" r="3.4" fill="#fff" stroke="#4a4ae0" stroke-width="1.7"/><circle cx="524.0" cy="864.7" r="3.4" fill="#fff" stroke="#4a4ae0" stroke-width="1.7"/><circle cx="530.0" cy="866.3" r="3.4" fill="#fff" stroke="#4a4ae0" stroke-width="1.7"/><circle cx="549.6" cy="870.6" r="3.4" fill="#fff" stroke="#4a4ae0" stroke-width="1.7"/><circle cx="563.1" cy="873.2" r="3.4" fill="#fff" stroke="#4a4ae0" stroke-width="1.7"/><circle cx="607.2" cy="878.7" r="3.4" fill="#fff" stroke="#4a4ae0" stroke-width="1.7"/><circle cx="627.0" cy="879.3" r="3.4" fill="#fff" stroke="#4a4ae0" stroke-width="1.7"/><circle cx="662.8" cy="880.3" r="3.4" fill="#fff" stroke="#4a4ae0" stroke-width="1.7"/><circle cx="678.9" cy="880.7" r="3.4" fill="#fff" stroke="#4a4ae0" stroke-width="1.7"/><circle cx="708.0" cy="880.7" r="3.4" fill="#fff" stroke="#4a4ae0" stroke-width="1.7"/><circle cx="721.0" cy="880.3" r="3.4" fill="#fff" stroke="#4a4ae0" stroke-width="1.7"/><circle cx="743.5" cy="879.7" r="3.4" fill="#fff" stroke="#4a4ae0" stroke-width="1.7"/><circle cx="753.0" cy="879.3" r="3.4" fill="#fff" stroke="#4a4ae0" stroke-width="1.7"/><circle cx="770.0" cy="878.7" r="3.4" fill="#fff" stroke="#4a4ae0" stroke-width="1.7"/><circle cx="777.5" cy="878.3" r="3.4" fill="#fff" stroke="#4a4ae0" stroke-width="1.7"/><circle cx="677.0" cy="460.3" r="3.4" fill="#fff" stroke="#4a4ae0" stroke-width="1.7"/><circle cx="691.7" cy="475.7" r="3.4" fill="#fff" stroke="#4a4ae0" stroke-width="1.7"/><circle cx="698.3" cy="482.3" r="3.4" fill="#fff" stroke="#4a4ae0" stroke-width="1.7"/><circle cx="725.5" cy="513.0" r="3.4" fill="#fff" stroke="#4a4ae0" stroke-width="1.7"/><circle cx="736.0" cy="524.0" r="3.4" fill="#fff" stroke="#4a4ae0" stroke-width="1.7"/><circle cx="755.0" cy="544.3" r="3.4" fill="#fff" stroke="#4a4ae0" stroke-width="1.7"/><circle cx="763.5" cy="553.7" r="3.4" fill="#fff" stroke="#4a4ae0" stroke-width="1.7"/><circle cx="778.0" cy="572.2" r="3.4" fill="#fff" stroke="#4a4ae0" stroke-width="1.7"/><circle cx="784.0" cy="581.3" r="3.4" fill="#fff" stroke="#4a4ae0" stroke-width="1.7"/><circle cx="793.3" cy="597.7" r="3.4" fill="#fff" stroke="#4a4ae0" stroke-width="1.7"/><circle cx="796.7" cy="604.8" r="3.4" fill="#fff" stroke="#4a4ae0" stroke-width="1.7"/><circle cx="803.0" cy="620.3" r="3.4" fill="#fff" stroke="#4a4ae0" stroke-width="1.7"/><circle cx="806.0" cy="628.7" r="3.4" fill="#fff" stroke="#4a4ae0" stroke-width="1.7"/><circle cx="1038.3" cy="247.7" r="3.4" fill="#fff" stroke="#4a4ae0" stroke-width="1.7"/><circle cx="1039.7" cy="258.3" r="3.4" fill="#fff" stroke="#4a4ae0" stroke-width="1.7"/><circle cx="1037.7" cy="290.7" r="3.4" fill="#fff" stroke="#4a4ae0" stroke-width="1.7"/><circle cx="1034.3" cy="303.3" r="3.4" fill="#fff" stroke="#4a4ae0" stroke-width="1.7"/><circle cx="1026.0" cy="326.3" r="3.4" fill="#fff" stroke="#4a4ae0" stroke-width="1.7"/><circle cx="1021.0" cy="336.7" r="3.4" fill="#fff" stroke="#4a4ae0" stroke-width="1.7"/><circle cx="1010.7" cy="355.7" r="3.4" fill="#fff" stroke="#4a4ae0" stroke-width="1.7"/><circle cx="1005.3" cy="364.3" r="3.4" fill="#fff" stroke="#4a4ae0" stroke-width="1.7"/><circle cx="994.0" cy="380.0" r="3.4" fill="#fff" stroke="#4a4ae0" stroke-width="1.7"/><circle cx="988.0" cy="387.0" r="3.4" fill="#fff" stroke="#4a4ae0" stroke-width="1.7"/><circle cx="976.3" cy="401.3" r="3.4" fill="#fff" stroke="#4a4ae0" stroke-width="1.7"/><circle cx="970.7" cy="408.7" r="3.4" fill="#fff" stroke="#4a4ae0" stroke-width="1.7"/><circle cx="1084.3" cy="224.3" r="3.4" fill="#fff" stroke="#4a4ae0" stroke-width="1.7"/><circle cx="1087.3" cy="246.0" r="3.4" fill="#fff" stroke="#4a4ae0" stroke-width="1.7"/><circle cx="1087.7" cy="257.0" r="3.4" fill="#fff" stroke="#4a4ae0" stroke-width="1.7"/><circle cx="1080.7" cy="289.3" r="3.4" fill="#fff" stroke="#4a4ae0" stroke-width="1.7"/><circle cx="1075.3" cy="302.7" r="3.4" fill="#fff" stroke="#4a4ae0" stroke-width="1.7"/><circle cx="1062.3" cy="326.3" r="3.4" fill="#fff" stroke="#4a4ae0" stroke-width="1.7"/><circle cx="1054.7" cy="336.7" r="3.4" fill="#fff" stroke="#4a4ae0" stroke-width="1.7"/><circle cx="1039.3" cy="356.0" r="3.4" fill="#fff" stroke="#4a4ae0" stroke-width="1.7"/><circle cx="1031.7" cy="365.0" r="3.4" fill="#fff" stroke="#4a4ae0" stroke-width="1.7"/><circle cx="1017.3" cy="381.0" r="3.4" fill="#fff" stroke="#4a4ae0" stroke-width="1.7"/><circle cx="1010.7" cy="388.0" r="3.4" fill="#fff" stroke="#4a4ae0" stroke-width="1.7"/><circle cx="998.7" cy="403.3" r="3.4" fill="#fff" stroke="#4a4ae0" stroke-width="1.7"/><circle cx="993.3" cy="411.7" r="3.4" fill="#fff" stroke="#4a4ae0" stroke-width="1.7"/><circle cx="1125.3" cy="229.3" r="3.4" fill="#fff" stroke="#4a4ae0" stroke-width="1.7"/><circle cx="1126.7" cy="235.7" r="3.4" fill="#fff" stroke="#4a4ae0" stroke-width="1.7"/><circle cx="1129.0" cy="254.0" r="3.4" fill="#fff" stroke="#4a4ae0" stroke-width="1.7"/><circle cx="1130.0" cy="266.0" r="3.4" fill="#fff" stroke="#4a4ae0" stroke-width="1.7"/><circle cx="1125.2" cy="303.2" r="3.4" fill="#fff" stroke="#4a4ae0" stroke-width="1.7"/><circle cx="1120.3" cy="318.3" r="3.4" fill="#fff" stroke="#4a4ae0" stroke-width="1.7"/><circle cx="559.3" cy="794.7" r="3.4" fill="#fff" stroke="#4a4ae0" stroke-width="1.7"/><circle cx="548.7" cy="811.3" r="3.4" fill="#fff" stroke="#4a4ae0" stroke-width="1.7"/><circle cx="531.3" cy="839.7" r="3.4" fill="#fff" stroke="#4a4ae0" stroke-width="1.7"/><circle cx="524.7" cy="851.3" r="3.4" fill="#fff" stroke="#4a4ae0" stroke-width="1.7"/><circle cx="581.6" cy="799.7" r="3.4" fill="#fff" stroke="#4a4ae0" stroke-width="1.7"/><circle cx="569.1" cy="816.8" r="3.4" fill="#fff" stroke="#4a4ae0" stroke-width="1.7"/><circle cx="549.8" cy="845.3" r="3.4" fill="#fff" stroke="#4a4ae0" stroke-width="1.7"/><circle cx="542.9" cy="856.7" r="3.4" fill="#fff" stroke="#4a4ae0" stroke-width="1.7"/><circle cx="615.3" cy="805.3" r="3.4" fill="#fff" stroke="#4a4ae0" stroke-width="1.7"/><circle cx="605.7" cy="823.2" r="3.4" fill="#fff" stroke="#4a4ae0" stroke-width="1.7"/><circle cx="589.6" cy="852.6" r="3.4" fill="#fff" stroke="#4a4ae0" stroke-width="1.7"/><circle cx="583.1" cy="864.2" r="3.4" fill="#fff" stroke="#4a4ae0" stroke-width="1.7"/><circle cx="631.0" cy="807.5" r="3.4" fill="#fff" stroke="#4a4ae0" stroke-width="1.7"/><circle cx="619.5" cy="825.0" r="3.4" fill="#fff" stroke="#4a4ae0" stroke-width="1.7"/><circle cx="601.2" cy="854.3" r="3.4" fill="#fff" stroke="#4a4ae0" stroke-width="1.7"/><circle cx="594.3" cy="866.2" r="3.4" fill="#fff" stroke="#4a4ae0" stroke-width="1.7"/><circle cx="683.9" cy="814.7" r="3.4" fill="#fff" stroke="#4a4ae0" stroke-width="1.7"/><circle cx="675.3" cy="831.3" r="3.4" fill="#fff" stroke="#4a4ae0" stroke-width="1.7"/><circle cx="660.0" cy="858.7" r="3.4" fill="#fff" stroke="#4a4ae0" stroke-width="1.7"/><circle cx="653.4" cy="869.3" r="3.4" fill="#fff" stroke="#4a4ae0" stroke-width="1.7"/><circle cx="725.8" cy="821.2" r="3.4" fill="#fff" stroke="#4a4ae0" stroke-width="1.7"/><circle cx="719.2" cy="836.8" r="3.4" fill="#fff" stroke="#4a4ae0" stroke-width="1.7"/><circle cx="706.7" cy="862.0" r="3.4" fill="#fff" stroke="#4a4ae0" stroke-width="1.7"/><circle cx="700.8" cy="871.5" r="3.4" fill="#fff" stroke="#4a4ae0" stroke-width="1.7"/><circle cx="759.7" cy="826.7" r="3.4" fill="#fff" stroke="#4a4ae0" stroke-width="1.7"/><circle cx="755.3" cy="840.8" r="3.4" fill="#fff" stroke="#4a4ae0" stroke-width="1.7"/><circle cx="745.3" cy="863.3" r="3.4" fill="#fff" stroke="#4a4ae0" stroke-width="1.7"/><circle cx="739.7" cy="871.7" r="3.4" fill="#fff" stroke="#4a4ae0" stroke-width="1.7"/><circle cx="784.2" cy="832.7" r="3.4" fill="#fff" stroke="#4a4ae0" stroke-width="1.7"/><circle cx="780.8" cy="845.7" r="3.4" fill="#fff" stroke="#4a4ae0" stroke-width="1.7"/><circle cx="772.5" cy="865.5" r="3.4" fill="#fff" stroke="#4a4ae0" stroke-width="1.7"/><circle cx="767.5" cy="872.2" r="3.4" fill="#fff" stroke="#4a4ae0" stroke-width="1.7"/><circle cx="804.0" cy="834.6" r="3.4" fill="#fff" stroke="#4a4ae0" stroke-width="1.7"/><circle cx="802.0" cy="848.1" r="3.4" fill="#fff" stroke="#4a4ae0" stroke-width="1.7"/><circle cx="795.0" cy="867.1" r="3.4" fill="#fff" stroke="#4a4ae0" stroke-width="1.7"/><circle cx="790.0" cy="872.6" r="3.4" fill="#fff" stroke="#4a4ae0" stroke-width="1.7"/><circle cx="1049.0" cy="221.0" r="3.4" fill="#fff" stroke="#4a4ae0" stroke-width="1.7"/><circle cx="1066.0" cy="220.0" r="3.4" fill="#fff" stroke="#4a4ae0" stroke-width="1.7"/><circle cx="1096.7" cy="220.3" r="3.4" fill="#fff" stroke="#4a4ae0" stroke-width="1.7"/><circle cx="1110.3" cy="221.7" r="3.4" fill="#fff" stroke="#4a4ae0" stroke-width="1.7"/><circle cx="1053.7" cy="236.3" r="3.4" fill="#fff" stroke="#4a4ae0" stroke-width="1.7"/><circle cx="1070.3" cy="235.7" r="3.4" fill="#fff" stroke="#4a4ae0" stroke-width="1.7"/><circle cx="1100.7" cy="237.3" r="3.4" fill="#fff" stroke="#4a4ae0" stroke-width="1.7"/><circle cx="1114.3" cy="239.7" r="3.4" fill="#fff" stroke="#4a4ae0" stroke-width="1.7"/><circle cx="1056.7" cy="268.7" r="3.4" fill="#fff" stroke="#4a4ae0" stroke-width="1.7"/><circle cx="1072.3" cy="268.3" r="3.4" fill="#fff" stroke="#4a4ae0" stroke-width="1.7"/><circle cx="1102.3" cy="271.3" r="3.4" fill="#fff" stroke="#4a4ae0" stroke-width="1.7"/><circle cx="1116.7" cy="274.7" r="3.4" fill="#fff" stroke="#4a4ae0" stroke-width="1.7"/><circle cx="1056.0" cy="277.3" r="3.4" fill="#fff" stroke="#4a4ae0" stroke-width="1.7"/><circle cx="1071.0" cy="276.7" r="3.4" fill="#fff" stroke="#4a4ae0" stroke-width="1.7"/><circle cx="1100.7" cy="280.0" r="3.4" fill="#fff" stroke="#4a4ae0" stroke-width="1.7"/><circle cx="1115.3" cy="284.0" r="3.4" fill="#fff" stroke="#4a4ae0" stroke-width="1.7"/><circle cx="1008.0" cy="373.3" r="3.4" fill="#fff" stroke="#4a4ae0" stroke-width="1.7"/><circle cx="1016.0" cy="373.7" r="3.4" fill="#fff" stroke="#4a4ae0" stroke-width="1.7"/><circle cx="989.3" cy="394.3" r="3.4" fill="#fff" stroke="#4a4ae0" stroke-width="1.7"/><circle cx="996.7" cy="394.7" r="3.4" fill="#fff" stroke="#4a4ae0" stroke-width="1.7"/><circle cx="972.7" cy="417.3" r="3.4" fill="#fff" stroke="#4a4ae0" stroke-width="1.7"/><circle cx="980.3" cy="418.7" r="3.4" fill="#fff" stroke="#4a4ae0" stroke-width="1.7"/><circle cx="999.4" cy="432.3" r="3.4" fill="#fff" stroke="#4a4ae0" stroke-width="1.7"/><circle cx="1010.9" cy="444.7" r="3.4" fill="#fff" stroke="#4a4ae0" stroke-width="1.7"/><rect x="1027.5" y="217.5" width="9" height="9" fill="#fff" stroke="#4a4ae0" stroke-width="1.7"/><rect x="1032.5" y="232.5" width="9" height="9" fill="#fff" stroke="#4a4ae0" stroke-width="1.7"/><rect x="1036.5" y="264.5" width="9" height="9" fill="#fff" stroke="#4a4ae0" stroke-width="1.7"/><rect x="1036.5" y="273.5" width="9" height="9" fill="#fff" stroke="#4a4ae0" stroke-width="1.7"/><rect x="1026.5" y="311.5" width="9" height="9" fill="#fff" stroke="#4a4ae0" stroke-width="1.7"/><rect x="1011.5" y="342.5" width="9" height="9" fill="#fff" stroke="#4a4ae0" stroke-width="1.7"/><rect x="995.5" y="368.5" width="9" height="9" fill="#fff" stroke="#4a4ae0" stroke-width="1.7"/><rect x="977.5" y="389.5" width="9" height="9" fill="#fff" stroke="#4a4ae0" stroke-width="1.7"/><rect x="960.5" y="411.5" width="9" height="9" fill="#fff" stroke="#4a4ae0" stroke-width="1.7"/><rect x="1078.5" y="214.5" width="9" height="9" fill="#fff" stroke="#4a4ae0" stroke-width="1.7"/><rect x="1082.5" y="230.5" width="9" height="9" fill="#fff" stroke="#4a4ae0" stroke-width="1.7"/><rect x="1083.5" y="263.5" width="9" height="9" fill="#fff" stroke="#4a4ae0" stroke-width="1.7"/><rect x="1081.5" y="271.5" width="9" height="9" fill="#fff" stroke="#4a4ae0" stroke-width="1.7"/><rect x="1065.5" y="311.5" width="9" height="9" fill="#fff" stroke="#4a4ae0" stroke-width="1.7"/><rect x="1042.5" y="342.5" width="9" height="9" fill="#fff" stroke="#4a4ae0" stroke-width="1.7"/><rect x="1019.5" y="369.5" width="9" height="9" fill="#fff" stroke="#4a4ae0" stroke-width="1.7"/><rect x="999.5" y="390.5" width="9" height="9" fill="#fff" stroke="#4a4ae0" stroke-width="1.7"/><rect x="983.5" y="415.5" width="9" height="9" fill="#fff" stroke="#4a4ae0" stroke-width="1.7"/><rect x="1119.5" y="218.5" width="9" height="9" fill="#fff" stroke="#4a4ae0" stroke-width="1.7"/><rect x="1123.5" y="237.5" width="9" height="9" fill="#fff" stroke="#4a4ae0" stroke-width="1.7"/><rect x="1126.5" y="273.5" width="9" height="9" fill="#fff" stroke="#4a4ae0" stroke-width="1.7"/><rect x="1125.5" y="283.5" width="9" height="9" fill="#fff" stroke="#4a4ae0" stroke-width="1.7"/><rect x="1111.0" y="329.0" width="9" height="9" fill="#fff" stroke="#4a4ae0" stroke-width="1.7"/><rect x="1093.0" y="364.5" width="9" height="9" fill="#fff" stroke="#4a4ae0" stroke-width="1.7"/><rect x="1072.9" y="393.0" width="9" height="9" fill="#fff" stroke="#4a4ae0" stroke-width="1.7"/><rect x="1043.2" y="434.5" width="9" height="9" fill="#fff" stroke="#4a4ae0" stroke-width="1.7"/><rect x="1017.8" y="452.5" width="9" height="9" fill="#fff" stroke="#4a4ae0" stroke-width="1.7"/><rect x="1226.5" y="280.5" width="9" height="9" fill="#fff" stroke="#4a4ae0" stroke-width="1.7"/><rect x="1230.5" y="323.5" width="9" height="9" fill="#fff" stroke="#4a4ae0" stroke-width="1.7"/><rect x="1229.5" y="333.5" width="9" height="9" fill="#fff" stroke="#4a4ae0" stroke-width="1.7"/><rect x="1220.2" y="388.8" width="9" height="9" fill="#fff" stroke="#4a4ae0" stroke-width="1.7"/><rect x="1204.3" y="433.3" width="9" height="9" fill="#fff" stroke="#4a4ae0" stroke-width="1.7"/><rect x="1183.1" y="468.3" width="9" height="9" fill="#fff" stroke="#4a4ae0" stroke-width="1.7"/><rect x="1164.0" y="491.5" width="9" height="9" fill="#fff" stroke="#4a4ae0" stroke-width="1.7"/><rect x="1141.3" y="506.5" width="9" height="9" fill="#fff" stroke="#4a4ae0" stroke-width="1.7"/><rect x="668.5" y="451.5" width="9" height="9" fill="#fff" stroke="#4a4ae0" stroke-width="1.7"/><rect x="680.5" y="464.5" width="9" height="9" fill="#fff" stroke="#4a4ae0" stroke-width="1.7"/><rect x="700.5" y="484.5" width="9" height="9" fill="#fff" stroke="#4a4ae0" stroke-width="1.7"/><rect x="710.5" y="497.5" width="9" height="9" fill="#fff" stroke="#4a4ae0" stroke-width="1.7"/><rect x="742.0" y="530.5" width="9" height="9" fill="#fff" stroke="#4a4ae0" stroke-width="1.7"/><rect x="767.5" y="558.5" width="9" height="9" fill="#fff" stroke="#4a4ae0" stroke-width="1.7"/><rect x="785.5" y="586.0" width="9" height="9" fill="#fff" stroke="#4a4ae0" stroke-width="1.7"/><rect x="795.5" y="607.5" width="9" height="9" fill="#fff" stroke="#4a4ae0" stroke-width="1.7"/><rect x="804.5" y="632.5" width="9" height="9" fill="#fff" stroke="#4a4ae0" stroke-width="1.7"/><rect x="566.0" y="774.0" width="8" height="8" fill="#fff" stroke="#4a4ae0" stroke-width="1.7"/><rect x="590.0" y="778.5" width="8" height="8" fill="#fff" stroke="#4a4ae0" stroke-width="1.7"/><rect x="621.0" y="783.5" width="8" height="8" fill="#fff" stroke="#4a4ae0" stroke-width="1.7"/><rect x="638.5" y="786.0" width="8" height="8" fill="#fff" stroke="#4a4ae0" stroke-width="1.7"/><rect x="688.5" y="794.0" width="8" height="8" fill="#fff" stroke="#4a4ae0" stroke-width="1.7"/><rect x="728.5" y="801.5" width="8" height="8" fill="#fff" stroke="#4a4ae0" stroke-width="1.7"/><rect x="760.0" y="808.5" width="8" height="8" fill="#fff" stroke="#4a4ae0" stroke-width="1.7"/><rect x="783.5" y="815.7" width="8" height="8" fill="#fff" stroke="#4a4ae0" stroke-width="1.7"/><rect x="802.0" y="817.0" width="8" height="8" fill="#fff" stroke="#4a4ae0" stroke-width="1.7"/><rect x="534.0" y="824.0" width="8" height="8" fill="#fff" stroke="#4a4ae0" stroke-width="1.7"/><rect x="552.7" y="830.0" width="8" height="8" fill="#fff" stroke="#4a4ae0" stroke-width="1.7"/><rect x="592.0" y="837.0" width="8" height="8" fill="#fff" stroke="#4a4ae0" stroke-width="1.7"/><rect x="604.0" y="838.5" width="8" height="8" fill="#fff" stroke="#4a4ae0" stroke-width="1.7"/><rect x="662.7" y="844.0" width="8" height="8" fill="#fff" stroke="#4a4ae0" stroke-width="1.7"/><rect x="708.5" y="848.5" width="8" height="8" fill="#fff" stroke="#4a4ae0" stroke-width="1.7"/><rect x="747.0" y="851.0" width="8" height="8" fill="#fff" stroke="#4a4ae0" stroke-width="1.7"/><rect x="773.5" y="854.7" width="8" height="8" fill="#fff" stroke="#4a4ae0" stroke-width="1.7"/><rect x="796.0" y="857.7" width="8" height="8" fill="#fff" stroke="#4a4ae0" stroke-width="1.7"/><rect x="514.0" y="859.0" width="8" height="8" fill="#fff" stroke="#4a4ae0" stroke-width="1.7"/><rect x="532.0" y="864.0" width="8" height="8" fill="#fff" stroke="#4a4ae0" stroke-width="1.7"/><rect x="572.7" y="871.8" width="8" height="8" fill="#fff" stroke="#4a4ae0" stroke-width="1.7"/><rect x="583.5" y="874.0" width="8" height="8" fill="#fff" stroke="#4a4ae0" stroke-width="1.7"/><rect x="642.7" y="876.0" width="8" height="8" fill="#fff" stroke="#4a4ae0" stroke-width="1.7"/><rect x="691.0" y="877.0" width="8" height="8" fill="#fff" stroke="#4a4ae0" stroke-width="1.7"/><rect x="730.0" y="876.0" width="8" height="8" fill="#fff" stroke="#4a4ae0" stroke-width="1.7"/><rect x="758.5" y="875.0" width="8" height="8" fill="#fff" stroke="#4a4ae0" stroke-width="1.7"/><rect x="781.0" y="874.0" width="8" height="8" fill="#fff" stroke="#4a4ae0" stroke-width="1.7"/></g></svg>
<div class="a" style="left:7px;top:1014px;width:15px;height:15px;border:1px solid #bbb"></div>
<svg class="a" style="left:9px;top:1016px" width="11" height="11" viewBox="0 0 11 11"><circle cx="5.5" cy="5.5" r="4" fill="none" stroke="#ccc" stroke-width="1.1" stroke-dasharray="1 1.5"/></svg>
<div class="t" style="left:37px;top:1017px;color:#dadada">Click and drag to move selection.</div>
<div class="t" style="left:498px;top:1017px;color:#dadada">RGB/Alpha (8-bit integer/channel)&nbsp; sRGB-elle-V2-srgbtrc.icc</div>
<div class="a" style="left:1412px;top:1011px;width:120px;height:24px;border:1px solid #282828;border-radius:2px"></div>
<div class="t" style="left:1418px;top:1016px;color:#dadada;font-size:12.6px"><span class="u">1</span>,600 x 1,600 (0 B)</div>
<svg class="a" style="left:1649px;top:1015px" width="14" height="14" viewBox="0 0 14 14" fill="none" stroke="#9a9a9a" stroke-width="1.2"><path d="M3,3A5,5 0 1 1 3,11"/><rect x="3.5" y="6" width="5" height="4"/><path d="M1,2L3.5,3L3,0.5" /></svg>
<div class="t" style="left:1740px;top:1016px;color:#e8e8e8;font-size:13.5px">141%</div>
<div class="a" style="left:1790px;top:1021px;width:80px;height:4px;border-radius:2px;background:#262626"></div>
<div class="a" style="left:1790px;top:1021px;width:28px;height:4px;border-radius:2px;background:#6c8db4"></div>
<div class="a" style="left:1815px;top:1016px;width:12px;height:13px;border:1px solid #262626;border-radius:3px;background:#3c3c3c"></div>
<div class="a" style="left:1873px;top:1012px;width:22px;height:21px;border:1px solid #262626;border-radius:3px;background:#2c2c2c"></div>
<div class="a" style="left:1878px;top:1015px;width:12px;height:15px;background:#f4f4f4"></div>
<svg class="a" style="left:1878px;top:1016px" width="12" height="13" viewBox="0 0 12 13"><circle cx="6" cy="6.5" r="4" fill="#7ab0e8" stroke="#e8d84a" stroke-width="1.4" stroke-dasharray="1.5 1"/></svg>
<svg class="a" style="left:1906px;top:1026px" width="12" height="11" viewBox="0 0 12 11" fill="#555"><rect x="9" y="0" width="2" height="2"/><rect x="6" y="3" width="2" height="2"/><rect x="9" y="3" width="2" height="2"/><rect x="3" y="6" width="2" height="2"/><rect x="6" y="6" width="2" height="2"/><rect x="9" y="6" width="2" height="2"/><rect x="0" y="9" width="2" height="2"/><rect x="3" y="9" width="2" height="2"/><rect x="6" y="9" width="2" height="2"/><rect x="9" y="9" width="2" height="2"/></svg>
<div class="a" style="left:1662px;top:87px;width:258px;height:1px;background:#444"></div>
<div class="a" style="left:1662px;top:64px;width:156px;height:24px;border:1px solid #424242;border-bottom:none;border-radius:3px 3px 0 0;background:#2e2e2e"></div>
<div class="t" style="left:1674px;top:69px;color:#e0e0e0;font-size:11.9px"><span class="u">A</span>dvanced Color Selector</div>
<div class="a" style="left:1818px;top:62px;width:91px;height:27px;border:1px solid #464646;border-bottom:none;border-radius:3px 3px 0 0;background:#353535"></div>
<div class="t" style="left:1829px;top:68px;color:#f0f0f0;font-size:12.2px">Tool <span class="u">O</span>ptions</div>
<div class="t" style="left:1666px;top:91px;color:#e6e6e6;font-size:12.2px">Tool &amp;Options</div>
<svg class="a" style="left:1906px;top:91px" width="12" height="12" viewBox="0 0 12 12" fill="none" stroke="#777" stroke-width="1"><rect x="0.5" y="0.5" width="11" height="11" rx="2"/><rect x="4.5" y="2.5" width="5" height="5"/><rect x="2.5" y="4.5" width="5" height="5"/></svg>
<div class="a" style="left:1667px;top:114px;width:43px;height:25px;border:1px solid #464646;border-bottom:none;border-radius:3px 3px 0 0;background:#2e2e2e"></div>
<svg class="a" style="left:1677px;top:117px" width="18" height="17" viewBox="0 0 18 17" fill="#d0d0d0"><rect x="1" y="0" width="2" height="2"/><rect x="1" y="4" width="2" height="2"/><rect x="1" y="8" width="2" height="2"/><rect x="1" y="12" width="3" height="2"/><rect x="6" y="12" width="2" height="2"/><rect x="10" y="12" width="2" height="2"/><rect x="14" y="12" width="2" height="2"/></svg>
<div class="a" style="left:1711px;top:114px;width:44px;height:25px;border:1px solid #464646;border-bottom:none;border-radius:3px 3px 0 0;background:#2e2e2e"></div>
<svg class="a" style="left:1721px;top:117px" width="18" height="17" viewBox="0 0 18 17"><path d="M1.5,15.5L15.5,1.5" stroke="#d0d0d0" stroke-width="1.6"/></svg>
<div class="a" style="left:1755px;top:112px;width:43px;height:28px;border:1px solid #4a4a4a;border-bottom:none;border-radius:3px 3px 0 0;background:#363636"></div>
<svg class="a" style="left:1766px;top:116px" width="18" height="17" viewBox="0 0 18 17"><path d="M5,1.5L11.5,8L6.5,13L1,7.5Z" fill="none" stroke="#e0e0e0" stroke-width="1.5"/><path d="M1.5,8H11.5L6.5,13Z" fill="#e0e0e0"/><path d="M4,1L12,9" stroke="#e0e0e0" stroke-width="1.5"/><path d="M12.5,9Q14.5,12 13,14" stroke="#e0e0e0" stroke-width="1.5" fill="none"/></svg>
<div class="t" style="left:1898px;top:124px;color:#f0f0f0;font-size:13px">Fill</div>
<div class="a" style="left:1667px;top:138px;width:249px;height:187px;border:1px solid #464646;background:#363636"></div>
<div class="a" style="left:1756px;top:138px;width:41px;height:2px;background:#363636"></div>
<div class="a" style="left:1681px;top:151px;width:17px;height:17px;border:1px solid #111;background:#fff"></div>
<svg class="a" style="left:1682px;top:152px" width="15" height="15" viewBox="0 0 15 15"><path d="M1,1L14,14M14,1L1,14" stroke="#e00" stroke-width="1"/></svg>
<div class="a" style="left:1705px;top:151px;width:17px;height:17px;border:1px solid #111;background:#9a9a9a"></div>
<div class="a" style="left:1729px;top:151px;width:17px;height:17px;border:1px solid #111;background:linear-gradient(90deg,#eee,#000)"></div>
<div class="a" style="left:1750px;top:149px;width:23px;height:22px;border:1px solid #252525;border-radius:3px;background:#2c2c2c"></div>
<div class="a" style="left:1754px;top:152px;width:15px;height:15px;background:conic-gradient(#fff 0 25%,#aaa 0 50%,#fff 0 75%,#aaa 0) 0 0/10px 10px"></div>
<div class="t" style="left:1778px;top:153px;color:#e8e8e8;font-size:12.4px">Mesh Gradient</div>
<div class="t" style="left:1677px;top:189px;color:#e6e6e6;font-size:12.4px">Stop:</div>
<div class="a" style="left:1795px;top:184px;width:110px;height:22px;border:1px solid #262626;border-radius:3px;background:#2e2e2e"></div>
<div class="a" style="left:1798px;top:187px;width:104px;height:16px;background:#3f6c06;border:1px solid #222"></div>
<div class="t" style="left:1677px;top:219px;color:#e6e6e6;font-size:12.4px">Rows:</div>
<div class="a" style="left:1795px;top:214px;width:110px;height:22px;border:1px solid #2a2a2a;border-radius:3px;background:#1c1c1c"></div>
<div class="a" style="left:1890px;top:215px;width:14px;height:20px;border-left:1px solid #2a2a2a;background:#262626"></div>
<svg class="a" style="left:1892px;top:217px" width="10" height="16" viewBox="0 0 10 16"><path d="M1,6L5,2L9,6Z M1,10L5,14L9,10Z" fill="#aaa"/></svg>
<div class="t" style="left:1800px;top:218px;color:#e6e6e6;font-size:12.4px">7</div>
<div class="t" style="left:1677px;top:248px;color:#e6e6e6;font-size:12.4px">Columns:</div>
<div class="a" style="left:1795px;top:243px;width:110px;height:22px;border:1px solid #2a2a2a;border-radius:3px;background:#1c1c1c"></div>
<div class="a" style="left:1890px;top:244px;width:14px;height:20px;border-left:1px solid #2a2a2a;background:#262626"></div>
<svg class="a" style="left:1892px;top:246px" width="10" height="16" viewBox="0 0 10 16"><path d="M1,6L5,2L9,6Z M1,10L5,14L9,10Z" fill="#aaa"/></svg>
<div class="t" style="left:1800px;top:247px;color:#e6e6e6;font-size:12.4px">8</div>
<div class="t" style="left:1677px;top:278px;color:#e6e6e6;font-size:12.4px">Smoothing:</div>
<div class="a" style="left:1795px;top:273px;width:110px;height:22px;border:1px solid #262626;border-radius:3px;background:linear-gradient(#3a3a3a,#333)"></div>
<div class="t" style="left:1799px;top:277px;color:#e6e6e6;font-size:12.4px">Bilinear</div>
<svg class="a" style="left:1889px;top:281px" width="9" height="6" viewBox="0 0 9 6"><path d="M0,0.5H8L4,4.5Z" fill="#ccc"/></svg>
<svg class="a" style="left:1784px;top:532px" width="18" height="3" viewBox="0 0 18 3" fill="#777"><rect x="0" y="0" width="2" height="2"/><rect x="3" y="0" width="2" height="2"/><rect x="6" y="0" width="2" height="2"/><rect x="9" y="0" width="2" height="2"/><rect x="12" y="0" width="2" height="2"/><rect x="15" y="0" width="2" height="2"/></svg>
<svg class="a" style="left:1659px;top:527px" width="3" height="18" viewBox="0 0 3 18" fill="#666"><rect x="0" y="0" width="2" height="2"/><rect x="0" y="3" width="2" height="2"/><rect x="0" y="6" width="2" height="2"/><rect x="0" y="9" width="2" height="2"/><rect x="0" y="12" width="2" height="2"/><rect x="0" y="15" width="2" height="2"/></svg>
<div class="a" style="left:1662px;top:563px;width:258px;height:1px;background:#444"></div>
<div class="a" style="left:1663px;top:538px;width:58px;height:26px;border:1px solid #464646;border-bottom:none;border-radius:3px 3px 0 0;background:#363636"></div>
<div class="t" style="left:1674px;top:545px;color:#f0f0f0;font-size:12.4px">La<span class="u">y</span>ers</div>
<div class="a" style="left:1722px;top:540px;width:96px;height:23px;border:1px solid #424242;border-bottom:none;border-radius:3px 3px 0 0;background:#2e2e2e"></div>
<div class="t" style="left:1733px;top:546px;color:#e0e0e0;font-size:12.4px"><span class="u">B</span>rush Presets</div>
<div class="t" style="left:1666px;top:568px;color:#e6e6e6;font-size:12.4px">La&amp;yers</div>
<svg class="a" style="left:1892px;top:567px" width="28" height="13" viewBox="0 0 28 13" fill="none" stroke="#777" stroke-width="1"><rect x="0.5" y="0.5" width="11" height="11" rx="2"/><rect x="4.5" y="2.5" width="5" height="5"/><rect x="2.5" y="4.5" width="5" height="5"/><rect x="15.5" y="0.5" width="11" height="11" rx="2"/><path d="M17.5,2.5L24.5,9.5M24.5,2.5L17.5,9.5"/></svg>
<div class="a" style="left:1664px;top:585px;width:212px;height:22px;border:1px solid #262626;border-radius:3px;background:linear-gradient(#3a3a3a,#333)"></div>
<div class="t" style="left:1668px;top:590px;color:#e8e8e8;font-size:12.4px">Normal</div>
<svg class="a" style="left:1860px;top:593px" width="9" height="6" viewBox="0 0 9 6"><path d="M0,0.5H8L4,4.5Z" fill="#ccc"/></svg>
<div class="a" style="left:1878px;top:585px;width:41px;height:22px;border:1px solid #262626;border-radius:3px;background:linear-gradient(#3a3a3a,#333)"></div>
<svg class="a" style="left:1882px;top:588px" width="34" height="15" viewBox="0 0 34 15" fill="none" stroke="#c8c8c8" stroke-width="1.1"><path d="M1,1.5H12L7.5,7V13L5.5,11.5V7Z"/><path d="M21,5H29L25,9Z" fill="#c8c8c8" stroke="none"/></svg>
<div class="a" style="left:1664px;top:609px;width:210px;height:27px;border-radius:2px;background:#52708f"></div>
<div class="t" style="left:1727px;top:616px;color:#f2f2f2;font-size:12.4px">Opacity:&nbsp; 100%</div>
<div class="a" style="left:1873px;top:609px;width:14px;height:27px;border:1px solid #2a2a2a;border-radius:0 3px 3px 0;background:#2d2d2d"></div>
<svg class="a" style="left:1875px;top:614px" width="10" height="18" viewBox="0 0 10 18"><path d="M1,6L5,2L9,6Z" fill="#555"/><path d="M1,12L5,16L9,12Z" fill="#bbb"/></svg>
<div class="a" style="left:1890px;top:609px;width:29px;height:27px;border:1px solid #262626;border-radius:3px;background:linear-gradient(#3a3a3a,#333)"></div>
<svg class="a" style="left:1895px;top:613px" width="22" height="20" viewBox="0 0 22 20" fill="none" stroke="#d0d0d0" stroke-width="1.3"><rect x="1.5" y="1.5" width="15" height="14"/><path d="M1.5,5H16.5M5,8H13M5,11H13M5,8V11"/><path d="M16,17H21L18.5,19.5Z" fill="#d0d0d0" stroke="none"/></svg>
<div class="a" style="left:1664px;top:638px;width:255px;height:337px;background:#1c1c1c"></div>
<div class="a" style="left:1687px;top:639px;width:232px;height:26px;background:#52708f"></div>
<div class="a" style="left:1713px;top:639px;width:1px;height:26px;background:#1c1c1c"></div>
<div class="a" style="left:1728px;top:639px;width:1px;height:26px;background:#1c1c1c"></div>
<div class="a" style="left:1860px;top:639px;width:1px;height:26px;background:#1c1c1c"></div>
<div class="a" style="left:1879px;top:639px;width:1px;height:26px;background:#1c1c1c"></div>
<div class="a" style="left:1898px;top:639px;width:1px;height:26px;background:#1c1c1c"></div>
<svg class="a" style="left:1666px;top:644px" width="18" height="14" viewBox="0 0 18 14"><path d="M1,7Q9,-1 17,7Q9,15 1,7Z" fill="#ddd"/><path d="M1,7Q9,2 17,7Q9,12 1,7Z" fill="#1c1c1c"/><circle cx="9" cy="6.5" r="3.2" fill="#ddd"/><path d="M3,8.5Q9,13 15,8.5" stroke="#ddd" stroke-width="1.3" fill="none"/></svg>
<div class="a" style="left:1689px;top:641px;width:23px;height:23px;border:1px solid #111;background:conic-gradient(#fff 0 25%,#ccc 0 50%,#fff 0 75%,#ccc 0) 0 0/6px 6px"></div>
<svg class="a" style="left:1690px;top:642px" width="21" height="21" viewBox="0 0 21 21"><path d="M4,20Q4,6 12,4Q17,3 19,6L16,8Q13,7 11,9Q9,12 9,20Z" fill="#3f7a10"/><path d="M4,20Q4,6 12,4L11,6Q7,9 7,20Z" fill="#1a2a05"/></svg>
<svg class="a" style="left:1714px;top:640px" width="14" height="14" viewBox="0 0 14 14" fill="none" stroke="#d6d6d6" stroke-width="1"><path d="M3,3H11L10,10H4Z"/><rect x="1" y="1" width="3" height="3" fill="#52708f"/><rect x="10" y="1" width="3" height="3" fill="#52708f"/><rect x="2" y="9" width="3" height="3" fill="#52708f"/></svg>
<div class="t" style="left:1742px;top:647px;color:#f4f4f4;font-size:12px;font-weight:bold">Vector Layer</div>
<svg class="a" style="left:1863px;top:645px" width="14" height="14" viewBox="0 0 14 14"><path d="M3,6H11V12H3Z" fill="#7d92a8"/><path d="M5,6V4Q5,2 7,2Q9,2 9,4" fill="none" stroke="#7d92a8" stroke-width="1.3"/></svg>
<div class="t" style="left:1880px;top:644px;color:#7d92a8;font-size:19px;line-height:19px;font-style:italic;font-family:'Liberation Serif',serif">&#945;</div>
<svg class="a" style="left:1666px;top:983px" width="34" height="17" viewBox="0 0 34 17" fill="none" stroke="#cfcfcf" stroke-width="1.6"><rect x="1" y="1" width="15" height="15"/><path d="M8.5,4.5V12.5M4.5,8.5H12.5" stroke-width="2"/><path d="M23,7.5H31L27,11.5Z" fill="#cfcfcf" stroke="none" opacity="0.8"/></svg>
<svg class="a" style="left:1708px;top:983px" width="17" height="17" viewBox="0 0 17 17" fill="none" stroke="#cfcfcf" stroke-width="1.6"><rect x="5" y="1" width="11" height="11"/><path d="M1,4.5V16H12.5"/></svg>
<svg class="a" style="left:1740px;top:983px" width="17" height="17" viewBox="0 0 17 17" fill="none" stroke="#cfcfcf" stroke-width="1.6"><path d="M1,5L8.5,12.5L16,5"/></svg>
<svg class="a" style="left:1772px;top:983px" width="17" height="17" viewBox="0 0 17 17" fill="none" stroke="#cfcfcf" stroke-width="1.6"><path d="M1,12.5L8.5,5L16,12.5"/></svg>
<svg class="a" style="left:1804px;top:983px" width="17" height="17" viewBox="0 0 17 17" fill="none" stroke="#cfcfcf" stroke-width="1.6"><path d="M1,3H16M1,9H16M1,14.5H16"/><rect x="11" y="1" width="2" height="4" fill="#cfcfcf"/><rect x="4" y="7" width="2" height="4" fill="#cfcfcf"/><rect x="8" y="12.5" width="2" height="4" fill="#cfcfcf"/></svg>
<svg class="a" style="left:1896px;top:983px" width="16" height="17" viewBox="0 0 16 17" fill="#cfcfcf"><rect x="0" y="3" width="16" height="2" rx="1"/><rect x="5" y="0.5" width="6" height="3" rx="1"/><path d="M1.5,5.5H14.5L13.5,15Q13.5,16.5 12,16.5H4Q2.5,16.5 2.5,15Z"/></svg>
</body></html>
